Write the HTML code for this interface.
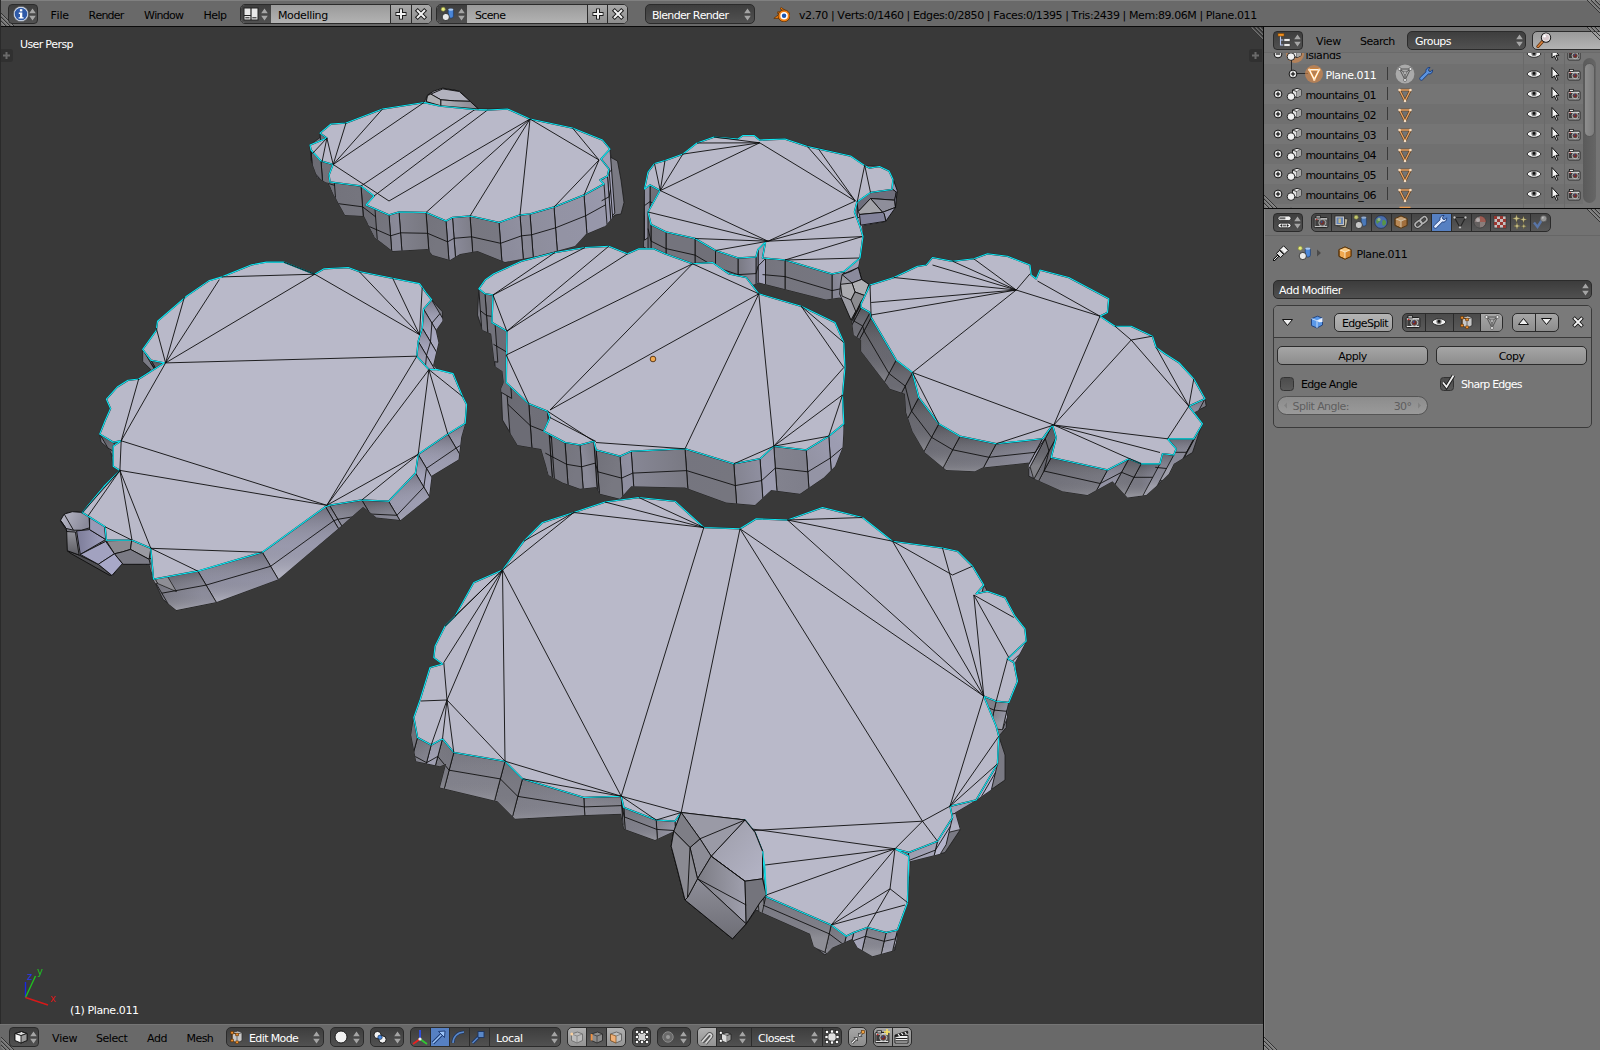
<!DOCTYPE html>
<html><head><meta charset="utf-8"><title>Blender</title>
<style>
*{box-sizing:border-box;margin:0;padding:0}
html,body{width:1600px;height:1050px;overflow:hidden;background:#727272;font-family:"DejaVu Sans","Liberation Sans",sans-serif;font-size:11px;color:#000}
.abs{position:absolute}
.t{position:absolute;white-space:nowrap;line-height:14px;font-size:11px;font-kerning:none}
.w{color:#fff}
.hdr{position:absolute;background:#727272}
.btn{position:absolute;border:1px solid #2b2b2b;border-radius:4px}
.dk{background:linear-gradient(#3e3e3e,#515151)}
.lt{background:linear-gradient(#a6a6a6,#8c8c8c)}
.fld{background:linear-gradient(#9a9a9a,#b3b3b3)}
.ud{position:absolute;width:7px;height:12px}
.ud:before,.ud:after{content:"";position:absolute;left:0;border-left:3.5px solid transparent;border-right:3.5px solid transparent}
.ud:before{top:0;border-bottom:5px solid #a0a0a0}
.ud:after{bottom:0;border-top:5px solid #a0a0a0}
</style></head><body>
<svg class="abs" style="left:0;top:27px" width="1263" height="997" viewBox="0 27 1263 997">
<rect x="0" y="27" width="1263" height="997" fill="#393939"/>
<g id="isl1">
<clipPath id="c1"><polygon points="310.0,145.0 320.0,137.5 320.0,132.5 331.0,124.0 346.0,123.0 382.5,109.0 424.0,102.5 427.5,95.0 442.5,89.0 455.0,90.0 462.5,94.0 477.5,109.0 507.5,109.0 530.0,119.0 572.5,128.0 602.5,140.0 610.0,149.0 611.0,157.5 617.5,161.0 621.0,180.0 624.0,202.5 621.0,214.0 615.0,215.0 605.0,226.0 586.0,234.0 575.0,246.0 537.5,256.0 505.0,262.0 477.5,251.0 460.0,254.0 450.0,260.0 432.5,255.0 427.5,249.0 392.5,251.0 375.0,237.5 364.0,216.0 345.0,215.0 334.0,195.0 329.0,184.0 317.5,177.5 311.0,160.0"/></clipPath>
<polygon points="310.0,145.0 320.0,137.5 320.0,132.5 331.0,124.0 346.0,123.0 382.5,109.0 424.0,102.5 427.5,95.0 442.5,89.0 455.0,90.0 462.5,94.0 477.5,109.0 507.5,109.0 530.0,119.0 572.5,128.0 602.5,140.0 610.0,149.0 611.0,157.5 617.5,161.0 621.0,180.0 624.0,202.5 621.0,214.0 615.0,215.0 605.0,226.0 586.0,234.0 575.0,246.0 537.5,256.0 505.0,262.0 477.5,251.0 460.0,254.0 450.0,260.0 432.5,255.0 427.5,249.0 392.5,251.0 375.0,237.5 364.0,216.0 345.0,215.0 334.0,195.0 329.0,184.0 317.5,177.5 311.0,160.0" fill="#7a7a84" stroke="#1a1a1a" stroke-width="0.8"/>
<defs><linearGradient id="g1_1" gradientUnits="userSpaceOnUse" x1="326.9" y1="138.1" x2="320.0" y2="133.1"><stop offset="0" stop-color="#6e6e77"/><stop offset="1" stop-color="#6d6d75"/></linearGradient><linearGradient id="g1_14" gradientUnits="userSpaceOnUse" x1="610.0" y1="149.0" x2="601.0" y2="159.0"><stop offset="0" stop-color="#a1a1b6"/><stop offset="1" stop-color="#a1a1b7"/></linearGradient><linearGradient id="g1_16" gradientUnits="userSpaceOnUse" x1="609.0" y1="169.0" x2="607.5" y2="176.0"><stop offset="0" stop-color="#a6a6be"/><stop offset="1" stop-color="#a4a4bb"/></linearGradient><linearGradient id="g1_17" gradientUnits="userSpaceOnUse" x1="607.5" y1="176.0" x2="600.0" y2="180.0"><stop offset="0" stop-color="#9b9baf"/><stop offset="1" stop-color="#9999ad"/></linearGradient><linearGradient id="g1_19" gradientUnits="userSpaceOnUse" x1="604.0" y1="184.0" x2="584.0" y2="195.0"><stop offset="0" stop-color="#9a9aad"/><stop offset="1" stop-color="#9797aa"/></linearGradient><linearGradient id="g1_20" gradientUnits="userSpaceOnUse" x1="584.0" y1="195.0" x2="554.0" y2="207.0"><stop offset="0" stop-color="#9494a6"/><stop offset="1" stop-color="#9393a4"/></linearGradient><linearGradient id="g1_21" gradientUnits="userSpaceOnUse" x1="554.0" y1="207.0" x2="530.0" y2="214.0"><stop offset="0" stop-color="#9090a1"/><stop offset="1" stop-color="#8e8e9d"/></linearGradient><linearGradient id="g1_22" gradientUnits="userSpaceOnUse" x1="530.0" y1="214.0" x2="520.0" y2="215.0"><stop offset="0" stop-color="#888896"/><stop offset="1" stop-color="#898997"/></linearGradient><linearGradient id="g1_23" gradientUnits="userSpaceOnUse" x1="520.0" y1="215.0" x2="499.0" y2="222.5"><stop offset="0" stop-color="#9090a0"/><stop offset="1" stop-color="#8c8c9c"/></linearGradient><linearGradient id="g1_24" gradientUnits="userSpaceOnUse" x1="499.0" y1="222.5" x2="470.0" y2="216.0"><stop offset="0" stop-color="#787882"/><stop offset="1" stop-color="#777780"/></linearGradient><linearGradient id="g1_25" gradientUnits="userSpaceOnUse" x1="470.0" y1="216.0" x2="452.5" y2="217.5"><stop offset="0" stop-color="#7e7e89"/><stop offset="1" stop-color="#8a8a99"/></linearGradient><linearGradient id="g1_26" gradientUnits="userSpaceOnUse" x1="452.5" y1="217.5" x2="446.0" y2="221.0"><stop offset="0" stop-color="#9494a6"/><stop offset="1" stop-color="#8f8fa0"/></linearGradient><linearGradient id="g1_27" gradientUnits="userSpaceOnUse" x1="446.0" y1="221.0" x2="426.0" y2="212.5"><stop offset="0" stop-color="#76767f"/><stop offset="1" stop-color="#73737c"/></linearGradient><linearGradient id="g1_28" gradientUnits="userSpaceOnUse" x1="426.0" y1="212.5" x2="399.0" y2="212.0"><stop offset="0" stop-color="#787881"/><stop offset="1" stop-color="#82828e"/></linearGradient><linearGradient id="g1_29" gradientUnits="userSpaceOnUse" x1="399.0" y1="212.0" x2="389.0" y2="215.0"><stop offset="0" stop-color="#8c8c9c"/><stop offset="1" stop-color="#888896"/></linearGradient><linearGradient id="g1_30" gradientUnits="userSpaceOnUse" x1="389.0" y1="215.0" x2="366.0" y2="205.0"><stop offset="0" stop-color="#75757e"/><stop offset="1" stop-color="#707078"/></linearGradient><linearGradient id="g1_32" gradientUnits="userSpaceOnUse" x1="374.0" y1="196.0" x2="361.0" y2="186.0"><stop offset="0" stop-color="#6c6c74"/><stop offset="1" stop-color="#6f6f77"/></linearGradient><linearGradient id="g1_33" gradientUnits="userSpaceOnUse" x1="361.0" y1="186.0" x2="330.0" y2="182.0"><stop offset="0" stop-color="#75757e"/><stop offset="1" stop-color="#73737c"/></linearGradient><linearGradient id="g1_34" gradientUnits="userSpaceOnUse" x1="330.0" y1="182.0" x2="329.0" y2="175.0"><stop offset="0" stop-color="#686870"/><stop offset="1" stop-color="#64646c"/></linearGradient><linearGradient id="g1_36" gradientUnits="userSpaceOnUse" x1="333.0" y1="164.5" x2="321.0" y2="161.0"><stop offset="0" stop-color="#717179"/><stop offset="1" stop-color="#72727a"/></linearGradient><linearGradient id="g1_37" gradientUnits="userSpaceOnUse" x1="321.0" y1="161.0" x2="311.0" y2="150.0"><stop offset="0" stop-color="#6c6c74"/><stop offset="1" stop-color="#696970"/></linearGradient><linearGradient id="g1_38" gradientUnits="userSpaceOnUse" x1="311.0" y1="150.0" x2="310.0" y2="145.0"><stop offset="0" stop-color="#66666d"/><stop offset="1" stop-color="#67676f"/></linearGradient></defs>
<g clip-path="url(#c1)" stroke="#111" stroke-width="0.9">
<polygon points="326.9,138.1 320.0,133.1 324.8,197.1 331.7,202.1" fill="url(#g1_1)"/>
<polygon points="610.0,149.0 601.0,159.0 605.8,223.0 614.8,213.0" fill="url(#g1_14)"/>
<polygon points="609.0,169.0 607.5,176.0 612.3,240.0 613.8,233.0" fill="url(#g1_16)"/>
<polygon points="607.5,176.0 600.0,180.0 604.8,244.0 612.3,240.0" fill="url(#g1_17)"/>
<polygon points="604.0,184.0 584.0,195.0 588.8,259.0 608.8,248.0" fill="url(#g1_19)"/>
<polygon points="584.0,195.0 554.0,207.0 558.8,271.0 588.8,259.0" fill="url(#g1_20)"/>
<polygon points="554.0,207.0 530.0,214.0 534.8,278.0 558.8,271.0" fill="url(#g1_21)"/>
<polygon points="530.0,214.0 520.0,215.0 524.8,279.0 534.8,278.0" fill="url(#g1_22)"/>
<polygon points="520.0,215.0 499.0,222.5 503.8,286.5 524.8,279.0" fill="url(#g1_23)"/>
<polygon points="499.0,222.5 470.0,216.0 474.8,280.0 503.8,286.5" fill="url(#g1_24)"/>
<polygon points="470.0,216.0 452.5,217.5 457.3,281.5 474.8,280.0" fill="url(#g1_25)"/>
<polygon points="452.5,217.5 446.0,221.0 450.8,285.0 457.3,281.5" fill="url(#g1_26)"/>
<polygon points="446.0,221.0 426.0,212.5 430.8,276.5 450.8,285.0" fill="url(#g1_27)"/>
<polygon points="426.0,212.5 399.0,212.0 403.8,276.0 430.8,276.5" fill="url(#g1_28)"/>
<polygon points="399.0,212.0 389.0,215.0 393.8,279.0 403.8,276.0" fill="url(#g1_29)"/>
<polygon points="389.0,215.0 366.0,205.0 370.8,269.0 393.8,279.0" fill="url(#g1_30)"/>
<polygon points="374.0,196.0 361.0,186.0 365.8,250.0 378.8,260.0" fill="url(#g1_32)"/>
<polygon points="361.0,186.0 330.0,182.0 334.8,246.0 365.8,250.0" fill="url(#g1_33)"/>
<polygon points="330.0,182.0 329.0,175.0 333.8,239.0 334.8,246.0" fill="url(#g1_34)"/>
<polygon points="333.0,164.5 321.0,161.0 325.8,225.0 337.8,228.5" fill="url(#g1_36)"/>
<polygon points="321.0,161.0 311.0,150.0 315.8,214.0 325.8,225.0" fill="url(#g1_37)"/>
<polygon points="311.0,150.0 310.0,145.0 314.8,209.0 315.8,214.0" fill="url(#g1_38)"/>
<line x1="328.5" y1="158.9" x2="321.6" y2="153.9"/>
<line x1="611.6" y1="169.8" x2="602.6" y2="179.8"/>
<line x1="610.6" y1="189.8" x2="609.1" y2="196.8"/>
<line x1="609.1" y1="196.8" x2="601.6" y2="200.8"/>
<line x1="605.6" y1="204.8" x2="585.6" y2="215.8"/>
<line x1="585.6" y1="215.8" x2="555.6" y2="227.8"/>
<line x1="555.6" y1="227.8" x2="531.6" y2="234.8"/>
<line x1="531.6" y1="234.8" x2="521.6" y2="235.8"/>
<line x1="521.6" y1="235.8" x2="500.6" y2="243.3"/>
<line x1="500.6" y1="243.3" x2="471.6" y2="236.8"/>
<line x1="471.6" y1="236.8" x2="454.1" y2="238.3"/>
<line x1="454.1" y1="238.3" x2="447.6" y2="241.8"/>
<line x1="447.6" y1="241.8" x2="427.6" y2="233.3"/>
<line x1="427.6" y1="233.3" x2="400.6" y2="232.8"/>
<line x1="400.6" y1="232.8" x2="390.6" y2="235.8"/>
<line x1="390.6" y1="235.8" x2="367.6" y2="225.8"/>
<line x1="375.6" y1="216.8" x2="362.6" y2="206.8"/>
<line x1="362.6" y1="206.8" x2="331.6" y2="202.8"/>
<line x1="331.6" y1="202.8" x2="330.6" y2="195.8"/>
<line x1="334.6" y1="185.3" x2="322.6" y2="181.8"/>
<line x1="322.6" y1="181.8" x2="312.6" y2="170.8"/>
<line x1="312.6" y1="170.8" x2="311.6" y2="165.8"/>
</g>
<polygon points="310.0,145.0 326.9,138.1 320.0,133.1 331.0,124.0 346.0,123.0 382.5,109.0 424.0,102.5 440.0,106.0 475.0,109.5 487.5,110.0 507.5,109.0 530.0,119.0 572.5,128.0 602.5,140.0 610.0,149.0 601.0,159.0 609.0,169.0 607.5,176.0 600.0,180.0 604.0,184.0 584.0,195.0 554.0,207.0 530.0,214.0 520.0,215.0 499.0,222.5 470.0,216.0 452.5,217.5 446.0,221.0 426.0,212.5 399.0,212.0 389.0,215.0 366.0,205.0 374.0,196.0 361.0,186.0 330.0,182.0 329.0,175.0 333.0,164.5 321.0,161.0 311.0,150.0" fill="#b9b9c9" stroke="#14202a" stroke-width="1.5" stroke-linejoin="round"/>
<polygon points="310.0,145.0 326.9,138.1 320.0,133.1 331.0,124.0 346.0,123.0 382.5,109.0 424.0,102.5 440.0,106.0 475.0,109.5 487.5,110.0 507.5,109.0 530.0,119.0 572.5,128.0 602.5,140.0 610.0,149.0 601.0,159.0 609.0,169.0 607.5,176.0 600.0,180.0 604.0,184.0 584.0,195.0 554.0,207.0 530.0,214.0 520.0,215.0 499.0,222.5 470.0,216.0 452.5,217.5 446.0,221.0 426.0,212.5 399.0,212.0 389.0,215.0 366.0,205.0 374.0,196.0 361.0,186.0 330.0,182.0 329.0,175.0 333.0,164.5 321.0,161.0 311.0,150.0" fill="none" stroke="#10e6f0" stroke-width="1.15" stroke-linejoin="round"/>
<g fill="none" stroke="#0c0c0c" stroke-width="0.9">
<polyline points="333.2,164.5 346.0,123.0"/>
<polyline points="333.2,164.5 382.5,109.0"/>
<polyline points="333.2,164.5 424.0,102.5"/>
<polyline points="333.2,164.5 326.9,138.1"/>
<polyline points="333.2,164.5 389.0,201.0"/>
<polyline points="326.9,138.1 322.0,162.0"/>
<polyline points="326.9,138.1 312.5,153.5"/>
<polyline points="475.0,109.5 361.0,186.0"/>
<polyline points="487.5,110.0 374.0,196.0"/>
<polyline points="530.0,119.0 389.0,201.0"/>
<polyline points="530.0,119.0 426.0,212.5"/>
<polyline points="530.0,119.0 470.0,216.0"/>
<polyline points="530.0,119.0 520.0,215.0"/>
<polyline points="599.0,160.0 530.0,119.0"/>
<polyline points="599.0,160.0 572.5,128.0"/>
<polyline points="599.0,160.0 554.0,207.0"/>
<polyline points="599.0,160.0 584.0,195.0"/>
</g>
<polygon points="426.3,101.6 427.8,94.9 433.8,91.1 442.8,88.1 459.3,91.1 478.8,109.5 440.9,105.8" fill="#a4a4ae" stroke="#0c0c0c" stroke-width="0.9" stroke-linejoin="round" />
<defs><linearGradient id="bg1" x1="0" y1="0" x2="1" y2="0"><stop offset="0" stop-color="#b2b2ba"/><stop offset="1" stop-color="#85858f"/></linearGradient></defs>
<polygon points="430.8,94.1 442.8,88.9 459.3,91.5 470.1,101.3 454.8,100.9 440.9,99.8" fill="#b2b2be" stroke="#0c0c0c" stroke-width="0.9" stroke-linejoin="round" />
<polygon points="427.5,95.5 430.8,94.1 440.9,99.8 440.9,105.8 426.3,101.6" fill="#b0b0b4" stroke="#0c0c0c" stroke-width="0.9" stroke-linejoin="round" />
<polygon points="440.9,99.8 454.8,100.9 470.1,101.3 478.4,109.0 440.9,105.8" fill="url(#bg1)" stroke="#0c0c0c" stroke-width="0.9" stroke-linejoin="round" />
<polyline points="424,102.5 440,106 475,109.5 487.5,110" fill="none" stroke="#18d8e0" stroke-width="1.2"/>
</g>
<g id="isl2">
<clipPath id="c2"><polygon points="644.5,189.0 648.0,172.0 654.5,163.5 665.0,160.5 683.0,154.0 697.0,143.0 714.0,137.0 738.0,139.0 743.0,135.5 754.0,135.5 759.5,140.0 785.0,139.0 800.0,144.0 850.5,156.0 864.5,165.5 879.5,166.5 889.0,171.0 893.0,179.5 896.5,190.5 894.5,205.5 885.0,221.5 862.0,225.5 863.0,236.5 860.0,258.0 858.0,267.5 860.0,279.0 867.5,284.5 862.0,305.0 856.0,305.0 839.5,297.5 826.0,299.5 759.0,282.5 740.0,290.0 700.0,270.0 660.0,255.0 643.5,247.0"/></clipPath>
<polygon points="644.5,189.0 648.0,172.0 654.5,163.5 665.0,160.5 683.0,154.0 697.0,143.0 714.0,137.0 738.0,139.0 743.0,135.5 754.0,135.5 759.5,140.0 785.0,139.0 800.0,144.0 850.5,156.0 864.5,165.5 879.5,166.5 889.0,171.0 893.0,179.5 896.5,190.5 894.5,205.5 885.0,221.5 862.0,225.5 863.0,236.5 860.0,258.0 858.0,267.5 860.0,279.0 867.5,284.5 862.0,305.0 856.0,305.0 839.5,297.5 826.0,299.5 759.0,282.5 740.0,290.0 700.0,270.0 660.0,255.0 643.5,247.0" fill="#7a7a84" stroke="#1a1a1a" stroke-width="0.8"/>
<defs><linearGradient id="g2_1" gradientUnits="userSpaceOnUse" x1="660.0" y1="190.5" x2="650.0" y2="185.0"><stop offset="0" stop-color="#6d6d76"/><stop offset="1" stop-color="#75757e"/></linearGradient><linearGradient id="g2_2" gradientUnits="userSpaceOnUse" x1="650.0" y1="185.0" x2="644.5" y2="189.0"><stop offset="0" stop-color="#9292a4"/><stop offset="1" stop-color="#8d8d9d"/></linearGradient><linearGradient id="g2_22" gradientUnits="userSpaceOnUse" x1="893.0" y1="179.5" x2="892.0" y2="189.5"><stop offset="0" stop-color="#a7a7bf"/><stop offset="1" stop-color="#a2a2b9"/></linearGradient><linearGradient id="g2_23" gradientUnits="userSpaceOnUse" x1="892.0" y1="189.5" x2="870.5" y2="192.5"><stop offset="0" stop-color="#9292a3"/><stop offset="1" stop-color="#8d8d9d"/></linearGradient><linearGradient id="g2_24" gradientUnits="userSpaceOnUse" x1="870.5" y1="192.5" x2="857.0" y2="202.0"><stop offset="0" stop-color="#9898aa"/><stop offset="1" stop-color="#9e9eb3"/></linearGradient><linearGradient id="g2_25" gradientUnits="userSpaceOnUse" x1="857.0" y1="202.0" x2="854.5" y2="212.0"><stop offset="0" stop-color="#a5a5bc"/><stop offset="1" stop-color="#a7a7bf"/></linearGradient><linearGradient id="g2_28" gradientUnits="userSpaceOnUse" x1="863.0" y1="236.5" x2="860.0" y2="258.0"><stop offset="0" stop-color="#a8a8bf"/><stop offset="1" stop-color="#a6a6bd"/></linearGradient><linearGradient id="g2_29" gradientUnits="userSpaceOnUse" x1="860.0" y1="258.0" x2="844.0" y2="271.5"><stop offset="0" stop-color="#a0a0b5"/><stop offset="1" stop-color="#9a9aae"/></linearGradient><linearGradient id="g2_30" gradientUnits="userSpaceOnUse" x1="844.0" y1="271.5" x2="832.0" y2="274.0"><stop offset="0" stop-color="#9090a1"/><stop offset="1" stop-color="#858593"/></linearGradient><linearGradient id="g2_31" gradientUnits="userSpaceOnUse" x1="832.0" y1="274.0" x2="785.0" y2="260.0"><stop offset="0" stop-color="#767680"/><stop offset="1" stop-color="#75757e"/></linearGradient><linearGradient id="g2_32" gradientUnits="userSpaceOnUse" x1="785.0" y1="260.0" x2="762.5" y2="258.0"><stop offset="0" stop-color="#777781"/><stop offset="1" stop-color="#74747d"/></linearGradient><linearGradient id="g2_34" gradientUnits="userSpaceOnUse" x1="765.5" y1="242.0" x2="758.0" y2="249.5"><stop offset="0" stop-color="#9292a3"/><stop offset="1" stop-color="#a1a1b7"/></linearGradient><linearGradient id="g2_35" gradientUnits="userSpaceOnUse" x1="758.0" y1="249.5" x2="756.0" y2="257.0"><stop offset="0" stop-color="#a5a5bd"/><stop offset="1" stop-color="#a1a1b7"/></linearGradient><linearGradient id="g2_36" gradientUnits="userSpaceOnUse" x1="756.0" y1="257.0" x2="738.0" y2="258.0"><stop offset="0" stop-color="#8f8f9f"/><stop offset="1" stop-color="#797983"/></linearGradient><linearGradient id="g2_37" gradientUnits="userSpaceOnUse" x1="738.0" y1="258.0" x2="715.5" y2="250.5"><stop offset="0" stop-color="#75757e"/><stop offset="1" stop-color="#72727b"/></linearGradient><linearGradient id="g2_38" gradientUnits="userSpaceOnUse" x1="715.5" y1="250.5" x2="695.0" y2="238.5"><stop offset="0" stop-color="#707078"/><stop offset="1" stop-color="#707079"/></linearGradient><linearGradient id="g2_39" gradientUnits="userSpaceOnUse" x1="695.0" y1="238.5" x2="666.0" y2="232.0"><stop offset="0" stop-color="#74747d"/><stop offset="1" stop-color="#74747d"/></linearGradient><linearGradient id="g2_40" gradientUnits="userSpaceOnUse" x1="666.0" y1="232.0" x2="651.0" y2="224.5"><stop offset="0" stop-color="#71717a"/><stop offset="1" stop-color="#6e6e76"/></linearGradient><linearGradient id="g2_41" gradientUnits="userSpaceOnUse" x1="651.0" y1="224.5" x2="648.0" y2="212.0"><stop offset="0" stop-color="#67676f"/><stop offset="1" stop-color="#65656c"/></linearGradient></defs>
<g clip-path="url(#c2)" stroke="#111" stroke-width="0.9">
<polygon points="660.0,190.5 650.0,185.0 650.0,236.2 660.0,241.7" fill="url(#g2_1)"/>
<polygon points="650.0,185.0 644.5,189.0 644.5,240.2 650.0,236.2" fill="url(#g2_2)"/>
<polygon points="893.0,179.5 892.0,189.5 892.0,240.7 893.0,230.7" fill="url(#g2_22)"/>
<polygon points="892.0,189.5 870.5,192.5 870.5,243.7 892.0,240.7" fill="url(#g2_23)"/>
<polygon points="870.5,192.5 857.0,202.0 857.0,253.2 870.5,243.7" fill="url(#g2_24)"/>
<polygon points="857.0,202.0 854.5,212.0 854.5,263.2 857.0,253.2" fill="url(#g2_25)"/>
<polygon points="863.0,236.5 860.0,258.0 860.0,309.2 863.0,287.7" fill="url(#g2_28)"/>
<polygon points="860.0,258.0 844.0,271.5 844.0,322.7 860.0,309.2" fill="url(#g2_29)"/>
<polygon points="844.0,271.5 832.0,274.0 832.0,325.2 844.0,322.7" fill="url(#g2_30)"/>
<polygon points="832.0,274.0 785.0,260.0 785.0,311.2 832.0,325.2" fill="url(#g2_31)"/>
<polygon points="785.0,260.0 762.5,258.0 762.5,309.2 785.0,311.2" fill="url(#g2_32)"/>
<polygon points="765.5,242.0 758.0,249.5 758.0,300.7 765.5,293.2" fill="url(#g2_34)"/>
<polygon points="758.0,249.5 756.0,257.0 756.0,308.2 758.0,300.7" fill="url(#g2_35)"/>
<polygon points="756.0,257.0 738.0,258.0 738.0,309.2 756.0,308.2" fill="url(#g2_36)"/>
<polygon points="738.0,258.0 715.5,250.5 715.5,301.7 738.0,309.2" fill="url(#g2_37)"/>
<polygon points="715.5,250.5 695.0,238.5 695.0,289.7 715.5,301.7" fill="url(#g2_38)"/>
<polygon points="695.0,238.5 666.0,232.0 666.0,283.2 695.0,289.7" fill="url(#g2_39)"/>
<polygon points="666.0,232.0 651.0,224.5 651.0,275.7 666.0,283.2" fill="url(#g2_40)"/>
<polygon points="651.0,224.5 648.0,212.0 648.0,263.2 651.0,275.7" fill="url(#g2_41)"/>
<line x1="660.0" y1="207.1" x2="650.0" y2="201.6"/>
<line x1="650.0" y1="201.6" x2="644.5" y2="205.6"/>
<line x1="893.0" y1="196.1" x2="892.0" y2="206.1"/>
<line x1="892.0" y1="206.1" x2="870.5" y2="209.1"/>
<line x1="870.5" y1="209.1" x2="857.0" y2="218.6"/>
<line x1="857.0" y1="218.6" x2="854.5" y2="228.6"/>
<line x1="863.0" y1="253.1" x2="860.0" y2="274.6"/>
<line x1="860.0" y1="274.6" x2="844.0" y2="288.1"/>
<line x1="844.0" y1="288.1" x2="832.0" y2="290.6"/>
<line x1="832.0" y1="290.6" x2="785.0" y2="276.6"/>
<line x1="785.0" y1="276.6" x2="762.5" y2="274.6"/>
<line x1="765.5" y1="258.6" x2="758.0" y2="266.1"/>
<line x1="758.0" y1="266.1" x2="756.0" y2="273.6"/>
<line x1="756.0" y1="273.6" x2="738.0" y2="274.6"/>
<line x1="738.0" y1="274.6" x2="715.5" y2="267.1"/>
<line x1="715.5" y1="267.1" x2="695.0" y2="255.1"/>
<line x1="695.0" y1="255.1" x2="666.0" y2="248.6"/>
<line x1="666.0" y1="248.6" x2="651.0" y2="241.1"/>
<line x1="651.0" y1="241.1" x2="648.0" y2="228.6"/>
</g>
<polygon points="868.8,192.9 892.3,188.8 896.3,192.1 894.7,200.2 870.5,198.5 858.3,211.5 856.7,201.0" fill="#6e6e7c" stroke="#0c0c0c" stroke-width="0.9" stroke-linejoin="round" />
<polygon points="870.5,198.5 894.7,200.2 895.5,207.4 882.6,212.3" fill="#8e8e9a" stroke="#0c0c0c" stroke-width="0.9" stroke-linejoin="round" />
<polygon points="870.5,198.5 882.6,212.3 859.5,214.5 858.3,211.5" fill="#a4a4aa" stroke="#0c0c0c" stroke-width="0.9" stroke-linejoin="round" />
<polygon points="882.6,212.3 895.5,207.4 885.8,221.2 884.2,213.9" fill="#9a9ab0" stroke="#0c0c0c" stroke-width="0.9" stroke-linejoin="round" />
<polygon points="859.5,214.5 882.6,212.3 884.2,213.9 885.8,221.2 860.7,225.2" fill="#82829a" stroke="#0c0c0c" stroke-width="0.9" stroke-linejoin="round" />
<polygon points="892.3,188.8 893.1,179.1 897.2,190.5 895.5,207.4 894.7,200.2 896.3,192.1" fill="#9696b0" stroke="#0c0c0c" stroke-width="0.9" stroke-linejoin="round" />
<polygon points="648.0,212.0 660.0,190.5 650.0,185.0 644.5,189.0 648.0,172.0 654.5,163.5 665.0,160.5 683.0,154.0 697.0,143.0 714.0,137.0 738.0,139.0 743.0,135.5 754.0,135.5 759.5,140.0 785.0,139.0 800.0,144.0 807.5,146.5 850.5,156.0 864.5,165.5 869.5,168.0 879.5,166.5 889.0,171.0 893.0,179.5 892.0,189.5 870.5,192.5 857.0,202.0 854.5,212.0 860.0,226.5 863.0,236.5 860.0,258.0 844.0,271.5 832.0,274.0 785.0,260.0 762.5,258.0 765.5,242.0 758.0,249.5 756.0,257.0 738.0,258.0 715.5,250.5 695.0,238.5 666.0,232.0 651.0,224.5" fill="#b9b9c9" stroke="#14202a" stroke-width="1.5" stroke-linejoin="round"/>
<polygon points="648.0,212.0 660.0,190.5 650.0,185.0 644.5,189.0 648.0,172.0 654.5,163.5 665.0,160.5 683.0,154.0 697.0,143.0 714.0,137.0 738.0,139.0 743.0,135.5 754.0,135.5 759.5,140.0 785.0,139.0 800.0,144.0 807.5,146.5 850.5,156.0 864.5,165.5 869.5,168.0 879.5,166.5 889.0,171.0 893.0,179.5 892.0,189.5 870.5,192.5 857.0,202.0 854.5,212.0 860.0,226.5 863.0,236.5 860.0,258.0 844.0,271.5 832.0,274.0 785.0,260.0 762.5,258.0 765.5,242.0 758.0,249.5 756.0,257.0 738.0,258.0 715.5,250.5 695.0,238.5 666.0,232.0 651.0,224.5" fill="none" stroke="#10e6f0" stroke-width="1.15" stroke-linejoin="round"/>
<g fill="none" stroke="#0c0c0c" stroke-width="0.9">
<polyline points="759.7,142.8 660.3,190.6"/>
<polyline points="759.7,142.8 682.8,154.1"/>
<polyline points="759.7,142.8 697.0,143.0"/>
<polyline points="759.7,142.8 855.3,201.0"/>
<polyline points="759.7,142.8 714.0,137.0"/>
<polyline points="660.3,190.6 768.0,241.2"/>
<polyline points="660.3,190.6 682.8,154.1"/>
<polyline points="660.3,190.6 665.0,160.5"/>
<polyline points="660.3,190.6 654.5,163.5"/>
<polyline points="768.0,241.2 855.3,201.0"/>
<polyline points="768.0,241.2 854.4,217.0"/>
<polyline points="768.0,241.2 862.0,236.6"/>
<polyline points="768.0,241.2 648.0,212.0"/>
<polyline points="768.0,241.2 695.0,238.5"/>
<polyline points="768.0,241.2 715.5,250.5"/>
<polyline points="807.5,146.6 855.3,201.0"/>
<polyline points="818.8,149.4 855.3,201.0"/>
<polyline points="864.7,165.3 857.2,202.0"/>
<polyline points="785.0,260.0 862.0,236.6"/>
<polyline points="785.0,260.0 859.0,258.0"/>
<polyline points="864.7,165.3 870.5,192.5"/>
</g>
</g>
<g id="isl5">
<clipPath id="c5"><polygon points="861.2,303.8 870.0,285.0 893.8,277.5 917.5,266.2 926.2,265.0 932.5,257.5 952.5,261.2 973.8,258.8 987.5,253.8 1007.5,256.2 1030.0,265.0 1031.2,275.0 1036.2,278.8 1040.0,270.0 1068.8,277.5 1108.8,298.8 1107.5,312.5 1100.0,316.2 1115.0,326.2 1131.2,326.2 1152.5,336.2 1156.2,347.5 1165.0,353.8 1178.8,362.5 1193.8,378.8 1205.0,398.8 1206.2,406.2 1193.8,412.5 1202.5,423.8 1200.0,430.0 1192.5,452.5 1173.8,463.8 1168.8,473.8 1157.5,485.0 1146.2,495.0 1127.5,497.5 1112.5,481.2 1087.5,495.0 1062.5,491.2 1028.8,476.2 1028.8,462.5 982.5,467.5 975.0,471.2 946.2,470.0 925.0,452.5 912.5,431.2 906.2,412.5 905.0,393.8 890.0,388.8 861.2,351.2 861.2,340.0 853.8,335.0 851.2,315.0"/></clipPath>
<polygon points="861.2,303.8 870.0,285.0 893.8,277.5 917.5,266.2 926.2,265.0 932.5,257.5 952.5,261.2 973.8,258.8 987.5,253.8 1007.5,256.2 1030.0,265.0 1031.2,275.0 1036.2,278.8 1040.0,270.0 1068.8,277.5 1108.8,298.8 1107.5,312.5 1100.0,316.2 1115.0,326.2 1131.2,326.2 1152.5,336.2 1156.2,347.5 1165.0,353.8 1178.8,362.5 1193.8,378.8 1205.0,398.8 1206.2,406.2 1193.8,412.5 1202.5,423.8 1200.0,430.0 1192.5,452.5 1173.8,463.8 1168.8,473.8 1157.5,485.0 1146.2,495.0 1127.5,497.5 1112.5,481.2 1087.5,495.0 1062.5,491.2 1028.8,476.2 1028.8,462.5 982.5,467.5 975.0,471.2 946.2,470.0 925.0,452.5 912.5,431.2 906.2,412.5 905.0,393.8 890.0,388.8 861.2,351.2 861.2,340.0 853.8,335.0 851.2,315.0" fill="#7a7a84" stroke="#1a1a1a" stroke-width="0.8"/>
<defs><linearGradient id="g5_0" gradientUnits="userSpaceOnUse" x1="861.2" y1="303.8" x2="870.0" y2="285.0"><stop offset="0" stop-color="#66666d"/><stop offset="1" stop-color="#696971"/></linearGradient><linearGradient id="g5_12" gradientUnits="userSpaceOnUse" x1="1036.2" y1="278.8" x2="1040.0" y2="270.0"><stop offset="0" stop-color="#6d6d76"/><stop offset="1" stop-color="#6c6c74"/></linearGradient><linearGradient id="g5_16" gradientUnits="userSpaceOnUse" x1="1107.5" y1="312.5" x2="1100.0" y2="316.2"><stop offset="0" stop-color="#9b9baf"/><stop offset="1" stop-color="#9797aa"/></linearGradient><linearGradient id="g5_25" gradientUnits="userSpaceOnUse" x1="1205.0" y1="398.8" x2="1188.8" y2="406.2"><stop offset="0" stop-color="#9999ad"/><stop offset="1" stop-color="#9898ac"/></linearGradient><linearGradient id="g5_27" gradientUnits="userSpaceOnUse" x1="1202.5" y1="423.8" x2="1193.8" y2="438.8"><stop offset="0" stop-color="#a4a4ba"/><stop offset="1" stop-color="#9e9eb3"/></linearGradient><linearGradient id="g5_28" gradientUnits="userSpaceOnUse" x1="1193.8" y1="438.8" x2="1167.5" y2="438.8"><stop offset="0" stop-color="#8b8b9a"/><stop offset="1" stop-color="#8a8a99"/></linearGradient><linearGradient id="g5_31" gradientUnits="userSpaceOnUse" x1="1173.8" y1="455.0" x2="1162.5" y2="453.8"><stop offset="0" stop-color="#878795"/><stop offset="1" stop-color="#888896"/></linearGradient><linearGradient id="g5_33" gradientUnits="userSpaceOnUse" x1="1160.0" y1="463.8" x2="1141.2" y2="463.8"><stop offset="0" stop-color="#8c8c9c"/><stop offset="1" stop-color="#787882"/></linearGradient><linearGradient id="g5_34" gradientUnits="userSpaceOnUse" x1="1141.2" y1="463.8" x2="1128.8" y2="458.8"><stop offset="0" stop-color="#74747d"/><stop offset="1" stop-color="#76767f"/></linearGradient><linearGradient id="g5_35" gradientUnits="userSpaceOnUse" x1="1128.8" y1="458.8" x2="1107.5" y2="470.0"><stop offset="0" stop-color="#8f8fa0"/><stop offset="1" stop-color="#9191a2"/></linearGradient><linearGradient id="g5_36" gradientUnits="userSpaceOnUse" x1="1107.5" y1="470.0" x2="1051.2" y2="457.5"><stop offset="0" stop-color="#797982"/><stop offset="1" stop-color="#71717a"/></linearGradient><linearGradient id="g5_37" gradientUnits="userSpaceOnUse" x1="1051.2" y1="457.5" x2="1056.2" y2="437.5"><stop offset="0" stop-color="#686870"/><stop offset="1" stop-color="#65656c"/></linearGradient><linearGradient id="g5_38" gradientUnits="userSpaceOnUse" x1="1056.2" y1="437.5" x2="1052.5" y2="425.0"><stop offset="0" stop-color="#65656c"/><stop offset="1" stop-color="#6e6e76"/></linearGradient><linearGradient id="g5_39" gradientUnits="userSpaceOnUse" x1="1052.5" y1="425.0" x2="1042.5" y2="438.8"><stop offset="0" stop-color="#9595a7"/><stop offset="1" stop-color="#9e9eb2"/></linearGradient><linearGradient id="g5_40" gradientUnits="userSpaceOnUse" x1="1042.5" y1="438.8" x2="996.2" y2="443.8"><stop offset="0" stop-color="#8f8f9f"/><stop offset="1" stop-color="#80808c"/></linearGradient><linearGradient id="g5_41" gradientUnits="userSpaceOnUse" x1="996.2" y1="443.8" x2="960.0" y2="436.2"><stop offset="0" stop-color="#777781"/><stop offset="1" stop-color="#74747d"/></linearGradient><linearGradient id="g5_42" gradientUnits="userSpaceOnUse" x1="960.0" y1="436.2" x2="938.8" y2="423.8"><stop offset="0" stop-color="#707079"/><stop offset="1" stop-color="#6d6d76"/></linearGradient><linearGradient id="g5_43" gradientUnits="userSpaceOnUse" x1="938.8" y1="423.8" x2="918.8" y2="397.5"><stop offset="0" stop-color="#6a6a72"/><stop offset="1" stop-color="#68686f"/></linearGradient><linearGradient id="g5_44" gradientUnits="userSpaceOnUse" x1="918.8" y1="397.5" x2="912.5" y2="372.5"><stop offset="0" stop-color="#66666d"/><stop offset="1" stop-color="#66666e"/></linearGradient><linearGradient id="g5_45" gradientUnits="userSpaceOnUse" x1="912.5" y1="372.5" x2="896.2" y2="360.0"><stop offset="0" stop-color="#6b6b73"/><stop offset="1" stop-color="#6b6b73"/></linearGradient><linearGradient id="g5_46" gradientUnits="userSpaceOnUse" x1="896.2" y1="360.0" x2="871.2" y2="317.5"><stop offset="0" stop-color="#686870"/><stop offset="1" stop-color="#67676e"/></linearGradient><linearGradient id="g5_47" gradientUnits="userSpaceOnUse" x1="871.2" y1="317.5" x2="870.0" y2="312.5"><stop offset="0" stop-color="#65656c"/><stop offset="1" stop-color="#67676e"/></linearGradient><linearGradient id="g5_48" gradientUnits="userSpaceOnUse" x1="870.0" y1="312.5" x2="861.2" y2="307.5"><stop offset="0" stop-color="#6d6d75"/><stop offset="1" stop-color="#6d6d75"/></linearGradient><linearGradient id="g5_49" gradientUnits="userSpaceOnUse" x1="861.2" y1="307.5" x2="861.2" y2="303.8"><stop offset="0" stop-color="#66666e"/><stop offset="1" stop-color="#64646c"/></linearGradient><linearGradient id="vg5" x1="0" y1="0" x2="0" y2="1"><stop offset="0" stop-color="#000" stop-opacity="0.25"/><stop offset="0.45" stop-color="#808080" stop-opacity="0"/><stop offset="0.75" stop-color="#fff" stop-opacity="0.18"/></linearGradient></defs>
<g clip-path="url(#c5)" stroke="#111" stroke-width="0.9">
<polygon points="861.2,303.8 870.0,285.0 847.6,326.6 838.9,345.4" fill="url(#g5_0)"/>
<polygon points="861.2,303.8 870.0,285.0 847.6,326.6 838.9,345.4" fill="url(#vg5)" stroke="none"/>
<polygon points="1036.2,278.8 1040.0,270.0 1017.6,311.6 1013.9,320.4" fill="url(#g5_12)"/>
<polygon points="1036.2,278.8 1040.0,270.0 1017.6,311.6 1013.9,320.4" fill="url(#vg5)" stroke="none"/>
<polygon points="1107.5,312.5 1100.0,316.2 1077.6,357.9 1085.1,354.1" fill="url(#g5_16)"/>
<polygon points="1107.5,312.5 1100.0,316.2 1077.6,357.9 1085.1,354.1" fill="url(#vg5)" stroke="none"/>
<polygon points="1205.0,398.8 1188.8,406.2 1166.3,447.9 1182.6,440.4" fill="url(#g5_25)"/>
<polygon points="1205.0,398.8 1188.8,406.2 1166.3,447.9 1182.6,440.4" fill="url(#vg5)" stroke="none"/>
<polygon points="1202.5,423.8 1193.8,438.8 1171.3,480.4 1180.1,465.4" fill="url(#g5_27)"/>
<polygon points="1202.5,423.8 1193.8,438.8 1171.3,480.4 1180.1,465.4" fill="url(#vg5)" stroke="none"/>
<polygon points="1193.8,438.8 1167.5,438.8 1145.1,480.4 1171.3,480.4" fill="url(#g5_28)"/>
<polygon points="1193.8,438.8 1167.5,438.8 1145.1,480.4 1171.3,480.4" fill="url(#vg5)" stroke="none"/>
<polygon points="1173.8,455.0 1162.5,453.8 1140.1,495.4 1151.3,496.6" fill="url(#g5_31)"/>
<polygon points="1173.8,455.0 1162.5,453.8 1140.1,495.4 1151.3,496.6" fill="url(#vg5)" stroke="none"/>
<polygon points="1160.0,463.8 1141.2,463.8 1118.8,505.4 1137.6,505.4" fill="url(#g5_33)"/>
<polygon points="1160.0,463.8 1141.2,463.8 1118.8,505.4 1137.6,505.4" fill="url(#vg5)" stroke="none"/>
<polygon points="1141.2,463.8 1128.8,458.8 1106.3,500.4 1118.8,505.4" fill="url(#g5_34)"/>
<polygon points="1141.2,463.8 1128.8,458.8 1106.3,500.4 1118.8,505.4" fill="url(#vg5)" stroke="none"/>
<polygon points="1128.8,458.8 1107.5,470.0 1085.1,511.6 1106.3,500.4" fill="url(#g5_35)"/>
<polygon points="1128.8,458.8 1107.5,470.0 1085.1,511.6 1106.3,500.4" fill="url(#vg5)" stroke="none"/>
<polygon points="1107.5,470.0 1051.2,457.5 1028.8,499.1 1085.1,511.6" fill="url(#g5_36)"/>
<polygon points="1107.5,470.0 1051.2,457.5 1028.8,499.1 1085.1,511.6" fill="url(#vg5)" stroke="none"/>
<polygon points="1051.2,457.5 1056.2,437.5 1033.8,479.1 1028.8,499.1" fill="url(#g5_37)"/>
<polygon points="1051.2,457.5 1056.2,437.5 1033.8,479.1 1028.8,499.1" fill="url(#vg5)" stroke="none"/>
<polygon points="1056.2,437.5 1052.5,425.0 1030.1,466.6 1033.8,479.1" fill="url(#g5_38)"/>
<polygon points="1056.2,437.5 1052.5,425.0 1030.1,466.6 1033.8,479.1" fill="url(#vg5)" stroke="none"/>
<polygon points="1052.5,425.0 1042.5,438.8 1020.1,480.4 1030.1,466.6" fill="url(#g5_39)"/>
<polygon points="1052.5,425.0 1042.5,438.8 1020.1,480.4 1030.1,466.6" fill="url(#vg5)" stroke="none"/>
<polygon points="1042.5,438.8 996.2,443.8 973.9,485.4 1020.1,480.4" fill="url(#g5_40)"/>
<polygon points="1042.5,438.8 996.2,443.8 973.9,485.4 1020.1,480.4" fill="url(#vg5)" stroke="none"/>
<polygon points="996.2,443.8 960.0,436.2 937.6,477.9 973.9,485.4" fill="url(#g5_41)"/>
<polygon points="996.2,443.8 960.0,436.2 937.6,477.9 973.9,485.4" fill="url(#vg5)" stroke="none"/>
<polygon points="960.0,436.2 938.8,423.8 916.4,465.4 937.6,477.9" fill="url(#g5_42)"/>
<polygon points="960.0,436.2 938.8,423.8 916.4,465.4 937.6,477.9" fill="url(#vg5)" stroke="none"/>
<polygon points="938.8,423.8 918.8,397.5 896.4,439.1 916.4,465.4" fill="url(#g5_43)"/>
<polygon points="938.8,423.8 918.8,397.5 896.4,439.1 916.4,465.4" fill="url(#vg5)" stroke="none"/>
<polygon points="918.8,397.5 912.5,372.5 890.1,414.1 896.4,439.1" fill="url(#g5_44)"/>
<polygon points="918.8,397.5 912.5,372.5 890.1,414.1 896.4,439.1" fill="url(#vg5)" stroke="none"/>
<polygon points="912.5,372.5 896.2,360.0 873.9,401.6 890.1,414.1" fill="url(#g5_45)"/>
<polygon points="912.5,372.5 896.2,360.0 873.9,401.6 890.1,414.1" fill="url(#vg5)" stroke="none"/>
<polygon points="896.2,360.0 871.2,317.5 848.9,359.1 873.9,401.6" fill="url(#g5_46)"/>
<polygon points="896.2,360.0 871.2,317.5 848.9,359.1 873.9,401.6" fill="url(#vg5)" stroke="none"/>
<polygon points="871.2,317.5 870.0,312.5 847.6,354.1 848.9,359.1" fill="url(#g5_47)"/>
<polygon points="871.2,317.5 870.0,312.5 847.6,354.1 848.9,359.1" fill="url(#vg5)" stroke="none"/>
<polygon points="870.0,312.5 861.2,307.5 838.9,349.1 847.6,354.1" fill="url(#g5_48)"/>
<polygon points="870.0,312.5 861.2,307.5 838.9,349.1 847.6,354.1" fill="url(#vg5)" stroke="none"/>
<polygon points="861.2,307.5 861.2,303.8 838.9,345.4 838.9,349.1" fill="url(#g5_49)"/>
<polygon points="861.2,307.5 861.2,303.8 838.9,345.4 838.9,349.1" fill="url(#vg5)" stroke="none"/>
<line x1="854.0" y1="317.3" x2="862.7" y2="298.5"/>
<line x1="1029.0" y1="292.3" x2="1032.7" y2="283.5"/>
<line x1="1100.2" y1="326.0" x2="1092.7" y2="329.8"/>
<line x1="1197.7" y1="412.3" x2="1181.5" y2="419.8"/>
<line x1="1195.2" y1="437.3" x2="1186.5" y2="452.3"/>
<line x1="1186.5" y1="452.3" x2="1160.2" y2="452.3"/>
<line x1="1166.5" y1="468.5" x2="1155.2" y2="467.3"/>
<line x1="1152.7" y1="477.3" x2="1134.0" y2="477.3"/>
<line x1="1134.0" y1="477.3" x2="1121.5" y2="472.3"/>
<line x1="1121.5" y1="472.3" x2="1100.2" y2="483.5"/>
<line x1="1100.2" y1="483.5" x2="1044.0" y2="471.0"/>
<line x1="1044.0" y1="471.0" x2="1049.0" y2="451.0"/>
<line x1="1049.0" y1="451.0" x2="1045.2" y2="438.5"/>
<line x1="1045.2" y1="438.5" x2="1035.2" y2="452.3"/>
<line x1="1035.2" y1="452.3" x2="989.0" y2="457.3"/>
<line x1="989.0" y1="457.3" x2="952.7" y2="449.8"/>
<line x1="952.7" y1="449.8" x2="931.5" y2="437.3"/>
<line x1="931.5" y1="437.3" x2="911.5" y2="411.0"/>
<line x1="911.5" y1="411.0" x2="905.2" y2="386.0"/>
<line x1="905.2" y1="386.0" x2="889.0" y2="373.5"/>
<line x1="889.0" y1="373.5" x2="864.0" y2="331.0"/>
<line x1="864.0" y1="331.0" x2="862.7" y2="326.0"/>
<line x1="862.7" y1="326.0" x2="854.0" y2="321.0"/>
<line x1="854.0" y1="321.0" x2="854.0" y2="317.3"/>
</g>
<polygon points="842.1,274.6 858.3,267.5 861.6,279.4 868.8,284.3 864.8,295.6 860.7,302.1 851.0,320.0 839.7,294.0 840.5,284.3" fill="#9c9ca4" stroke="#0c0c0c" stroke-width="0.9" stroke-linejoin="round" />
<polygon points="842.1,274.6 851.0,271.4 858.3,267.5 861.6,279.4 852.0,283.0" fill="#8a8a9c" stroke="#0c0c0c" stroke-width="0.9" stroke-linejoin="round" />
<polygon points="852.0,283.0 861.6,279.4 868.8,284.3 864.8,295.6 855.0,292.0" fill="#b0b0b4" stroke="#0c0c0c" stroke-width="0.9" stroke-linejoin="round" />
<polygon points="840.5,284.3 852.0,283.0 855.0,292.0 851.0,300.0 842.0,296.0" fill="#acacb0" stroke="#0c0c0c" stroke-width="0.9" stroke-linejoin="round" />
<polygon points="855.0,292.0 864.8,295.6 860.7,302.1 856.0,312.0 851.0,300.0" fill="#8c8c90" stroke="#0c0c0c" stroke-width="0.9" stroke-linejoin="round" />
<polygon points="861.2,303.8 870.0,285.0 893.8,277.5 917.5,266.2 926.2,265.0 932.5,257.5 952.5,261.2 973.8,258.8 987.5,253.8 1007.5,256.2 1030.0,265.0 1031.2,275.0 1036.2,278.8 1040.0,270.0 1068.8,277.5 1108.8,298.8 1107.5,312.5 1100.0,316.2 1115.0,326.2 1131.2,326.2 1152.5,336.2 1156.2,347.5 1165.0,353.8 1178.8,362.5 1193.8,378.8 1205.0,398.8 1188.8,406.2 1202.5,423.8 1193.8,438.8 1167.5,438.8 1176.2,448.8 1173.8,455.0 1162.5,453.8 1160.0,463.8 1141.2,463.8 1128.8,458.8 1107.5,470.0 1051.2,457.5 1056.2,437.5 1052.5,425.0 1042.5,438.8 996.2,443.8 960.0,436.2 938.8,423.8 918.8,397.5 912.5,372.5 896.2,360.0 871.2,317.5 870.0,312.5 861.2,307.5" fill="#b9b9c9" stroke="#14202a" stroke-width="1.5" stroke-linejoin="round"/>
<polygon points="861.2,303.8 870.0,285.0 893.8,277.5 917.5,266.2 926.2,265.0 932.5,257.5 952.5,261.2 973.8,258.8 987.5,253.8 1007.5,256.2 1030.0,265.0 1031.2,275.0 1036.2,278.8 1040.0,270.0 1068.8,277.5 1108.8,298.8 1107.5,312.5 1100.0,316.2 1115.0,326.2 1131.2,326.2 1152.5,336.2 1156.2,347.5 1165.0,353.8 1178.8,362.5 1193.8,378.8 1205.0,398.8 1188.8,406.2 1202.5,423.8 1193.8,438.8 1167.5,438.8 1176.2,448.8 1173.8,455.0 1162.5,453.8 1160.0,463.8 1141.2,463.8 1128.8,458.8 1107.5,470.0 1051.2,457.5 1056.2,437.5 1052.5,425.0 1042.5,438.8 996.2,443.8 960.0,436.2 938.8,423.8 918.8,397.5 912.5,372.5 896.2,360.0 871.2,317.5 870.0,312.5 861.2,307.5" fill="none" stroke="#10e6f0" stroke-width="1.15" stroke-linejoin="round"/>
<g fill="none" stroke="#0c0c0c" stroke-width="0.9">
<polyline points="1016.2,290.0 912.5,372.5"/>
<polyline points="1016.2,290.0 1100.0,316.2"/>
<polyline points="1016.2,290.0 871.2,302.5"/>
<polyline points="1016.2,290.0 871.0,315.0"/>
<polyline points="1016.2,290.0 893.8,277.5"/>
<polyline points="1016.2,290.0 932.5,265.0"/>
<polyline points="1016.2,290.0 952.5,261.2"/>
<polyline points="1016.2,290.0 973.8,258.8"/>
<polyline points="1016.2,290.0 1030.0,273.8"/>
<polyline points="912.5,372.5 1053.8,425.0"/>
<polyline points="912.5,372.5 938.8,423.8"/>
<polyline points="1053.8,425.0 1100.0,316.2"/>
<polyline points="1053.8,425.0 1131.2,340.0"/>
<polyline points="1053.8,425.0 1167.5,438.8"/>
<polyline points="1053.8,425.0 1160.0,452.5"/>
<polyline points="1053.8,425.0 1141.2,463.8"/>
<polyline points="1053.8,425.0 996.2,443.8"/>
<polyline points="1131.2,340.0 1188.8,406.2"/>
<polyline points="1131.2,340.0 1115.0,326.2"/>
<polyline points="1131.2,340.0 1152.5,336.2"/>
<polyline points="1188.8,406.2 1167.5,438.8"/>
<polyline points="1188.8,406.2 1193.8,378.8"/>
<polyline points="1037.5,281.0 1100.0,316.2"/>
<polyline points="1156.2,347.5 1188.8,406.2"/>
<polyline points="870.0,285.0 871.2,317.5"/>
</g>
</g>
<g id="isl4">
<clipPath id="c4"><polygon points="251.6,264.8 266.3,262.1 283.8,262.1 314.7,274.2 324.1,268.8 348.3,267.5 359.1,271.5 392.7,278.2 419.5,283.6 426.3,293.0 431.6,299.7 442.4,311.8 442.4,321.0 435.7,330.6 438.4,342.7 433.0,365.6 437.0,369.6 453.1,373.6 462.5,396.5 466.6,404.5 465.2,423.3 461.2,437.0 459.8,448.9 458.5,459.6 431.6,475.8 428.9,497.3 400.7,520.1 376.5,517.4 363.1,506.7 340.3,526.8 278.4,579.2 216.6,602.0 176.3,610.1 162.9,599.3 153.5,579.2 149.4,564.4 121.2,563.0 113.2,575.1 78.2,555.0 67.5,550.9 67.5,532.1 60.8,521.4 66.1,513.3 76.9,512.0 82.3,512.5 103.8,486.5 119.9,470.4 113.2,466.3 110.5,450.2 101.1,442.2 99.7,434.1 105.1,420.7 110.5,408.6 106.4,399.2 117.2,387.1 127.9,380.3 138.7,379.0 150.8,369.6 142.7,361.5 142.7,349.4 156.2,330.6 157.5,321.2 187.1,295.7 208.6,280.9 222.0,276.9"/></clipPath>
<polygon points="251.6,264.8 266.3,262.1 283.8,262.1 314.7,274.2 324.1,268.8 348.3,267.5 359.1,271.5 392.7,278.2 419.5,283.6 426.3,293.0 431.6,299.7 442.4,311.8 442.4,321.0 435.7,330.6 438.4,342.7 433.0,365.6 437.0,369.6 453.1,373.6 462.5,396.5 466.6,404.5 465.2,423.3 461.2,437.0 459.8,448.9 458.5,459.6 431.6,475.8 428.9,497.3 400.7,520.1 376.5,517.4 363.1,506.7 340.3,526.8 278.4,579.2 216.6,602.0 176.3,610.1 162.9,599.3 153.5,579.2 149.4,564.4 121.2,563.0 113.2,575.1 78.2,555.0 67.5,550.9 67.5,532.1 60.8,521.4 66.1,513.3 76.9,512.0 82.3,512.5 103.8,486.5 119.9,470.4 113.2,466.3 110.5,450.2 101.1,442.2 99.7,434.1 105.1,420.7 110.5,408.6 106.4,399.2 117.2,387.1 127.9,380.3 138.7,379.0 150.8,369.6 142.7,361.5 142.7,349.4 156.2,330.6 157.5,321.2 187.1,295.7 208.6,280.9 222.0,276.9" fill="#7a7a84" stroke="#1a1a1a" stroke-width="0.8"/>
<defs><linearGradient id="g4_10" gradientUnits="userSpaceOnUse" x1="431.6" y1="299.7" x2="423.6" y2="309.1"><stop offset="0" stop-color="#a1a1b7"/><stop offset="1" stop-color="#a3a3b9"/></linearGradient><linearGradient id="g4_11" gradientUnits="userSpaceOnUse" x1="423.6" y1="309.1" x2="422.2" y2="327.9"><stop offset="0" stop-color="#a6a6be"/><stop offset="1" stop-color="#a8a8c0"/></linearGradient><linearGradient id="g4_12" gradientUnits="userSpaceOnUse" x1="422.2" y1="327.9" x2="418.2" y2="341.4"><stop offset="0" stop-color="#a7a7bf"/><stop offset="1" stop-color="#a7a7bf"/></linearGradient><linearGradient id="g4_13" gradientUnits="userSpaceOnUse" x1="418.2" y1="341.4" x2="416.8" y2="356.2"><stop offset="0" stop-color="#a8a8c0"/><stop offset="1" stop-color="#a6a6be"/></linearGradient><linearGradient id="g4_17" gradientUnits="userSpaceOnUse" x1="453.1" y1="373.6" x2="462.5" y2="396.5"><stop offset="0" stop-color="#a1a1b7"/><stop offset="1" stop-color="#a6a6bd"/></linearGradient><linearGradient id="g4_18" gradientUnits="userSpaceOnUse" x1="462.5" y1="396.5" x2="466.6" y2="404.5"><stop offset="0" stop-color="#a5a5bc"/><stop offset="1" stop-color="#a6a6bd"/></linearGradient><linearGradient id="g4_19" gradientUnits="userSpaceOnUse" x1="466.6" y1="404.5" x2="465.2" y2="423.3"><stop offset="0" stop-color="#a7a7bf"/><stop offset="1" stop-color="#a5a5bc"/></linearGradient><linearGradient id="g4_20" gradientUnits="userSpaceOnUse" x1="465.2" y1="423.3" x2="447.8" y2="434.1"><stop offset="0" stop-color="#9d9db2"/><stop offset="1" stop-color="#9a9aad"/></linearGradient><linearGradient id="g4_21" gradientUnits="userSpaceOnUse" x1="447.8" y1="434.1" x2="418.2" y2="454.3"><stop offset="0" stop-color="#9a9aae"/><stop offset="1" stop-color="#9e9eb3"/></linearGradient><linearGradient id="g4_22" gradientUnits="userSpaceOnUse" x1="418.2" y1="454.3" x2="415.5" y2="473.1"><stop offset="0" stop-color="#a5a5bc"/><stop offset="1" stop-color="#a6a6bd"/></linearGradient><linearGradient id="g4_23" gradientUnits="userSpaceOnUse" x1="415.5" y1="473.1" x2="388.6" y2="501.3"><stop offset="0" stop-color="#a2a2b8"/><stop offset="1" stop-color="#9a9aae"/></linearGradient><linearGradient id="g4_24" gradientUnits="userSpaceOnUse" x1="388.6" y1="501.3" x2="361.8" y2="500.0"><stop offset="0" stop-color="#878795"/><stop offset="1" stop-color="#7a7a84"/></linearGradient><linearGradient id="g4_25" gradientUnits="userSpaceOnUse" x1="361.8" y1="500.0" x2="329.5" y2="505.3"><stop offset="0" stop-color="#878794"/><stop offset="1" stop-color="#8c8c9b"/></linearGradient><linearGradient id="g4_26" gradientUnits="userSpaceOnUse" x1="329.5" y1="505.3" x2="325.5" y2="506.7"><stop offset="0" stop-color="#9090a1"/><stop offset="1" stop-color="#9494a6"/></linearGradient><linearGradient id="g4_27" gradientUnits="userSpaceOnUse" x1="325.5" y1="506.7" x2="262.3" y2="552.3"><stop offset="0" stop-color="#9999ad"/><stop offset="1" stop-color="#9999ac"/></linearGradient><linearGradient id="g4_28" gradientUnits="userSpaceOnUse" x1="262.3" y1="552.3" x2="197.8" y2="571.1"><stop offset="0" stop-color="#9292a4"/><stop offset="1" stop-color="#8e8e9f"/></linearGradient><linearGradient id="g4_29" gradientUnits="userSpaceOnUse" x1="197.8" y1="571.1" x2="153.5" y2="579.2"><stop offset="0" stop-color="#8c8c9b"/><stop offset="1" stop-color="#787882"/></linearGradient><linearGradient id="g4_31" gradientUnits="userSpaceOnUse" x1="150.8" y1="548.3" x2="132.0" y2="540.2"><stop offset="0" stop-color="#6e6e77"/><stop offset="1" stop-color="#73737c"/></linearGradient><linearGradient id="g4_32" gradientUnits="userSpaceOnUse" x1="132.0" y1="540.2" x2="106.4" y2="540.2"><stop offset="0" stop-color="#787882"/><stop offset="1" stop-color="#75757e"/></linearGradient><linearGradient id="g4_34" gradientUnits="userSpaceOnUse" x1="105.1" y1="526.8" x2="82.3" y2="512.5"><stop offset="0" stop-color="#6c6c74"/><stop offset="1" stop-color="#6d6d75"/></linearGradient><linearGradient id="g4_37" gradientUnits="userSpaceOnUse" x1="119.9" y1="470.4" x2="113.2" y2="466.3"><stop offset="0" stop-color="#6e6e76"/><stop offset="1" stop-color="#6c6c74"/></linearGradient><linearGradient id="g4_40" gradientUnits="userSpaceOnUse" x1="121.2" y1="440.8" x2="113.2" y2="442.2"><stop offset="0" stop-color="#7c7c87"/><stop offset="1" stop-color="#7e7e89"/></linearGradient><linearGradient id="g4_41" gradientUnits="userSpaceOnUse" x1="113.2" y1="442.2" x2="99.7" y2="434.1"><stop offset="0" stop-color="#72727b"/><stop offset="1" stop-color="#6d6d75"/></linearGradient><linearGradient id="g4_49" gradientUnits="userSpaceOnUse" x1="164.2" y1="362.9" x2="150.8" y2="360.2"><stop offset="0" stop-color="#74747d"/><stop offset="1" stop-color="#73737c"/></linearGradient><linearGradient id="g4_50" gradientUnits="userSpaceOnUse" x1="150.8" y1="360.2" x2="142.7" y2="349.4"><stop offset="0" stop-color="#6b6b73"/><stop offset="1" stop-color="#686870"/></linearGradient><linearGradient id="vg4" x1="0" y1="0" x2="0" y2="1"><stop offset="0" stop-color="#000" stop-opacity="0.28"/><stop offset="0.45" stop-color="#808080" stop-opacity="0"/><stop offset="0.75" stop-color="#fff" stop-opacity="0.22"/></linearGradient></defs>
<g clip-path="url(#c4)" stroke="#111" stroke-width="0.9">
<polygon points="431.6,299.7 423.6,309.1 449.2,352.3 457.2,342.9" fill="url(#g4_10)"/>
<polygon points="431.6,299.7 423.6,309.1 449.2,352.3 457.2,342.9" fill="url(#vg4)" stroke="none"/>
<polygon points="423.6,309.1 422.2,327.9 447.8,371.1 449.2,352.3" fill="url(#g4_11)"/>
<polygon points="423.6,309.1 422.2,327.9 447.8,371.1 449.2,352.3" fill="url(#vg4)" stroke="none"/>
<polygon points="422.2,327.9 418.2,341.4 443.8,384.6 447.8,371.1" fill="url(#g4_12)"/>
<polygon points="422.2,327.9 418.2,341.4 443.8,384.6 447.8,371.1" fill="url(#vg4)" stroke="none"/>
<polygon points="418.2,341.4 416.8,356.2 442.4,399.4 443.8,384.6" fill="url(#g4_13)"/>
<polygon points="418.2,341.4 416.8,356.2 442.4,399.4 443.8,384.6" fill="url(#vg4)" stroke="none"/>
<polygon points="453.1,373.6 462.5,396.5 488.1,439.7 478.7,416.8" fill="url(#g4_17)"/>
<polygon points="453.1,373.6 462.5,396.5 488.1,439.7 478.7,416.8" fill="url(#vg4)" stroke="none"/>
<polygon points="462.5,396.5 466.6,404.5 492.2,447.7 488.1,439.7" fill="url(#g4_18)"/>
<polygon points="462.5,396.5 466.6,404.5 492.2,447.7 488.1,439.7" fill="url(#vg4)" stroke="none"/>
<polygon points="466.6,404.5 465.2,423.3 490.8,466.5 492.2,447.7" fill="url(#g4_19)"/>
<polygon points="466.6,404.5 465.2,423.3 490.8,466.5 492.2,447.7" fill="url(#vg4)" stroke="none"/>
<polygon points="465.2,423.3 447.8,434.1 473.4,477.3 490.8,466.5" fill="url(#g4_20)"/>
<polygon points="465.2,423.3 447.8,434.1 473.4,477.3 490.8,466.5" fill="url(#vg4)" stroke="none"/>
<polygon points="447.8,434.1 418.2,454.3 443.8,497.5 473.4,477.3" fill="url(#g4_21)"/>
<polygon points="447.8,434.1 418.2,454.3 443.8,497.5 473.4,477.3" fill="url(#vg4)" stroke="none"/>
<polygon points="418.2,454.3 415.5,473.1 441.1,516.3 443.8,497.5" fill="url(#g4_22)"/>
<polygon points="418.2,454.3 415.5,473.1 441.1,516.3 443.8,497.5" fill="url(#vg4)" stroke="none"/>
<polygon points="415.5,473.1 388.6,501.3 414.2,544.5 441.1,516.3" fill="url(#g4_23)"/>
<polygon points="415.5,473.1 388.6,501.3 414.2,544.5 441.1,516.3" fill="url(#vg4)" stroke="none"/>
<polygon points="388.6,501.3 361.8,500.0 387.4,543.2 414.2,544.5" fill="url(#g4_24)"/>
<polygon points="388.6,501.3 361.8,500.0 387.4,543.2 414.2,544.5" fill="url(#vg4)" stroke="none"/>
<polygon points="361.8,500.0 329.5,505.3 355.1,548.5 387.4,543.2" fill="url(#g4_25)"/>
<polygon points="361.8,500.0 329.5,505.3 355.1,548.5 387.4,543.2" fill="url(#vg4)" stroke="none"/>
<polygon points="329.5,505.3 325.5,506.7 351.1,549.9 355.1,548.5" fill="url(#g4_26)"/>
<polygon points="329.5,505.3 325.5,506.7 351.1,549.9 355.1,548.5" fill="url(#vg4)" stroke="none"/>
<polygon points="325.5,506.7 262.3,552.3 287.9,595.5 351.1,549.9" fill="url(#g4_27)"/>
<polygon points="325.5,506.7 262.3,552.3 287.9,595.5 351.1,549.9" fill="url(#vg4)" stroke="none"/>
<polygon points="262.3,552.3 197.8,571.1 223.4,614.3 287.9,595.5" fill="url(#g4_28)"/>
<polygon points="262.3,552.3 197.8,571.1 223.4,614.3 287.9,595.5" fill="url(#vg4)" stroke="none"/>
<polygon points="197.8,571.1 153.5,579.2 179.1,622.4 223.4,614.3" fill="url(#g4_29)"/>
<polygon points="197.8,571.1 153.5,579.2 179.1,622.4 223.4,614.3" fill="url(#vg4)" stroke="none"/>
<polygon points="150.8,548.3 132.0,540.2 157.6,583.4 176.4,591.5" fill="url(#g4_31)"/>
<polygon points="150.8,548.3 132.0,540.2 157.6,583.4 176.4,591.5" fill="url(#vg4)" stroke="none"/>
<polygon points="132.0,540.2 106.4,540.2 132.0,583.4 157.6,583.4" fill="url(#g4_32)"/>
<polygon points="132.0,540.2 106.4,540.2 132.0,583.4 157.6,583.4" fill="url(#vg4)" stroke="none"/>
<polygon points="105.1,526.8 82.3,512.5 107.9,555.7 130.7,570.0" fill="url(#g4_34)"/>
<polygon points="105.1,526.8 82.3,512.5 107.9,555.7 130.7,570.0" fill="url(#vg4)" stroke="none"/>
<polygon points="119.9,470.4 113.2,466.3 138.8,509.5 145.5,513.6" fill="url(#g4_37)"/>
<polygon points="119.9,470.4 113.2,466.3 138.8,509.5 145.5,513.6" fill="url(#vg4)" stroke="none"/>
<polygon points="121.2,440.8 113.2,442.2 138.8,485.4 146.8,484.0" fill="url(#g4_40)"/>
<polygon points="121.2,440.8 113.2,442.2 138.8,485.4 146.8,484.0" fill="url(#vg4)" stroke="none"/>
<polygon points="113.2,442.2 99.7,434.1 125.3,477.3 138.8,485.4" fill="url(#g4_41)"/>
<polygon points="113.2,442.2 99.7,434.1 125.3,477.3 138.8,485.4" fill="url(#vg4)" stroke="none"/>
<polygon points="164.2,362.9 150.8,360.2 176.4,403.4 189.8,406.1" fill="url(#g4_49)"/>
<polygon points="164.2,362.9 150.8,360.2 176.4,403.4 189.8,406.1" fill="url(#vg4)" stroke="none"/>
<polygon points="150.8,360.2 142.7,349.4 168.3,392.6 176.4,403.4" fill="url(#g4_50)"/>
<polygon points="150.8,360.2 142.7,349.4 168.3,392.6 176.4,403.4" fill="url(#vg4)" stroke="none"/>
<line x1="439.9" y1="313.7" x2="431.9" y2="323.1"/>
<line x1="431.9" y1="323.1" x2="430.5" y2="341.9"/>
<line x1="430.5" y1="341.9" x2="426.5" y2="355.4"/>
<line x1="426.5" y1="355.4" x2="425.1" y2="370.2"/>
<line x1="461.4" y1="387.6" x2="470.8" y2="410.5"/>
<line x1="470.8" y1="410.5" x2="474.9" y2="418.5"/>
<line x1="474.9" y1="418.5" x2="473.5" y2="437.3"/>
<line x1="473.5" y1="437.3" x2="456.1" y2="448.1"/>
<line x1="456.1" y1="448.1" x2="426.5" y2="468.3"/>
<line x1="426.5" y1="468.3" x2="423.8" y2="487.1"/>
<line x1="423.8" y1="487.1" x2="396.9" y2="515.3"/>
<line x1="396.9" y1="515.3" x2="370.1" y2="514.0"/>
<line x1="370.1" y1="514.0" x2="337.8" y2="519.3"/>
<line x1="337.8" y1="519.3" x2="333.8" y2="520.7"/>
<line x1="333.8" y1="520.7" x2="270.6" y2="566.3"/>
<line x1="270.6" y1="566.3" x2="206.1" y2="585.1"/>
<line x1="206.1" y1="585.1" x2="161.8" y2="593.2"/>
<line x1="159.1" y1="562.3" x2="140.3" y2="554.2"/>
<line x1="140.3" y1="554.2" x2="114.7" y2="554.2"/>
<line x1="113.4" y1="540.8" x2="90.6" y2="526.5"/>
<line x1="128.2" y1="484.4" x2="121.5" y2="480.3"/>
<line x1="129.5" y1="454.8" x2="121.5" y2="456.2"/>
<line x1="121.5" y1="456.2" x2="108.0" y2="448.1"/>
<line x1="172.5" y1="376.9" x2="159.1" y2="374.2"/>
<line x1="159.1" y1="374.2" x2="151.0" y2="363.4"/>
</g>
<defs><linearGradient id="kg1" x1="0" y1="0" x2="1" y2="0.3"><stop offset="0" stop-color="#babac8"/><stop offset="1" stop-color="#8a8a9a"/></linearGradient><linearGradient id="kg2" x1="0" y1="0" x2="0" y2="1"><stop offset="0" stop-color="#94949c"/><stop offset="1" stop-color="#5c5c62"/></linearGradient><linearGradient id="kg3" x1="0" y1="0" x2="1" y2="0"><stop offset="0" stop-color="#7c7c98"/><stop offset="1" stop-color="#a2a2c0"/></linearGradient></defs>
<polygon points="67.3,550.7 79.1,555.0 98.3,564.3 111.9,575.4 109.0,575.0 70.0,553.0" fill="#4c4c50" stroke="#0c0c0c" stroke-width="0.9" stroke-linejoin="round" />
<polygon points="106.3,540.8 131.7,540.2 130.5,549.4 122.4,551.9 114.4,553.8" fill="#8a8a90" stroke="#0c0c0c" stroke-width="0.9" stroke-linejoin="round" />
<polygon points="131.7,540.2 150.9,548.2 149.1,559.3 130.5,549.4" fill="#9a9aa2" stroke="#0c0c0c" stroke-width="0.9" stroke-linejoin="round" />
<polygon points="114.4,553.8 122.4,551.9 130.5,549.4 149.1,559.3 150.3,564.3 123.1,564.3" fill="#7a7a84" stroke="#0c0c0c" stroke-width="0.9" stroke-linejoin="round" />
<polygon points="60.5,520.3 64.2,514.1 72.3,511.7 80.3,512.3 89.0,515.4 89.6,527.8 81.6,530.2 73.5,530.2 66.1,528.4" fill="url(#kg1)" stroke="#0c0c0c" stroke-width="0.9" stroke-linejoin="round" />
<polygon points="66.7,531.5 75.4,532.1 79.1,555.0 67.3,550.7" fill="url(#kg2)" stroke="#0c0c0c" stroke-width="0.9" stroke-linejoin="round" />
<polygon points="76.6,530.9 89.6,529.6 105.7,539.5 80.3,554.4" fill="url(#kg3)" stroke="#0c0c0c" stroke-width="0.9" stroke-linejoin="round" />
<polygon points="89.6,516.6 104.5,525.9 105.7,539.5 89.6,529.6" fill="#9a9ab6" stroke="#0c0c0c" stroke-width="0.9" stroke-linejoin="round" />
<polygon points="80.3,554.4 105.7,541.4 114.4,553.8 98.3,564.3" fill="#a2a2c0" stroke="#0c0c0c" stroke-width="0.9" stroke-linejoin="round" />
<polygon points="98.3,564.3 114.4,553.8 122.4,563.7 111.9,575.4" fill="#a8a8c8" stroke="#0c0c0c" stroke-width="0.9" stroke-linejoin="round" />
<path d="M60.5,520.3 L66.1,528.4 M64.2,514.1 L73.5,530.2 M66.1,528.4 L66.7,531.5" stroke="#0c0c0c" stroke-width="0.9" fill="none"/>
<polygon points="251.6,264.8 266.3,262.1 283.8,262.1 314.7,274.2 324.1,268.8 348.3,267.5 359.1,271.5 392.7,278.2 419.5,283.6 426.3,293.0 431.6,299.7 423.6,309.1 422.2,327.9 418.2,341.4 416.8,356.2 428.9,369.6 437.0,369.6 453.1,373.6 462.5,396.5 466.6,404.5 465.2,423.3 447.8,434.1 418.2,454.3 415.5,473.1 388.6,501.3 361.8,500.0 329.5,505.3 325.5,506.7 262.3,552.3 197.8,571.1 153.5,579.2 150.8,548.3 132.0,540.2 106.4,540.2 105.1,526.8 82.3,512.5 103.8,486.5 119.9,470.4 113.2,466.3 113.2,446.2 121.2,440.8 113.2,442.2 99.7,434.1 105.1,420.7 110.5,408.6 106.4,399.2 117.2,387.1 127.9,380.3 138.7,379.0 164.2,362.9 150.8,360.2 142.7,349.4 156.2,330.6 157.5,321.2 187.1,295.7 208.6,280.9 222.0,276.9" fill="#b9b9c9" stroke="#14202a" stroke-width="1.5" stroke-linejoin="round"/>
<polygon points="251.6,264.8 266.3,262.1 283.8,262.1 314.7,274.2 324.1,268.8 348.3,267.5 359.1,271.5 392.7,278.2 419.5,283.6 426.3,293.0 431.6,299.7 423.6,309.1 422.2,327.9 418.2,341.4 416.8,356.2 428.9,369.6 437.0,369.6 453.1,373.6 462.5,396.5 466.6,404.5 465.2,423.3 447.8,434.1 418.2,454.3 415.5,473.1 388.6,501.3 361.8,500.0 329.5,505.3 325.5,506.7 262.3,552.3 197.8,571.1 153.5,579.2 150.8,548.3 132.0,540.2 106.4,540.2 105.1,526.8 82.3,512.5 103.8,486.5 119.9,470.4 113.2,466.3 113.2,446.2 121.2,440.8 113.2,442.2 99.7,434.1 105.1,420.7 110.5,408.6 106.4,399.2 117.2,387.1 127.9,380.3 138.7,379.0 164.2,362.9 150.8,360.2 142.7,349.4 156.2,330.6 157.5,321.2 187.1,295.7 208.6,280.9 222.0,276.9" fill="none" stroke="#10e6f0" stroke-width="1.15" stroke-linejoin="round"/>
<g fill="none" stroke="#0c0c0c" stroke-width="0.9">
<polyline points="165.6,362.9 416.8,356.2"/>
<polyline points="165.6,362.9 314.7,274.2"/>
<polyline points="165.6,362.9 219.3,279.6"/>
<polyline points="165.6,362.9 184.4,297.0"/>
<polyline points="165.6,362.9 156.2,327.9"/>
<polyline points="165.6,362.9 121.2,440.8"/>
<polyline points="314.7,274.2 419.5,334.7"/>
<polyline points="314.7,274.2 283.8,262.1"/>
<polyline points="314.7,274.2 222.0,276.9"/>
<polyline points="419.5,334.7 359.1,271.5"/>
<polyline points="419.5,334.7 392.7,278.2"/>
<polyline points="419.5,334.7 422.2,287.6"/>
<polyline points="121.2,440.8 326.8,505.3"/>
<polyline points="121.2,440.8 138.7,379.0"/>
<polyline points="121.2,440.8 119.9,470.4"/>
<polyline points="119.9,470.4 326.8,505.3"/>
<polyline points="119.9,470.4 132.0,540.2"/>
<polyline points="119.9,470.4 150.8,548.3"/>
<polyline points="119.9,470.4 82.3,512.5"/>
<polyline points="119.9,470.4 88.0,516.0"/>
<polyline points="326.8,505.3 416.8,356.2"/>
<polyline points="326.8,505.3 428.9,369.6"/>
<polyline points="326.8,505.3 418.2,454.3"/>
<polyline points="428.9,369.6 418.2,454.3"/>
<polyline points="428.9,369.6 447.8,434.1"/>
<polyline points="428.9,369.6 462.5,396.5"/>
<polyline points="361.8,500.0 418.2,454.3"/>
<polyline points="150.8,548.3 262.3,552.3"/>
<polyline points="150.8,548.3 197.8,571.1"/>
<polyline points="105.1,526.8 132.0,540.2"/>
</g>
</g>
<g id="isl3">
<clipPath id="c3"><polygon points="478.8,288.8 485.0,280.0 493.8,273.8 521.2,261.2 555.0,252.5 585.0,247.5 608.8,246.2 627.5,253.8 638.8,248.8 653.8,248.8 665.0,253.8 692.5,263.8 712.5,262.5 728.8,273.8 746.2,277.5 758.8,293.8 801.2,306.2 835.0,322.5 843.8,342.5 845.0,367.5 842.5,395.0 843.8,423.8 842.5,447.5 835.0,466.2 823.8,477.5 800.0,493.8 771.2,490.0 755.0,505.0 726.2,502.5 685.0,487.5 631.2,486.2 620.0,498.8 600.0,493.8 596.2,487.0 580.0,488.8 562.5,482.5 548.8,475.0 541.2,449.0 517.5,445.0 502.5,420.0 501.2,388.8 503.8,382.5 502.5,371.2 495.0,366.2 491.2,333.8 482.5,330.0 477.5,315.0"/></clipPath>
<polygon points="478.8,288.8 485.0,280.0 493.8,273.8 521.2,261.2 555.0,252.5 585.0,247.5 608.8,246.2 627.5,253.8 638.8,248.8 653.8,248.8 665.0,253.8 692.5,263.8 712.5,262.5 728.8,273.8 746.2,277.5 758.8,293.8 801.2,306.2 835.0,322.5 843.8,342.5 845.0,367.5 842.5,395.0 843.8,423.8 842.5,447.5 835.0,466.2 823.8,477.5 800.0,493.8 771.2,490.0 755.0,505.0 726.2,502.5 685.0,487.5 631.2,486.2 620.0,498.8 600.0,493.8 596.2,487.0 580.0,488.8 562.5,482.5 548.8,475.0 541.2,449.0 517.5,445.0 502.5,420.0 501.2,388.8 503.8,382.5 502.5,371.2 495.0,366.2 491.2,333.8 482.5,330.0 477.5,315.0" fill="#7a7a84" stroke="#1a1a1a" stroke-width="0.8"/>
<defs><linearGradient id="g3_18" gradientUnits="userSpaceOnUse" x1="843.8" y1="342.5" x2="845.0" y2="367.5"><stop offset="0" stop-color="#a7a7bf"/><stop offset="1" stop-color="#a8a8c0"/></linearGradient><linearGradient id="g3_19" gradientUnits="userSpaceOnUse" x1="845.0" y1="367.5" x2="842.5" y2="395.0"><stop offset="0" stop-color="#a8a8c0"/><stop offset="1" stop-color="#a8a8c0"/></linearGradient><linearGradient id="g3_20" gradientUnits="userSpaceOnUse" x1="842.5" y1="395.0" x2="843.8" y2="423.8"><stop offset="0" stop-color="#a8a8c0"/><stop offset="1" stop-color="#a6a6bd"/></linearGradient><linearGradient id="g3_21" gradientUnits="userSpaceOnUse" x1="843.8" y1="423.8" x2="828.8" y2="436.2"><stop offset="0" stop-color="#a0a0b5"/><stop offset="1" stop-color="#9c9cb1"/></linearGradient><linearGradient id="g3_22" gradientUnits="userSpaceOnUse" x1="828.8" y1="436.2" x2="806.2" y2="450.0"><stop offset="0" stop-color="#9a9aae"/><stop offset="1" stop-color="#9494a5"/></linearGradient><linearGradient id="g3_23" gradientUnits="userSpaceOnUse" x1="806.2" y1="450.0" x2="773.8" y2="446.2"><stop offset="0" stop-color="#7f7f8b"/><stop offset="1" stop-color="#83838f"/></linearGradient><linearGradient id="g3_24" gradientUnits="userSpaceOnUse" x1="773.8" y1="446.2" x2="760.0" y2="458.8"><stop offset="0" stop-color="#9898ab"/><stop offset="1" stop-color="#9b9baf"/></linearGradient><linearGradient id="g3_25" gradientUnits="userSpaceOnUse" x1="760.0" y1="458.8" x2="733.8" y2="463.8"><stop offset="0" stop-color="#9090a1"/><stop offset="1" stop-color="#848491"/></linearGradient><linearGradient id="g3_26" gradientUnits="userSpaceOnUse" x1="733.8" y1="463.8" x2="685.0" y2="448.8"><stop offset="0" stop-color="#76767f"/><stop offset="1" stop-color="#75757f"/></linearGradient><linearGradient id="g3_27" gradientUnits="userSpaceOnUse" x1="685.0" y1="448.8" x2="631.2" y2="451.2"><stop offset="0" stop-color="#797983"/><stop offset="1" stop-color="#878795"/></linearGradient><linearGradient id="g3_28" gradientUnits="userSpaceOnUse" x1="631.2" y1="451.2" x2="620.0" y2="456.2"><stop offset="0" stop-color="#9191a3"/><stop offset="1" stop-color="#8e8e9f"/></linearGradient><linearGradient id="g3_29" gradientUnits="userSpaceOnUse" x1="620.0" y1="456.2" x2="596.2" y2="450.0"><stop offset="0" stop-color="#787881"/><stop offset="1" stop-color="#71717a"/></linearGradient><linearGradient id="g3_30" gradientUnits="userSpaceOnUse" x1="596.2" y1="450.0" x2="593.8" y2="441.2"><stop offset="0" stop-color="#686870"/><stop offset="1" stop-color="#6b6b73"/></linearGradient><linearGradient id="g3_31" gradientUnits="userSpaceOnUse" x1="593.8" y1="441.2" x2="580.0" y2="445.0"><stop offset="0" stop-color="#7a7a84"/><stop offset="1" stop-color="#8a8a98"/></linearGradient><linearGradient id="g3_32" gradientUnits="userSpaceOnUse" x1="580.0" y1="445.0" x2="565.0" y2="442.5"><stop offset="0" stop-color="#787882"/><stop offset="1" stop-color="#75757e"/></linearGradient><linearGradient id="g3_33" gradientUnits="userSpaceOnUse" x1="565.0" y1="442.5" x2="543.8" y2="431.2"><stop offset="0" stop-color="#71717a"/><stop offset="1" stop-color="#6e6e76"/></linearGradient><linearGradient id="g3_35" gradientUnits="userSpaceOnUse" x1="550.0" y1="417.5" x2="547.5" y2="411.2"><stop offset="0" stop-color="#66666d"/><stop offset="1" stop-color="#686870"/></linearGradient><linearGradient id="g3_36" gradientUnits="userSpaceOnUse" x1="547.5" y1="411.2" x2="528.8" y2="403.8"><stop offset="0" stop-color="#6f6f78"/><stop offset="1" stop-color="#707079"/></linearGradient><linearGradient id="g3_37" gradientUnits="userSpaceOnUse" x1="528.8" y1="403.8" x2="506.2" y2="382.5"><stop offset="0" stop-color="#6c6c75"/><stop offset="1" stop-color="#696971"/></linearGradient><linearGradient id="g3_39" gradientUnits="userSpaceOnUse" x1="506.9" y1="331.2" x2="491.9" y2="322.5"><stop offset="0" stop-color="#6c6c75"/><stop offset="1" stop-color="#6c6c75"/></linearGradient><linearGradient id="g3_41" gradientUnits="userSpaceOnUse" x1="493.0" y1="295.0" x2="485.0" y2="293.8"><stop offset="0" stop-color="#72727b"/><stop offset="1" stop-color="#74747d"/></linearGradient><linearGradient id="g3_42" gradientUnits="userSpaceOnUse" x1="485.0" y1="293.8" x2="478.8" y2="288.8"><stop offset="0" stop-color="#6f6f77"/><stop offset="1" stop-color="#6b6b73"/></linearGradient></defs>
<g clip-path="url(#c3)" stroke="#111" stroke-width="0.9">
<polygon points="843.8,342.5 845.0,367.5 849.8,434.7 848.5,409.7" fill="url(#g3_18)"/>
<polygon points="845.0,367.5 842.5,395.0 847.3,462.2 849.8,434.7" fill="url(#g3_19)"/>
<polygon points="842.5,395.0 843.8,423.8 848.5,490.9 847.3,462.2" fill="url(#g3_20)"/>
<polygon points="843.8,423.8 828.8,436.2 833.5,503.4 848.5,490.9" fill="url(#g3_21)"/>
<polygon points="828.8,436.2 806.2,450.0 811.0,517.2 833.5,503.4" fill="url(#g3_22)"/>
<polygon points="806.2,450.0 773.8,446.2 778.5,513.5 811.0,517.2" fill="url(#g3_23)"/>
<polygon points="773.8,446.2 760.0,458.8 764.8,526.0 778.5,513.5" fill="url(#g3_24)"/>
<polygon points="760.0,458.8 733.8,463.8 738.5,531.0 764.8,526.0" fill="url(#g3_25)"/>
<polygon points="733.8,463.8 685.0,448.8 689.8,516.0 738.5,531.0" fill="url(#g3_26)"/>
<polygon points="685.0,448.8 631.2,451.2 636.0,518.5 689.8,516.0" fill="url(#g3_27)"/>
<polygon points="631.2,451.2 620.0,456.2 624.8,523.5 636.0,518.5" fill="url(#g3_28)"/>
<polygon points="620.0,456.2 596.2,450.0 601.0,517.2 624.8,523.5" fill="url(#g3_29)"/>
<polygon points="596.2,450.0 593.8,441.2 598.5,508.4 601.0,517.2" fill="url(#g3_30)"/>
<polygon points="593.8,441.2 580.0,445.0 584.8,512.2 598.5,508.4" fill="url(#g3_31)"/>
<polygon points="580.0,445.0 565.0,442.5 569.8,509.7 584.8,512.2" fill="url(#g3_32)"/>
<polygon points="565.0,442.5 543.8,431.2 548.5,498.4 569.8,509.7" fill="url(#g3_33)"/>
<polygon points="550.0,417.5 547.5,411.2 552.3,478.4 554.8,484.7" fill="url(#g3_35)"/>
<polygon points="547.5,411.2 528.8,403.8 533.5,470.9 552.3,478.4" fill="url(#g3_36)"/>
<polygon points="528.8,403.8 506.2,382.5 511.1,449.7 533.5,470.9" fill="url(#g3_37)"/>
<polygon points="506.9,331.2 491.9,322.5 496.7,389.7 511.7,398.4" fill="url(#g3_39)"/>
<polygon points="493.0,295.0 485.0,293.8 489.8,360.9 497.8,362.2" fill="url(#g3_41)"/>
<polygon points="485.0,293.8 478.8,288.8 483.6,355.9 489.8,360.9" fill="url(#g3_42)"/>
<line x1="845.3" y1="364.3" x2="846.6" y2="389.3"/>
<line x1="846.6" y1="389.3" x2="844.1" y2="416.8"/>
<line x1="844.1" y1="416.8" x2="845.3" y2="445.6"/>
<line x1="845.3" y1="445.6" x2="830.3" y2="458.1"/>
<line x1="830.3" y1="458.1" x2="807.8" y2="471.8"/>
<line x1="807.8" y1="471.8" x2="775.3" y2="468.1"/>
<line x1="775.3" y1="468.1" x2="761.6" y2="480.6"/>
<line x1="761.6" y1="480.6" x2="735.3" y2="485.6"/>
<line x1="735.3" y1="485.6" x2="686.6" y2="470.6"/>
<line x1="686.6" y1="470.6" x2="632.8" y2="473.1"/>
<line x1="632.8" y1="473.1" x2="621.6" y2="478.1"/>
<line x1="621.6" y1="478.1" x2="597.8" y2="471.8"/>
<line x1="597.8" y1="471.8" x2="595.3" y2="463.1"/>
<line x1="595.3" y1="463.1" x2="581.6" y2="466.8"/>
<line x1="581.6" y1="466.8" x2="566.6" y2="464.3"/>
<line x1="566.6" y1="464.3" x2="545.3" y2="453.1"/>
<line x1="551.6" y1="439.3" x2="549.1" y2="433.1"/>
<line x1="549.1" y1="433.1" x2="530.3" y2="425.6"/>
<line x1="530.3" y1="425.6" x2="507.8" y2="404.3"/>
<line x1="508.5" y1="353.1" x2="493.5" y2="344.3"/>
<line x1="494.6" y1="316.8" x2="486.6" y2="315.6"/>
<line x1="486.6" y1="315.6" x2="480.3" y2="310.6"/>
</g>
<polygon points="478.8,288.8 485.0,280.0 493.8,273.8 521.2,261.2 555.0,252.5 585.0,247.5 608.8,246.2 627.5,253.8 638.8,248.8 653.8,248.8 665.0,253.8 692.5,263.8 712.5,262.5 728.8,273.8 746.2,277.5 758.8,293.8 801.2,306.2 835.0,322.5 843.8,342.5 845.0,367.5 842.5,395.0 843.8,423.8 828.8,436.2 806.2,450.0 773.8,446.2 760.0,458.8 733.8,463.8 685.0,448.8 631.2,451.2 620.0,456.2 596.2,450.0 593.8,441.2 580.0,445.0 565.0,442.5 543.8,431.2 550.0,417.5 547.5,411.2 528.8,403.8 506.2,382.5 506.9,331.2 491.9,322.5 493.0,295.0 485.0,293.8" fill="#b9b9c9" stroke="#14202a" stroke-width="1.5" stroke-linejoin="round"/>
<polygon points="478.8,288.8 485.0,280.0 493.8,273.8 521.2,261.2 555.0,252.5 585.0,247.5 608.8,246.2 627.5,253.8 638.8,248.8 653.8,248.8 665.0,253.8 692.5,263.8 712.5,262.5 728.8,273.8 746.2,277.5 758.8,293.8 801.2,306.2 835.0,322.5 843.8,342.5 845.0,367.5 842.5,395.0 843.8,423.8 828.8,436.2 806.2,450.0 773.8,446.2 760.0,458.8 733.8,463.8 685.0,448.8 631.2,451.2 620.0,456.2 596.2,450.0 593.8,441.2 580.0,445.0 565.0,442.5 543.8,431.2 550.0,417.5 547.5,411.2 528.8,403.8 506.2,382.5 506.9,331.2 491.9,322.5 493.0,295.0 485.0,293.8" fill="none" stroke="#10e6f0" stroke-width="1.15" stroke-linejoin="round"/>
<g fill="none" stroke="#0c0c0c" stroke-width="0.9">
<polyline points="758.8,293.8 550.0,410.0"/>
<polyline points="758.8,293.8 685.0,448.8"/>
<polyline points="758.8,293.8 773.8,446.2"/>
<polyline points="758.8,293.8 692.5,263.8"/>
<polyline points="692.5,263.8 506.2,355.0"/>
<polyline points="692.5,263.8 550.0,410.0"/>
<polyline points="506.9,331.2 627.5,253.8"/>
<polyline points="506.9,331.2 608.8,246.2"/>
<polyline points="506.9,331.2 493.0,295.0"/>
<polyline points="493.0,295.0 555.0,252.5"/>
<polyline points="493.0,295.0 585.0,247.5"/>
<polyline points="506.2,355.0 528.8,403.8"/>
<polyline points="773.8,446.2 828.8,436.2"/>
<polyline points="773.8,446.2 843.8,367.5"/>
<polyline points="773.8,446.2 842.5,395.0"/>
<polyline points="773.8,446.2 733.8,463.8"/>
<polyline points="801.2,306.2 843.8,367.5"/>
<polyline points="801.2,306.2 843.8,342.5"/>
<polyline points="842.5,395.0 828.8,436.2"/>
<polyline points="550.0,417.5 596.0,441.5"/>
<polyline points="547.5,411.2 593.8,441.2"/>
<polyline points="596.0,442.5 685.0,448.8"/>
</g>
</g>
<g id="isl6">
<clipPath id="c6"><polygon points="703.8,527.5 740.0,528.8 756.2,518.8 787.5,520.0 822.5,507.5 862.5,517.5 892.5,541.2 942.5,548.0 957.5,551.2 972.5,566.2 983.8,585.0 987.5,591.2 1005.0,597.5 1015.0,616.2 1025.0,628.8 1026.2,641.2 1015.0,662.5 1017.5,681.2 1008.8,702.5 1007.5,707.5 1006.2,727.5 998.8,736.2 1005.0,755.0 1005.0,780.0 976.2,800.0 955.0,812.5 960.0,830.0 945.0,852.5 910.0,861.2 907.5,902.5 897.5,930.0 895.0,950.0 872.5,956.2 857.5,947.5 852.5,938.8 832.5,947.5 825.0,955.0 813.8,946.2 810.0,933.8 756.2,910.0 746.2,923.8 732.5,938.8 685.0,900.0 677.5,870.0 671.2,846.2 673.8,831.2 655.0,840.0 623.8,828.8 621.2,813.8 585.0,815.0 515.0,818.8 497.5,801.2 440.0,787.5 446.2,763.8 440.0,766.2 416.2,761.2 411.2,735.0 413.8,717.5 420.0,700.0 430.0,667.5 442.5,664.0 433.8,657.5 435.0,646.2 445.0,626.2 455.0,616.2 473.8,582.5 502.5,570.0 523.8,541.2 542.5,522.5 573.8,512.5 605.0,502.0 638.8,497.5 675.0,501.2"/></clipPath>
<polygon points="703.8,527.5 740.0,528.8 756.2,518.8 787.5,520.0 822.5,507.5 862.5,517.5 892.5,541.2 942.5,548.0 957.5,551.2 972.5,566.2 983.8,585.0 987.5,591.2 1005.0,597.5 1015.0,616.2 1025.0,628.8 1026.2,641.2 1015.0,662.5 1017.5,681.2 1008.8,702.5 1007.5,707.5 1006.2,727.5 998.8,736.2 1005.0,755.0 1005.0,780.0 976.2,800.0 955.0,812.5 960.0,830.0 945.0,852.5 910.0,861.2 907.5,902.5 897.5,930.0 895.0,950.0 872.5,956.2 857.5,947.5 852.5,938.8 832.5,947.5 825.0,955.0 813.8,946.2 810.0,933.8 756.2,910.0 746.2,923.8 732.5,938.8 685.0,900.0 677.5,870.0 671.2,846.2 673.8,831.2 655.0,840.0 623.8,828.8 621.2,813.8 585.0,815.0 515.0,818.8 497.5,801.2 440.0,787.5 446.2,763.8 440.0,766.2 416.2,761.2 411.2,735.0 413.8,717.5 420.0,700.0 430.0,667.5 442.5,664.0 433.8,657.5 435.0,646.2 445.0,626.2 455.0,616.2 473.8,582.5 502.5,570.0 523.8,541.2 542.5,522.5 573.8,512.5 605.0,502.0 638.8,497.5 675.0,501.2" fill="#7a7a84" stroke="#1a1a1a" stroke-width="0.8"/>
<defs><linearGradient id="g6_10" gradientUnits="userSpaceOnUse" x1="983.8" y1="585.0" x2="976.2" y2="593.8"><stop offset="0" stop-color="#b5b5ce"/><stop offset="1" stop-color="#acacc2"/></linearGradient><linearGradient id="g6_16" gradientUnits="userSpaceOnUse" x1="1026.2" y1="641.2" x2="1007.5" y2="658.8"><stop offset="0" stop-color="#b4b4cd"/><stop offset="1" stop-color="#b0b0c7"/></linearGradient><linearGradient id="g6_19" gradientUnits="userSpaceOnUse" x1="1017.5" y1="681.2" x2="1008.8" y2="702.5"><stop offset="0" stop-color="#babad4"/><stop offset="1" stop-color="#b2b2ca"/></linearGradient><linearGradient id="g6_20" gradientUnits="userSpaceOnUse" x1="1008.8" y1="702.5" x2="996.2" y2="701.2"><stop offset="0" stop-color="#9898a8"/><stop offset="1" stop-color="#85858f"/></linearGradient><linearGradient id="g6_21" gradientUnits="userSpaceOnUse" x1="996.2" y1="701.2" x2="983.8" y2="696.2"><stop offset="0" stop-color="#81818b"/><stop offset="1" stop-color="#878792"/></linearGradient><linearGradient id="g6_25" gradientUnits="userSpaceOnUse" x1="997.5" y1="763.8" x2="976.2" y2="800.0"><stop offset="0" stop-color="#b9b9d3"/><stop offset="1" stop-color="#b3b3cb"/></linearGradient><linearGradient id="g6_26" gradientUnits="userSpaceOnUse" x1="976.2" y1="800.0" x2="950.0" y2="806.2"><stop offset="0" stop-color="#a5a5b9"/><stop offset="1" stop-color="#a6a6bb"/></linearGradient><linearGradient id="g6_28" gradientUnits="userSpaceOnUse" x1="952.5" y1="817.5" x2="937.5" y2="841.2"><stop offset="0" stop-color="#b8b8d2"/><stop offset="1" stop-color="#b4b4cc"/></linearGradient><linearGradient id="g6_29" gradientUnits="userSpaceOnUse" x1="937.5" y1="841.2" x2="908.8" y2="852.5"><stop offset="0" stop-color="#aaaabf"/><stop offset="1" stop-color="#9e9eaf"/></linearGradient><linearGradient id="g6_30" gradientUnits="userSpaceOnUse" x1="908.8" y1="852.5" x2="895.0" y2="848.8"><stop offset="0" stop-color="#868690"/><stop offset="1" stop-color="#868691"/></linearGradient><linearGradient id="g6_33" gradientUnits="userSpaceOnUse" x1="907.5" y1="902.5" x2="897.5" y2="930.0"><stop offset="0" stop-color="#bbbbd5"/><stop offset="1" stop-color="#b5b5ce"/></linearGradient><linearGradient id="g6_34" gradientUnits="userSpaceOnUse" x1="897.5" y1="930.0" x2="886.2" y2="932.5"><stop offset="0" stop-color="#a5a5b9"/><stop offset="1" stop-color="#9696a6"/></linearGradient><linearGradient id="g6_35" gradientUnits="userSpaceOnUse" x1="886.2" y1="932.5" x2="867.5" y2="927.5"><stop offset="0" stop-color="#858590"/><stop offset="1" stop-color="#868690"/></linearGradient><linearGradient id="g6_36" gradientUnits="userSpaceOnUse" x1="867.5" y1="927.5" x2="853.8" y2="932.5"><stop offset="0" stop-color="#9d9dae"/><stop offset="1" stop-color="#a5a5b9"/></linearGradient><linearGradient id="g6_37" gradientUnits="userSpaceOnUse" x1="853.8" y1="932.5" x2="846.2" y2="936.2"><stop offset="0" stop-color="#a7a7bc"/><stop offset="1" stop-color="#9d9dae"/></linearGradient><linearGradient id="g6_38" gradientUnits="userSpaceOnUse" x1="846.2" y1="936.2" x2="831.2" y2="925.0"><stop offset="0" stop-color="#80808a"/><stop offset="1" stop-color="#7b7b84"/></linearGradient><linearGradient id="g6_39" gradientUnits="userSpaceOnUse" x1="831.2" y1="925.0" x2="765.0" y2="896.2"><stop offset="0" stop-color="#7e7e87"/><stop offset="1" stop-color="#7d7d87"/></linearGradient><linearGradient id="g6_41" gradientUnits="userSpaceOnUse" x1="766.2" y1="895.0" x2="762.5" y2="851.2"><stop offset="0" stop-color="#72727a"/><stop offset="1" stop-color="#707078"/></linearGradient><linearGradient id="g6_42" gradientUnits="userSpaceOnUse" x1="762.5" y1="851.2" x2="755.0" y2="832.5"><stop offset="0" stop-color="#717179"/><stop offset="1" stop-color="#73737b"/></linearGradient><linearGradient id="g6_43" gradientUnits="userSpaceOnUse" x1="755.0" y1="832.5" x2="745.0" y2="820.0"><stop offset="0" stop-color="#75757d"/><stop offset="1" stop-color="#797982"/></linearGradient><linearGradient id="g6_44" gradientUnits="userSpaceOnUse" x1="745.0" y1="820.0" x2="693.8" y2="816.2"><stop offset="0" stop-color="#83838d"/><stop offset="1" stop-color="#868690"/></linearGradient><linearGradient id="g6_45" gradientUnits="userSpaceOnUse" x1="693.8" y1="816.2" x2="681.2" y2="812.5"><stop offset="0" stop-color="#83838d"/><stop offset="1" stop-color="#888893"/></linearGradient><linearGradient id="g6_46" gradientUnits="userSpaceOnUse" x1="681.2" y1="812.5" x2="675.0" y2="821.2"><stop offset="0" stop-color="#adadc4"/><stop offset="1" stop-color="#afafc6"/></linearGradient><linearGradient id="g6_47" gradientUnits="userSpaceOnUse" x1="675.0" y1="821.2" x2="656.2" y2="820.0"><stop offset="0" stop-color="#9898a8"/><stop offset="1" stop-color="#858590"/></linearGradient><linearGradient id="g6_48" gradientUnits="userSpaceOnUse" x1="656.2" y1="820.0" x2="623.8" y2="807.5"><stop offset="0" stop-color="#81818c"/><stop offset="1" stop-color="#7c7c86"/></linearGradient><linearGradient id="g6_49" gradientUnits="userSpaceOnUse" x1="623.8" y1="807.5" x2="621.2" y2="796.2"><stop offset="0" stop-color="#74747c"/><stop offset="1" stop-color="#76767f"/></linearGradient><linearGradient id="g6_50" gradientUnits="userSpaceOnUse" x1="621.2" y1="796.2" x2="583.8" y2="797.5"><stop offset="0" stop-color="#84848e"/><stop offset="1" stop-color="#888893"/></linearGradient><linearGradient id="g6_51" gradientUnits="userSpaceOnUse" x1="583.8" y1="797.5" x2="522.5" y2="778.8"><stop offset="0" stop-color="#83838e"/><stop offset="1" stop-color="#7f7f89"/></linearGradient><linearGradient id="g6_52" gradientUnits="userSpaceOnUse" x1="522.5" y1="778.8" x2="505.0" y2="761.2"><stop offset="0" stop-color="#7a7a83"/><stop offset="1" stop-color="#7a7a83"/></linearGradient><linearGradient id="g6_53" gradientUnits="userSpaceOnUse" x1="505.0" y1="761.2" x2="453.8" y2="752.5"><stop offset="0" stop-color="#82828c"/><stop offset="1" stop-color="#81818b"/></linearGradient><linearGradient id="g6_54" gradientUnits="userSpaceOnUse" x1="453.8" y1="752.5" x2="442.5" y2="738.8"><stop offset="0" stop-color="#797982"/><stop offset="1" stop-color="#7d7d86"/></linearGradient><linearGradient id="g6_55" gradientUnits="userSpaceOnUse" x1="442.5" y1="738.8" x2="431.2" y2="745.0"><stop offset="0" stop-color="#9c9cae"/><stop offset="1" stop-color="#a0a0b2"/></linearGradient><linearGradient id="g6_56" gradientUnits="userSpaceOnUse" x1="431.2" y1="745.0" x2="417.5" y2="737.5"><stop offset="0" stop-color="#82828d"/><stop offset="1" stop-color="#7a7a83"/></linearGradient><linearGradient id="g6_57" gradientUnits="userSpaceOnUse" x1="417.5" y1="737.5" x2="413.8" y2="717.5"><stop offset="0" stop-color="#73737b"/><stop offset="1" stop-color="#717179"/></linearGradient><linearGradient id="g6_61" gradientUnits="userSpaceOnUse" x1="442.5" y1="664.0" x2="433.8" y2="657.5"><stop offset="0" stop-color="#7c7c85"/><stop offset="1" stop-color="#787881"/></linearGradient><linearGradient id="vg6" x1="0" y1="0" x2="0" y2="1"><stop offset="0" stop-color="#000" stop-opacity="0.08"/><stop offset="0.45" stop-color="#808080" stop-opacity="0"/><stop offset="0.75" stop-color="#fff" stop-opacity="0.12"/></linearGradient></defs>
<g clip-path="url(#c6)" stroke="#111" stroke-width="0.9">
<polygon points="983.8,585.0 976.2,593.8 969.9,621.0 977.4,612.2" fill="url(#g6_10)"/>
<polygon points="983.8,585.0 976.2,593.8 969.9,621.0 977.4,612.2" fill="url(#vg6)" stroke="none"/>
<polygon points="1026.2,641.2 1007.5,658.8 1001.1,686.0 1019.9,668.5" fill="url(#g6_16)"/>
<polygon points="1026.2,641.2 1007.5,658.8 1001.1,686.0 1019.9,668.5" fill="url(#vg6)" stroke="none"/>
<polygon points="1017.5,681.2 1008.8,702.5 1002.4,729.7 1011.1,708.5" fill="url(#g6_19)"/>
<polygon points="1017.5,681.2 1008.8,702.5 1002.4,729.7 1011.1,708.5" fill="url(#vg6)" stroke="none"/>
<polygon points="1008.8,702.5 996.2,701.2 989.9,728.5 1002.4,729.7" fill="url(#g6_20)"/>
<polygon points="1008.8,702.5 996.2,701.2 989.9,728.5 1002.4,729.7" fill="url(#vg6)" stroke="none"/>
<polygon points="996.2,701.2 983.8,696.2 977.4,723.5 989.9,728.5" fill="url(#g6_21)"/>
<polygon points="996.2,701.2 983.8,696.2 977.4,723.5 989.9,728.5" fill="url(#vg6)" stroke="none"/>
<polygon points="997.5,763.8 976.2,800.0 969.9,827.2 991.1,791.0" fill="url(#g6_25)"/>
<polygon points="997.5,763.8 976.2,800.0 969.9,827.2 991.1,791.0" fill="url(#vg6)" stroke="none"/>
<polygon points="976.2,800.0 950.0,806.2 943.6,833.5 969.9,827.2" fill="url(#g6_26)"/>
<polygon points="976.2,800.0 950.0,806.2 943.6,833.5 969.9,827.2" fill="url(#vg6)" stroke="none"/>
<polygon points="952.5,817.5 937.5,841.2 931.1,868.5 946.1,844.7" fill="url(#g6_28)"/>
<polygon points="952.5,817.5 937.5,841.2 931.1,868.5 946.1,844.7" fill="url(#vg6)" stroke="none"/>
<polygon points="937.5,841.2 908.8,852.5 902.4,879.7 931.1,868.5" fill="url(#g6_29)"/>
<polygon points="937.5,841.2 908.8,852.5 902.4,879.7 931.1,868.5" fill="url(#vg6)" stroke="none"/>
<polygon points="908.8,852.5 895.0,848.8 888.6,876.0 902.4,879.7" fill="url(#g6_30)"/>
<polygon points="908.8,852.5 895.0,848.8 888.6,876.0 902.4,879.7" fill="url(#vg6)" stroke="none"/>
<polygon points="907.5,902.5 897.5,930.0 891.1,957.2 901.1,929.7" fill="url(#g6_33)"/>
<polygon points="907.5,902.5 897.5,930.0 891.1,957.2 901.1,929.7" fill="url(#vg6)" stroke="none"/>
<polygon points="897.5,930.0 886.2,932.5 879.9,959.7 891.1,957.2" fill="url(#g6_34)"/>
<polygon points="897.5,930.0 886.2,932.5 879.9,959.7 891.1,957.2" fill="url(#vg6)" stroke="none"/>
<polygon points="886.2,932.5 867.5,927.5 861.1,954.7 879.9,959.7" fill="url(#g6_35)"/>
<polygon points="886.2,932.5 867.5,927.5 861.1,954.7 879.9,959.7" fill="url(#vg6)" stroke="none"/>
<polygon points="867.5,927.5 853.8,932.5 847.4,959.7 861.1,954.7" fill="url(#g6_36)"/>
<polygon points="867.5,927.5 853.8,932.5 847.4,959.7 861.1,954.7" fill="url(#vg6)" stroke="none"/>
<polygon points="853.8,932.5 846.2,936.2 839.9,963.5 847.4,959.7" fill="url(#g6_37)"/>
<polygon points="853.8,932.5 846.2,936.2 839.9,963.5 847.4,959.7" fill="url(#vg6)" stroke="none"/>
<polygon points="846.2,936.2 831.2,925.0 824.9,952.2 839.9,963.5" fill="url(#g6_38)"/>
<polygon points="846.2,936.2 831.2,925.0 824.9,952.2 839.9,963.5" fill="url(#vg6)" stroke="none"/>
<polygon points="831.2,925.0 765.0,896.2 758.6,923.5 824.9,952.2" fill="url(#g6_39)"/>
<polygon points="831.2,925.0 765.0,896.2 758.6,923.5 824.9,952.2" fill="url(#vg6)" stroke="none"/>
<polygon points="766.2,895.0 762.5,851.2 756.1,878.5 759.9,922.2" fill="url(#g6_41)"/>
<polygon points="766.2,895.0 762.5,851.2 756.1,878.5 759.9,922.2" fill="url(#vg6)" stroke="none"/>
<polygon points="762.5,851.2 755.0,832.5 748.6,859.7 756.1,878.5" fill="url(#g6_42)"/>
<polygon points="762.5,851.2 755.0,832.5 748.6,859.7 756.1,878.5" fill="url(#vg6)" stroke="none"/>
<polygon points="755.0,832.5 745.0,820.0 738.6,847.2 748.6,859.7" fill="url(#g6_43)"/>
<polygon points="755.0,832.5 745.0,820.0 738.6,847.2 748.6,859.7" fill="url(#vg6)" stroke="none"/>
<polygon points="745.0,820.0 693.8,816.2 695.4,845.0 738.6,847.2" fill="url(#g6_44)"/>
<polygon points="745.0,820.0 693.8,816.2 695.4,845.0 738.6,847.2" fill="url(#vg6)" stroke="none"/>
<polygon points="693.8,816.2 681.2,812.5 682.9,841.3 695.4,845.0" fill="url(#g6_45)"/>
<polygon points="693.8,816.2 681.2,812.5 682.9,841.3 695.4,845.0" fill="url(#vg6)" stroke="none"/>
<polygon points="681.2,812.5 675.0,821.2 676.6,850.0 682.9,841.3" fill="url(#g6_46)"/>
<polygon points="681.2,812.5 675.0,821.2 676.6,850.0 682.9,841.3" fill="url(#vg6)" stroke="none"/>
<polygon points="675.0,821.2 656.2,820.0 657.9,848.8 676.6,850.0" fill="url(#g6_47)"/>
<polygon points="675.0,821.2 656.2,820.0 657.9,848.8 676.6,850.0" fill="url(#vg6)" stroke="none"/>
<polygon points="656.2,820.0 623.8,807.5 625.4,836.3 657.9,848.8" fill="url(#g6_48)"/>
<polygon points="656.2,820.0 623.8,807.5 625.4,836.3 657.9,848.8" fill="url(#vg6)" stroke="none"/>
<polygon points="623.8,807.5 621.2,796.2 622.9,825.0 625.4,836.3" fill="url(#g6_49)"/>
<polygon points="623.8,807.5 621.2,796.2 622.9,825.0 625.4,836.3" fill="url(#vg6)" stroke="none"/>
<polygon points="621.2,796.2 583.8,797.5 585.4,826.3 622.9,825.0" fill="url(#g6_50)"/>
<polygon points="621.2,796.2 583.8,797.5 585.4,826.3 622.9,825.0" fill="url(#vg6)" stroke="none"/>
<polygon points="583.8,797.5 522.5,778.8 508.1,833.1 585.4,826.3" fill="url(#g6_51)"/>
<polygon points="583.8,797.5 522.5,778.8 508.1,833.1 585.4,826.3" fill="url(#vg6)" stroke="none"/>
<polygon points="522.5,778.8 505.0,761.2 490.6,815.6 508.1,833.1" fill="url(#g6_52)"/>
<polygon points="522.5,778.8 505.0,761.2 490.6,815.6 508.1,833.1" fill="url(#vg6)" stroke="none"/>
<polygon points="505.0,761.2 453.8,752.5 439.4,806.9 490.6,815.6" fill="url(#g6_53)"/>
<polygon points="505.0,761.2 453.8,752.5 439.4,806.9 490.6,815.6" fill="url(#vg6)" stroke="none"/>
<polygon points="453.8,752.5 442.5,738.8 428.1,793.1 439.4,806.9" fill="url(#g6_54)"/>
<polygon points="453.8,752.5 442.5,738.8 428.1,793.1 439.4,806.9" fill="url(#vg6)" stroke="none"/>
<polygon points="442.5,738.8 431.2,745.0 416.9,799.4 428.1,793.1" fill="url(#g6_55)"/>
<polygon points="442.5,738.8 431.2,745.0 416.9,799.4 428.1,793.1" fill="url(#vg6)" stroke="none"/>
<polygon points="431.2,745.0 417.5,737.5 403.1,791.9 416.9,799.4" fill="url(#g6_56)"/>
<polygon points="431.2,745.0 417.5,737.5 403.1,791.9 416.9,799.4" fill="url(#vg6)" stroke="none"/>
<polygon points="417.5,737.5 413.8,717.5 399.4,771.9 403.1,791.9" fill="url(#g6_57)"/>
<polygon points="417.5,737.5 413.8,717.5 399.4,771.9 403.1,791.9" fill="url(#vg6)" stroke="none"/>
<polygon points="442.5,664.0 433.8,657.5 435.4,686.3 444.1,692.8" fill="url(#g6_61)"/>
<polygon points="442.5,664.0 433.8,657.5 435.4,686.3 444.1,692.8" fill="url(#vg6)" stroke="none"/>
<line x1="981.7" y1="593.8" x2="974.2" y2="602.6"/>
<line x1="1024.2" y1="650.1" x2="1005.4" y2="667.6"/>
<line x1="1015.4" y1="690.1" x2="1006.7" y2="711.3"/>
<line x1="1006.7" y1="711.3" x2="994.2" y2="710.1"/>
<line x1="994.2" y1="710.1" x2="981.7" y2="705.1"/>
<line x1="995.4" y1="772.6" x2="974.2" y2="808.8"/>
<line x1="974.2" y1="808.8" x2="947.9" y2="815.1"/>
<line x1="950.4" y1="826.3" x2="935.4" y2="850.1"/>
<line x1="935.4" y1="850.1" x2="906.7" y2="861.3"/>
<line x1="906.7" y1="861.3" x2="892.9" y2="857.6"/>
<line x1="905.4" y1="911.3" x2="895.4" y2="938.8"/>
<line x1="895.4" y1="938.8" x2="884.2" y2="941.3"/>
<line x1="884.2" y1="941.3" x2="865.4" y2="936.3"/>
<line x1="865.4" y1="936.3" x2="851.7" y2="941.3"/>
<line x1="851.7" y1="941.3" x2="844.2" y2="945.1"/>
<line x1="844.2" y1="945.1" x2="829.2" y2="933.8"/>
<line x1="829.2" y1="933.8" x2="762.9" y2="905.1"/>
<line x1="764.2" y1="903.8" x2="760.4" y2="860.1"/>
<line x1="760.4" y1="860.1" x2="752.9" y2="841.3"/>
<line x1="752.9" y1="841.3" x2="742.9" y2="828.8"/>
<line x1="742.9" y1="828.8" x2="694.3" y2="825.6"/>
<line x1="694.3" y1="825.6" x2="681.8" y2="821.9"/>
<line x1="681.8" y1="821.9" x2="675.5" y2="830.6"/>
<line x1="675.5" y1="830.6" x2="656.8" y2="829.4"/>
<line x1="656.8" y1="829.4" x2="624.3" y2="816.9"/>
<line x1="624.3" y1="816.9" x2="621.8" y2="805.6"/>
<line x1="621.8" y1="805.6" x2="584.3" y2="806.9"/>
<line x1="584.3" y1="806.9" x2="517.8" y2="796.4"/>
<line x1="517.8" y1="796.4" x2="500.3" y2="778.9"/>
<line x1="500.3" y1="778.9" x2="449.1" y2="770.2"/>
<line x1="449.1" y1="770.2" x2="437.8" y2="756.4"/>
<line x1="437.8" y1="756.4" x2="426.6" y2="762.7"/>
<line x1="426.6" y1="762.7" x2="412.8" y2="755.2"/>
<line x1="412.8" y1="755.2" x2="409.1" y2="735.2"/>
<line x1="443.0" y1="673.4" x2="434.3" y2="666.9"/>
</g>
<polygon points="703.8,527.5 740.0,528.8 756.2,518.8 787.5,520.0 822.5,507.5 862.5,517.5 892.5,541.2 942.5,548.0 957.5,551.2 972.5,566.2 983.8,585.0 976.2,593.8 987.5,591.2 1005.0,597.5 1015.0,616.2 1025.0,628.8 1026.2,641.2 1007.5,658.8 1013.8,662.5 1017.5,681.2 1008.8,702.5 996.2,701.2 983.8,696.2 996.2,726.2 998.8,736.2 997.5,763.8 976.2,800.0 950.0,806.2 952.5,817.5 937.5,841.2 908.8,852.5 895.0,848.8 908.8,856.2 907.5,902.5 897.5,930.0 886.2,932.5 867.5,927.5 853.8,932.5 846.2,936.2 831.2,925.0 765.0,896.2 766.2,895.0 762.5,851.2 755.0,832.5 745.0,820.0 693.8,816.2 681.2,812.5 675.0,821.2 656.2,820.0 623.8,807.5 621.2,796.2 583.8,797.5 522.5,778.8 505.0,761.2 453.8,752.5 442.5,738.8 431.2,745.0 417.5,737.5 413.8,717.5 420.0,700.0 430.0,667.5 442.5,664.0 433.8,657.5 435.0,646.2 445.0,626.2 455.0,616.2 473.8,582.5 502.5,570.0 523.8,541.2 542.5,522.5 573.8,512.5 605.0,502.0 638.8,497.5 675.0,501.2" fill="#b9b9c9" stroke="#14202a" stroke-width="1.5" stroke-linejoin="round"/>
<polygon points="703.8,527.5 740.0,528.8 756.2,518.8 787.5,520.0 822.5,507.5 862.5,517.5 892.5,541.2 942.5,548.0 957.5,551.2 972.5,566.2 983.8,585.0 976.2,593.8 987.5,591.2 1005.0,597.5 1015.0,616.2 1025.0,628.8 1026.2,641.2 1007.5,658.8 1013.8,662.5 1017.5,681.2 1008.8,702.5 996.2,701.2 983.8,696.2 996.2,726.2 998.8,736.2 997.5,763.8 976.2,800.0 950.0,806.2 952.5,817.5 937.5,841.2 908.8,852.5 895.0,848.8 908.8,856.2 907.5,902.5 897.5,930.0 886.2,932.5 867.5,927.5 853.8,932.5 846.2,936.2 831.2,925.0 765.0,896.2 766.2,895.0 762.5,851.2 755.0,832.5 745.0,820.0 693.8,816.2 681.2,812.5 675.0,821.2 656.2,820.0 623.8,807.5 621.2,796.2 583.8,797.5 522.5,778.8 505.0,761.2 453.8,752.5 442.5,738.8 431.2,745.0 417.5,737.5 413.8,717.5 420.0,700.0 430.0,667.5 442.5,664.0 433.8,657.5 435.0,646.2 445.0,626.2 455.0,616.2 473.8,582.5 502.5,570.0 523.8,541.2 542.5,522.5 573.8,512.5 605.0,502.0 638.8,497.5 675.0,501.2" fill="none" stroke="#10e6f0" stroke-width="1.15" stroke-linejoin="round"/>
<g fill="none" stroke="#0c0c0c" stroke-width="0.9">
<polyline points="523.8,541.2 573.8,512.5"/>
<polyline points="502.5,570.0 573.8,512.5"/>
<polyline points="502.5,570.0 505.0,761.2"/>
<polyline points="502.5,570.0 621.2,796.2"/>
<polyline points="502.5,570.0 443.8,662.5"/>
<polyline points="502.5,570.0 447.0,700.0"/>
<polyline points="502.5,570.0 445.0,626.2"/>
<polyline points="502.5,570.0 455.0,616.2"/>
<polyline points="447.0,700.0 443.8,662.5"/>
<polyline points="447.0,700.0 421.0,701.0"/>
<polyline points="447.0,700.0 431.2,745.0"/>
<polyline points="447.0,700.0 442.5,738.8"/>
<polyline points="447.0,700.0 453.8,752.5"/>
<polyline points="447.0,700.0 505.0,761.2"/>
<polyline points="703.8,527.5 573.8,512.5"/>
<polyline points="703.8,527.5 605.0,502.0"/>
<polyline points="703.8,527.5 638.8,497.5"/>
<polyline points="703.8,527.5 621.2,796.2"/>
<polyline points="740.0,528.8 681.2,812.5"/>
<polyline points="740.0,528.8 922.5,821.2"/>
<polyline points="740.0,528.8 983.8,696.2"/>
<polyline points="787.5,520.0 983.8,696.2"/>
<polyline points="787.5,520.0 892.5,541.2"/>
<polyline points="787.5,520.0 862.5,517.5"/>
<polyline points="892.5,541.2 983.8,696.2"/>
<polyline points="892.5,541.2 952.5,575.0"/>
<polyline points="942.5,548.0 983.8,696.2"/>
<polyline points="972.5,566.2 952.5,575.0"/>
<polyline points="973.8,595.0 983.8,696.2"/>
<polyline points="973.8,595.0 1013.8,617.5"/>
<polyline points="973.8,595.0 1008.8,657.5"/>
<polyline points="983.8,696.2 950.0,806.2"/>
<polyline points="1007.5,658.8 996.2,701.2"/>
<polyline points="895.0,848.8 752.0,829.0"/>
<polyline points="895.0,848.8 765.0,865.0"/>
<polyline points="895.0,848.8 766.2,895.0"/>
<polyline points="895.0,848.8 831.2,925.0"/>
<polyline points="895.0,848.8 890.0,888.8"/>
<polyline points="895.0,848.8 922.5,821.2"/>
<polyline points="922.5,821.2 752.5,830.5"/>
<polyline points="922.5,821.2 950.0,806.2"/>
<polyline points="922.5,821.2 937.5,841.2"/>
<polyline points="950.0,806.2 998.8,736.2"/>
<polyline points="950.0,806.2 997.5,763.8"/>
<polyline points="890.0,888.8 831.2,925.0"/>
<polyline points="890.0,888.8 907.5,902.5"/>
<polyline points="890.0,888.8 867.5,927.5"/>
<polyline points="831.2,925.0 905.0,905.0"/>
<polyline points="621.2,796.2 505.0,761.2"/>
<polyline points="621.2,796.2 522.5,778.8"/>
<polyline points="621.2,796.2 681.2,812.5"/>
<polyline points="621.2,796.2 656.2,820.0"/>
<polyline points="681.2,812.5 656.2,820.0"/>
</g>
<defs><linearGradient id="mg1" x1="0" y1="0" x2="1" y2="1"><stop offset="0" stop-color="#9c9ca8"/><stop offset="1" stop-color="#b4b4c6"/></linearGradient><linearGradient id="mg2" x1="0" y1="0" x2="1" y2="0"><stop offset="0" stop-color="#7c7c84"/><stop offset="1" stop-color="#a0a0ae"/></linearGradient><linearGradient id="mg3" x1="0" y1="0" x2="0" y2="1"><stop offset="0" stop-color="#8e8e98"/><stop offset="1" stop-color="#6e6e76"/></linearGradient></defs>
<polygon points="681.2,812.5 745.0,820.0 755.0,832.5 762.5,851.2 762.5,878.8 766.2,895.0 760.0,902.5 746.2,923.8 732.5,938.8 685.0,900.0 677.5,870.0 671.2,846.2 673.8,831.2" fill="#85858f" stroke="#0c0c0c" stroke-width="0.9" stroke-linejoin="round" />
<polygon points="711.2,856.2 745.0,820.0 755.0,832.5 762.5,851.2 762.5,878.8 745.0,881.2" fill="url(#mg1)" stroke="#0c0c0c" stroke-width="0.9" stroke-linejoin="round" />
<polygon points="681.2,812.5 745.0,820.0 711.2,856.2 700.0,838.8" fill="#9a9aa6" stroke="#0c0c0c" stroke-width="0.9" stroke-linejoin="round" />
<polygon points="700.0,838.8 711.2,856.2 697.5,878.8 690.0,847.5" fill="#8c8c96" stroke="#0c0c0c" stroke-width="0.9" stroke-linejoin="round" />
<polygon points="711.2,856.2 745.0,881.2 746.2,923.8 697.5,878.8" fill="url(#mg2)" stroke="#0c0c0c" stroke-width="0.9" stroke-linejoin="round" />
<polygon points="745.0,881.2 762.5,878.8 766.2,895.0 760.0,902.5 746.2,923.8" fill="#74747c" stroke="#0c0c0c" stroke-width="0.9" stroke-linejoin="round" />
<polygon points="697.5,878.8 746.2,923.8 732.5,938.8 685.0,900.0 687.5,897.5" fill="url(#mg3)" stroke="#0c0c0c" stroke-width="0.9" stroke-linejoin="round" />
<polygon points="681.2,812.5 700.0,838.8 690.0,847.5 673.8,831.2" fill="#7e7e86" stroke="#0c0c0c" stroke-width="0.9" stroke-linejoin="round" />
<polygon points="673.8,831.2 690.0,847.5 697.5,878.8 687.5,897.5 685.0,900.0 677.5,870.0 671.2,846.2" fill="#8a8a92" stroke="#0c0c0c" stroke-width="0.9" stroke-linejoin="round" />
<path d="M690,847.5 L687.5,897.5 M697.5,878.75 L746.25,905 M711.25,856.25 L745,881.25 M700,838.75 L745,820" stroke="#0c0c0c" stroke-width="0.9" fill="none"/>
<path d="M766.25,895 L765,867.5 L762.5,851.25" stroke="#18d8e0" stroke-width="1.2" fill="none"/>
</g>
</svg><div class="abs" style="left:0px;top:0px;width:1600px;height:26px;background:#696969;"></div>
<div class="abs" style="left:0px;top:0px;width:1600px;height:1px;background:#808080;"></div>
<svg class="abs" style="left:1586px;top:0px" width="14" height="14" viewBox="0 0 14 14"><path d="M1 0L14 13M5 0L14 9M9 0L14 5" stroke="#333" stroke-width="1"/><path d="M2.4 0L14 11.6M6.4 0L14 7.6M10.4 0L14 3.6" stroke="#9c9c9c" stroke-width="0.9"/></svg>
<div class="abs" style="left:0px;top:26px;width:1600px;height:1px;background:#0a0a0a;"></div>
<div class="abs" style="left:0px;top:0px;width:1px;height:1050px;background:#2a2a2a;"></div>
<svg class="abs" style="left:1px;top:12px" width="14" height="14" viewBox="0 0 14 14"><path d="M0 1L13 14M0 5L9 14M0 9L5 14" stroke="#333" stroke-width="1"/><path d="M0 2.4L11.6 14M0 6.4L7.6 14M0 10.4L3.6 14" stroke="#9c9c9c" stroke-width="0.9"/></svg>
<div class="btn dk" style="left:8px;top:4px;width:30px;height:20px;"></div>
<svg class="abs" style="left:13px;top:6px" width="16" height="16" viewBox="0 0 16 16"><circle cx="8" cy="8" r="7" fill="#2f5aa8" stroke="#dfe6f2" stroke-width="1.4"/><circle cx="8" cy="8" r="7.6" fill="none" stroke="#222" stroke-width="0.5"/><rect x="6.9" y="3.2" width="2.4" height="2.2" fill="#fff"/><path d="M5.8 6.6h3.5v4.6h1.3v1.4H5.6v-1.4h1.4V8H5.8z" fill="#fff"/></svg>
<svg class="abs" style="left:29px;top:8px" width="7" height="13" viewBox="0 0 7 13"><path d="M3.5 0.5 L6.8 5.3 H0.2 Z M3.5 12.5 L6.8 7.7 H0.2 Z" fill="#a5a5a5"/></svg>
<div class="t " style="left:50.5px;top:9px;letter-spacing:-0.252px;">File</div>
<div class="t " style="left:88.5px;top:9px;letter-spacing:-0.757px;">Render</div>
<div class="t " style="left:144px;top:9px;letter-spacing:-0.703px;">Window</div>
<div class="t " style="left:203.5px;top:9px;letter-spacing:-0.495px;">Help</div>
<div class="btn fld" style="left:239.5px;top:4px;width:192px;height:20px;border-radius:5px"></div>
<div class="abs" style="left:240.5px;top:5px;width:30px;height:18px;background:linear-gradient(#3e3e3e,#505050);border-radius:4px 0 0 4px"></div>
<svg class="abs" style="left:243px;top:6px" width="16" height="16" viewBox="0 0 16 16"><rect x="1" y="2" width="14" height="12" fill="#e8e8e8" stroke="#222" stroke-width="1"/><path d="M8 2v12M1 9.5h7" stroke="#222" stroke-width="1.2"/><rect x="2.3" y="11" width="4.2" height="1.4" fill="#555"/><rect x="9.3" y="11" width="4.2" height="1.4" fill="#555"/></svg>
<svg class="abs" style="left:260.5px;top:8px" width="7" height="13" viewBox="0 0 7 13"><path d="M3.5 0.5 L6.8 5.3 H0.2 Z M3.5 12.5 L6.8 7.7 H0.2 Z" fill="#a5a5a5"/></svg>
<div class="t " style="left:278px;top:9px;letter-spacing:-0.367px;">Modelling</div>
<div class="abs" style="left:390px;top:5px;width:1px;height:18px;background:#2b2b2b;"></div>
<div class="abs" style="left:410.5px;top:5px;width:1px;height:18px;background:#2b2b2b;"></div>
<div class="abs" style="left:391px;top:5px;width:19.5px;height:18px;background:linear-gradient(#a8a8a8,#8e8e8e);"></div>
<div class="abs" style="left:411.5px;top:5px;width:19px;height:18px;background:linear-gradient(#a8a8a8,#8e8e8e);border-radius:0 4px 4px 0"></div>
<svg class="abs" style="left:393px;top:6px" width="16" height="16" viewBox="0 0 16 16"><path d="M8 2.5v11M2.5 8h11" stroke="#1a1a1a" stroke-width="4"/><path d="M8 3.3v9.4M3.3 8h9.4" stroke="#f2f2f2" stroke-width="2"/></svg>
<svg class="abs" style="left:413px;top:6px" width="16" height="16" viewBox="0 0 16 16"><path d="M3.3 3.3l9.4 9.4M12.7 3.3l-9.4 9.4" stroke="#1a1a1a" stroke-width="4"/><path d="M4 4l8 8M12 4l-8 8" stroke="#f2f2f2" stroke-width="2"/></svg>
<div class="btn fld" style="left:436px;top:4px;width:192px;height:20px;border-radius:5px"></div>
<div class="abs" style="left:437px;top:5px;width:30px;height:18px;background:linear-gradient(#3e3e3e,#505050);border-radius:4px 0 0 4px"></div>
<svg class="abs" style="left:440px;top:6px" width="16" height="16" viewBox="0 0 16 16"><circle cx="3.2" cy="3.2" r="2" fill="#e6ea80" stroke="#8a9030" stroke-width="0.6"/><rect x="8.2" y="3" width="5.2" height="9" rx="2" fill="#4a86d8" stroke="#1c3c70" stroke-width="0.7"/><ellipse cx="10.8" cy="3.6" rx="2.6" ry="1.2" fill="#a9c8f2"/><circle cx="5.8" cy="11" r="3.6" fill="#e9e9e9" stroke="#222" stroke-width="0.8"/></svg>
<svg class="abs" style="left:457.5px;top:8px" width="7" height="13" viewBox="0 0 7 13"><path d="M3.5 0.5 L6.8 5.3 H0.2 Z M3.5 12.5 L6.8 7.7 H0.2 Z" fill="#a5a5a5"/></svg>
<div class="t " style="left:475px;top:9px;letter-spacing:-0.648px;">Scene</div>
<div class="abs" style="left:586.5px;top:5px;width:1px;height:18px;background:#2b2b2b;"></div>
<div class="abs" style="left:607px;top:5px;width:1px;height:18px;background:#2b2b2b;"></div>
<div class="abs" style="left:587.5px;top:5px;width:19.5px;height:18px;background:linear-gradient(#a8a8a8,#8e8e8e);"></div>
<div class="abs" style="left:608px;top:5px;width:19px;height:18px;background:linear-gradient(#a8a8a8,#8e8e8e);border-radius:0 4px 4px 0"></div>
<svg class="abs" style="left:589.5px;top:6px" width="16" height="16" viewBox="0 0 16 16"><path d="M8 2.5v11M2.5 8h11" stroke="#1a1a1a" stroke-width="4"/><path d="M8 3.3v9.4M3.3 8h9.4" stroke="#f2f2f2" stroke-width="2"/></svg>
<svg class="abs" style="left:609.5px;top:6px" width="16" height="16" viewBox="0 0 16 16"><path d="M3.3 3.3l9.4 9.4M12.7 3.3l-9.4 9.4" stroke="#1a1a1a" stroke-width="4"/><path d="M4 4l8 8M12 4l-8 8" stroke="#f2f2f2" stroke-width="2"/></svg>
<div class="btn dk" style="left:644.5px;top:4px;width:110.5px;height:20px;border-radius:5px"></div>
<div class="t w" style="left:652px;top:9px;letter-spacing:-0.676px;">Blender Render</div>
<svg class="abs" style="left:744px;top:8px" width="7" height="13" viewBox="0 0 7 13"><path d="M3.5 0.5 L6.8 5.3 H0.2 Z M3.5 12.5 L6.8 7.7 H0.2 Z" fill="#a5a5a5"/></svg>
<svg class="abs" style="left:772.5px;top:5px" width="17" height="17" viewBox="0 0 16 16"><path d="M0.8 12.6 L6.6 8 L4.4 8 L4.4 6.4 L7 6.4 L8.8 5 L6.6 3.4 L7.8 2.4 L12.4 5.6 L6.4 12.6 Z" fill="#ee7f14" stroke="#5a2c00" stroke-width="0.7" stroke-linejoin="round"/><circle cx="10.4" cy="10.2" r="5.6" fill="#ee7f14" stroke="#5a2c00" stroke-width="0.7"/><circle cx="10.4" cy="10.2" r="3.5" fill="#fff"/><circle cx="10.4" cy="10.2" r="2.1" fill="#1c55b0"/></svg>
<div class="t " style="left:799px;top:9px;letter-spacing:-0.421px;">v2.70 | Verts:0/1460 | Edges:0/2850 | Faces:0/1395 | Tris:2439 | Mem:89.06M | Plane.011</div>
<div class="t w" style="left:20px;top:38px;letter-spacing:-0.639px;">User Persp</div>
<div class="t w" style="left:70px;top:1004px;letter-spacing:-0.396px;">(1) Plane.011</div>
<div class="abs" style="left:1px;top:49px;width:12px;height:13px;background:#303030;border-radius:0 3px 3px 0"></div>
<svg class="abs" style="left:2px;top:51px" width="9" height="9" viewBox="0 0 9 9"><path d="M4.5 1v7M1 4.5h7" stroke="#6a6a6a" stroke-width="2"/></svg>
<div class="abs" style="left:1249px;top:49px;width:13px;height:13px;background:#303030;border-radius:3px 0 0 3px"></div>
<svg class="abs" style="left:1251px;top:51px" width="9" height="9" viewBox="0 0 9 9"><path d="M4.5 1v7M1 4.5h7" stroke="#6a6a6a" stroke-width="2"/></svg>
<svg class="abs" style="left:1249px;top:27px" width="14" height="14" viewBox="0 0 14 14"><path d="M1 0L14 13M5 0L14 9M9 0L14 5" stroke="#333" stroke-width="1"/><path d="M2.4 0L14 11.6M6.4 0L14 7.6M10.4 0L14 3.6" stroke="#9c9c9c" stroke-width="0.9"/></svg>
<svg class="abs" style="left:18px;top:966px" width="40" height="44" viewBox="0 0 40 44"><path d="M7.5 31.5 L7.5 16" stroke="#1a28e0" stroke-width="1.4"/><path d="M7.5 31.5 L17.5 10" stroke="#20c020" stroke-width="1.4"/><path d="M7.5 31.5 L30 39" stroke="#d81818" stroke-width="1.4"/><text x="9" y="14" font-size="10" fill="#2838e8" font-family="DejaVu Sans">z</text><text x="19" y="9" font-size="10" fill="#20c020" font-family="DejaVu Sans">y</text><text x="32" y="36" font-size="10" fill="#d81818" font-family="DejaVu Sans">x</text></svg>
<svg class="abs" style="left:648px;top:354px" width="10" height="10" viewBox="0 0 10 10"><circle cx="5" cy="5" r="2.8" fill="#f0a850" stroke="#402000" stroke-width="0.8"/></svg>
<div class="abs" style="left:0px;top:1024px;width:1263px;height:26px;background:#696969;"></div>
<div class="abs" style="left:0px;top:1024px;width:1263px;height:1px;background:#757575;"></div>
<svg class="abs" style="left:1px;top:1036px" width="14" height="14" viewBox="0 0 14 14"><path d="M0 1L13 14M0 5L9 14M0 9L5 14" stroke="#333" stroke-width="1"/><path d="M0 2.4L11.6 14M0 6.4L7.6 14M0 10.4L3.6 14" stroke="#9c9c9c" stroke-width="0.9"/></svg>
<div class="btn dk" style="left:9px;top:1027px;width:30px;height:20px;"></div>
<svg class="abs" style="left:13px;top:1029px" width="16" height="16" viewBox="0 0 16 16"><path d="M2 4.5 L8.5 2.5 L14 4.5 L14 11.5 L8 14 L2 11.5 Z" fill="#dcdcdc" stroke="#1a1a1a" stroke-width="1"/><path d="M2 4.5 L8 6.6 L14 4.5 M8 6.6 V14" stroke="#1a1a1a" stroke-width="0.9" fill="none"/><path d="M2 4.5 L8 6.6 V14 L2 11.5Z" fill="#f6f6f6"/><path d="M8 6.6 L14 4.5 V11.5 L8 14Z" fill="#9a9a9a"/><path d="M2 4.5 L8.5 2.5 L14 4.5 L14 11.5 L8 14 L2 11.5 Z M2 4.5 L8 6.6 L14 4.5 M8 6.6 V14" fill="none" stroke="#1a1a1a" stroke-width="0.9"/></svg>
<svg class="abs" style="left:30px;top:1031px" width="7" height="13" viewBox="0 0 7 13"><path d="M3.5 0.5 L6.8 5.3 H0.2 Z M3.5 12.5 L6.8 7.7 H0.2 Z" fill="#a5a5a5"/></svg>
<div class="t " style="left:52px;top:1032px;letter-spacing:-0.262px;">View</div>
<div class="t " style="left:96px;top:1032px;letter-spacing:-0.440px;">Select</div>
<div class="t " style="left:147px;top:1032px;letter-spacing:-0.559px;">Add</div>
<div class="t " style="left:186.5px;top:1032px;letter-spacing:-0.540px;">Mesh</div>
<div class="btn dk" style="left:225.5px;top:1027px;width:98px;height:20px;border-radius:5px"></div>
<svg class="abs" style="left:229px;top:1029px" width="16" height="16" viewBox="0 0 16 16"><path d="M3 3.6 L8.8 2 L13 3.6 V11.6 L8 14 L3 11.6 Z" fill="#c8c8c8" stroke="#333" stroke-width="0.8"/><path d="M8 5.4V14M3 3.6L8 5.4L13 3.6" stroke="#444" stroke-width="0.7" fill="none"/><rect x="1.8" y="2.4" width="2.6" height="2.6" fill="#f09030" stroke="#5a3000" stroke-width="0.6"/><rect x="1.8" y="10.2" width="2.6" height="2.6" fill="#f09030" stroke="#5a3000" stroke-width="0.6"/><rect x="6.8" y="4.2" width="2.6" height="2.6" fill="#f09030" stroke="#5a3000" stroke-width="0.6"/><rect x="6.8" y="12" width="2.6" height="2.6" fill="#f09030" stroke="#5a3000" stroke-width="0.6"/><path d="M3.1 5v5.2M4.4 3.9l2.4 0.9" stroke="#5a3000" stroke-width="0.9"/></svg>
<div class="t w" style="left:249px;top:1032px;letter-spacing:-0.619px;">Edit Mode</div>
<svg class="abs" style="left:313px;top:1031px" width="7" height="13" viewBox="0 0 7 13"><path d="M3.5 0.5 L6.8 5.3 H0.2 Z M3.5 12.5 L6.8 7.7 H0.2 Z" fill="#a5a5a5"/></svg>
<div class="btn dk" style="left:329.5px;top:1027px;width:34px;height:20px;border-radius:5px"></div>
<svg class="abs" style="left:333px;top:1029px" width="16" height="16" viewBox="0 0 16 16"><circle cx="8" cy="8" r="6" fill="#f2f2f2" stroke="#111" stroke-width="0.9"/></svg>
<svg class="abs" style="left:353px;top:1031px" width="7" height="13" viewBox="0 0 7 13"><path d="M3.5 0.5 L6.8 5.3 H0.2 Z M3.5 12.5 L6.8 7.7 H0.2 Z" fill="#a5a5a5"/></svg>
<div class="btn dk" style="left:369.5px;top:1027px;width:34px;height:20px;border-radius:5px"></div>
<svg class="abs" style="left:372px;top:1029px" width="16" height="16" viewBox="0 0 16 16"><circle cx="5.5" cy="6" r="3.6" fill="#f2f2f2" stroke="#111" stroke-width="0.9"/><circle cx="10.5" cy="10.5" r="3.6" fill="#f2f2f2" stroke="#111" stroke-width="0.9"/><circle cx="8" cy="8.3" r="2.2" fill="#4a88e0" stroke="#123" stroke-width="0.6"/></svg>
<svg class="abs" style="left:394px;top:1031px" width="7" height="13" viewBox="0 0 7 13"><path d="M3.5 0.5 L6.8 5.3 H0.2 Z M3.5 12.5 L6.8 7.7 H0.2 Z" fill="#a5a5a5"/></svg>
<div class="btn dk" style="left:409.5px;top:1027px;width:151px;height:20px;border-radius:5px"></div>
<div class="abs" style="left:430px;top:1028px;width:18.5px;height:18px;background:#5680c2;"></div>
<div class="abs" style="left:429.5px;top:1028px;width:1px;height:18px;background:#2b2b2b;"></div>
<div class="abs" style="left:448.5px;top:1028px;width:1px;height:18px;background:#2b2b2b;"></div>
<div class="abs" style="left:468.5px;top:1028px;width:1px;height:18px;background:#2b2b2b;"></div>
<div class="abs" style="left:488.5px;top:1028px;width:1px;height:18px;background:#2b2b2b;"></div>
<svg class="abs" style="left:411px;top:1028px" width="18" height="18" viewBox="0 0 18 18"><path d="M9 11V2" stroke="#3050e8" stroke-width="1.8"/><path d="M9 11L2 16" stroke="#e82020" stroke-width="1.8"/><path d="M9 11L16 16" stroke="#30c830" stroke-width="1.8"/><circle cx="9" cy="11" r="1.6" fill="#eee"/></svg>
<svg class="abs" style="left:431px;top:1029px" width="16" height="16" viewBox="0 0 16 16"><path d="M2 14 L11 5" stroke="#17346e" stroke-width="3.4"/><path d="M2 14 L11 5" stroke="#9cc4f8" stroke-width="1.6"/><path d="M7.5 2.5 L14 2 L13.5 8.5 Z" fill="#9cc4f8" stroke="#17346e" stroke-width="0.9"/></svg>
<svg class="abs" style="left:450px;top:1029px" width="17" height="16" viewBox="0 0 17 16"><path d="M3 14 C3 8 7 3.5 14 3" fill="none" stroke="#1c3460" stroke-width="3"/><path d="M3 14 C3 8 7 3.5 14 3" fill="none" stroke="#5a88c8" stroke-width="1.6"/></svg>
<svg class="abs" style="left:470px;top:1029px" width="17" height="16" viewBox="0 0 17 16"><path d="M2.5 14 L10 6.5" stroke="#1c3460" stroke-width="3.2"/><path d="M2.5 14 L10 6.5" stroke="#5a88c8" stroke-width="1.6"/><rect x="8" y="2.5" width="6" height="6" fill="#5a88c8" stroke="#1c3460" stroke-width="0.9"/></svg>
<div class="t w" style="left:496px;top:1032px;letter-spacing:-0.381px;">Local</div>
<svg class="abs" style="left:551px;top:1031px" width="7" height="13" viewBox="0 0 7 13"><path d="M3.5 0.5 L6.8 5.3 H0.2 Z M3.5 12.5 L6.8 7.7 H0.2 Z" fill="#a5a5a5"/></svg>
<div class="btn lt" style="left:567px;top:1027px;width:59px;height:20px;border-radius:5px;background:linear-gradient(#b0b0b0,#949494)"></div>
<div class="abs" style="left:586px;top:1028px;width:1px;height:18px;background:#2b2b2b;"></div>
<div class="abs" style="left:606px;top:1028px;width:1px;height:18px;background:#2b2b2b;"></div>
<div class="abs" style="left:587px;top:1028px;width:19px;height:18px;background:linear-gradient(#4a4a4a,#5c5c5c);"></div>
<svg class="abs" style="left:569px;top:1029px" width="16" height="16" viewBox="0 0 16 16"><path d="M2.5 5 L8.5 3 L13.5 5 V11.5 L8 14 L2.5 11.5Z" fill="#bcbcbc" stroke="#666" stroke-width="0.8"/><path d="M2.5 5L8 7L13.5 5M8 7V14" stroke="#777" stroke-width="0.7" fill="none"/><circle cx="2.8" cy="5" r="1.5" fill="#f8d0a0"/></svg>
<svg class="abs" style="left:588.5px;top:1029px" width="16" height="16" viewBox="0 0 16 16"><path d="M2.5 5 L8.5 3 L13.5 5 V11.5 L8 14 L2.5 11.5Z" fill="#8c8c8c" stroke="#222" stroke-width="0.8"/><path d="M2.5 5L8 7L13.5 5M8 7V14" stroke="#333" stroke-width="0.7" fill="none"/><path d="M2.6 5V11.5" stroke="#f09040" stroke-width="1.8"/></svg>
<svg class="abs" style="left:608px;top:1029px" width="16" height="16" viewBox="0 0 16 16"><path d="M2.5 5 L8.5 3 L13.5 5 V11.5 L8 14 L2.5 11.5Z" fill="#c0c0c0" stroke="#555" stroke-width="0.8"/><path d="M2.5 5 L8 7 V14 L2.5 11.5Z" fill="#f0b078" stroke="#7a4a18" stroke-width="0.7"/><path d="M8 7L13.5 5" stroke="#666" stroke-width="0.7"/></svg>
<div class="btn dk" style="left:632px;top:1027px;width:19px;height:20px;border-radius:5px"></div>
<svg class="abs" style="left:633.5px;top:1029px" width="16" height="16" viewBox="0 0 16 16"><rect x="3.5" y="3.5" width="9" height="9" fill="#cfcfcf" stroke="#222" stroke-width="0.8"/><g fill="#fff" stroke="#111" stroke-width="0.6"><rect x="1.5" y="1.5" width="3" height="3"/><rect x="11.5" y="1.5" width="3" height="3"/><rect x="1.5" y="11.5" width="3" height="3"/><rect x="11.5" y="11.5" width="3" height="3"/><rect x="6.5" y="1.5" width="3" height="3"/><rect x="6.5" y="11.5" width="3" height="3"/><rect x="1.5" y="6.5" width="3" height="3"/><rect x="11.5" y="6.5" width="3" height="3"/></g></svg>
<div class="btn dk" style="left:656.5px;top:1027px;width:34px;height:20px;border-radius:5px"></div>
<svg class="abs" style="left:660px;top:1029px" width="16" height="16" viewBox="0 0 16 16"><circle cx="8" cy="8" r="5.2" fill="#6a6a6a" stroke="#8a8a8a" stroke-width="1"/><circle cx="8" cy="8" r="2" fill="#9a9a9a"/></svg>
<svg class="abs" style="left:680px;top:1031px" width="7" height="13" viewBox="0 0 7 13"><path d="M3.5 0.5 L6.8 5.3 H0.2 Z M3.5 12.5 L6.8 7.7 H0.2 Z" fill="#a5a5a5"/></svg>
<div class="btn dk" style="left:696.5px;top:1027px;width:145px;height:20px;border-radius:5px"></div>
<div class="abs" style="left:697.5px;top:1028px;width:18px;height:18px;background:linear-gradient(#b0b0b0,#949494);border-radius:4px 0 0 4px"></div>
<div class="abs" style="left:715.5px;top:1028px;width:1px;height:18px;background:#2b2b2b;"></div>
<div class="abs" style="left:751px;top:1028px;width:1px;height:18px;background:#2b2b2b;"></div>
<div class="abs" style="left:821.5px;top:1028px;width:1px;height:18px;background:#2b2b2b;"></div>
<svg class="abs" style="left:699px;top:1029px" width="16" height="16" viewBox="0 0 16 16"><path d="M3 13 L9.5 5.5 C11 4 13.5 6 12 8 L6.5 14.5" fill="none" stroke="#555" stroke-width="3.6"/><path d="M3 13 L9.5 5.5 C11 4 13.5 6 12 8 L6.5 14.5" fill="none" stroke="#d8d8d8" stroke-width="1.8"/></svg>
<svg class="abs" style="left:718px;top:1029px" width="16" height="16" viewBox="0 0 16 16"><path d="M4 5 L9 3.4 L13 5 V11 L8.6 13.4 L4 11.4Z" fill="#9a9a9a" stroke="#222" stroke-width="0.8"/><path d="M4 5L8.6 6.8L13 5M8.6 6.8V13.4" stroke="#222" stroke-width="0.7" fill="none"/><path d="M4 5 L8.6 6.8 V13.4 L4 11.4Z" fill="#dcdcdc"/><g fill="#fff" stroke="#111" stroke-width="0.5"><rect x="1.5" y="2.5" width="2.6" height="2.6"/><rect x="1.5" y="10.5" width="2.6" height="2.6"/></g></svg>
<svg class="abs" style="left:739px;top:1031px" width="7" height="13" viewBox="0 0 7 13"><path d="M3.5 0.5 L6.8 5.3 H0.2 Z M3.5 12.5 L6.8 7.7 H0.2 Z" fill="#a5a5a5"/></svg>
<div class="t w" style="left:758px;top:1032px;letter-spacing:-0.530px;">Closest</div>
<svg class="abs" style="left:811px;top:1031px" width="7" height="13" viewBox="0 0 7 13"><path d="M3.5 0.5 L6.8 5.3 H0.2 Z M3.5 12.5 L6.8 7.7 H0.2 Z" fill="#a5a5a5"/></svg>
<svg class="abs" style="left:823.5px;top:1029px" width="16" height="16" viewBox="0 0 16 16"><circle cx="8" cy="8" r="4.6" fill="#e0e0e0" stroke="#222" stroke-width="0.8"/><g fill="#fff" stroke="#111" stroke-width="0.6"><rect x="1.5" y="1.5" width="3" height="3"/><rect x="11.5" y="1.5" width="3" height="3"/><rect x="1.5" y="11.5" width="3" height="3"/><rect x="11.5" y="11.5" width="3" height="3"/><rect x="6.5" y="1" width="3" height="3"/><rect x="6.5" y="12" width="3" height="3"/><rect x="1" y="6.5" width="3" height="3"/><rect x="12" y="6.5" width="3" height="3"/></g></svg>
<div class="btn lt" style="left:848px;top:1027px;width:19px;height:20px;border-radius:5px"></div>
<svg class="abs" style="left:849.5px;top:1029px" width="16" height="16" viewBox="0 0 16 16"><path d="M2 14L7 9M14 2L9 7" stroke="#222" stroke-width="2.6"/><path d="M2 14L7 9M14 2L9 7" stroke="#f4f4f4" stroke-width="1.2"/><path d="M4 8.5L7.5 8.5L7.5 12Z M8.5 4 L8.5 7.5 L12 7.5Z" fill="#f4f4f4" stroke="#222" stroke-width="0.6"/><rect x="11.5" y="1.5" width="3" height="3" fill="#f0a040" stroke="#5a3000" stroke-width="0.5"/></svg>
<div class="btn lt" style="left:872.5px;top:1027px;width:39px;height:20px;border-radius:5px"></div>
<div class="abs" style="left:891.5px;top:1028px;width:1px;height:18px;background:#2b2b2b;"></div>
<svg class="abs" style="left:874px;top:1029px" width="16" height="16" viewBox="0 0 16 16"><rect x="1.2" y="3.6" width="13.6" height="10" rx="1" fill="#e4e4e4" stroke="#111" stroke-width="1"/><rect x="3" y="1.8" width="4.4" height="2.2" fill="#ddd" stroke="#111" stroke-width="0.8"/><rect x="2.2" y="5.6" width="11.6" height="6.4" fill="#3a3a3a"/><circle cx="9.3" cy="8.8" r="3.5" fill="#555" stroke="#ccc" stroke-width="0.9"/><circle cx="9.3" cy="8.8" r="2" fill="#7a2820"/><circle cx="8.7" cy="8" r="0.9" fill="#2c4c9c"/><rect x="3" y="5" width="1.4" height="1.2" fill="#e02020"/></svg>
<svg class="abs" style="left:884px;top:1029px" width="6" height="6" viewBox="0 0 6 6"><path d="M3 0v6M0 3h6" stroke="#f8e060" stroke-width="1.6"/></svg>
<svg class="abs" style="left:893px;top:1029px" width="17" height="16" viewBox="0 0 17 16"><path d="M2 6.5H15V14H2Z" fill="#f0f0f0" stroke="#111" stroke-width="0.9"/><path d="M2 6 L14.5 2 L15 4.2 L2.6 8Z" fill="#222" stroke="#111" stroke-width="0.6"/><path d="M5 5.2l1.6 1.6M8.4 4.2l1.6 1.6M11.8 3.2l1.6 1.6" stroke="#fff" stroke-width="1.2"/><path d="M2.5 9.5H14.5M2.5 11.8H14.5" stroke="#222" stroke-width="1.2"/></svg>
<div class="abs" style="left:1263px;top:27px;width:1px;height:1023px;background:#0a0a0a;"></div>
<div class="abs" style="left:1264px;top:27px;width:336px;height:181px;background:#757575;"></div>
<div class="abs" style="left:1264px;top:64px;width:319px;height:20px;background:#707070;"></div>
<div class="abs" style="left:1264px;top:104px;width:319px;height:20px;background:#707070;"></div>
<div class="abs" style="left:1264px;top:144px;width:319px;height:20px;background:#707070;"></div>
<div class="abs" style="left:1264px;top:184px;width:319px;height:20px;background:#707070;"></div>
<div class="abs" style="left:1523px;top:52px;width:1px;height:156px;background:#696969;"></div>
<div class="abs" style="left:1543.5px;top:52px;width:1px;height:156px;background:#696969;"></div>
<div class="abs" style="left:1563.5px;top:52px;width:1px;height:156px;background:#696969;"></div>
<svg class="abs" style="left:1272px;top:48px" width="12" height="12" viewBox="0 0 12 12"><circle cx="6" cy="6" r="3.9" fill="#ececec" stroke="#111" stroke-width="1"/><path d="M3.8 6h4.4" stroke="#111" stroke-width="1.2"/></svg>
<svg class="abs" style="left:1285px;top:44px" width="20" height="20" viewBox="0 0 20 20"><circle cx="10" cy="10" r="9" fill="#e08a48" opacity="0.6"/></svg>
<svg class="abs" style="left:1286px;top:46px" width="16" height="16" viewBox="0 0 16 16"><path d="M6.5 4 L11 2.3 L15 3.6 V9.6 L11 11.6 L6.5 9.8 Z" fill="#e4e4e4" stroke="#1a1a1a" stroke-width="0.9"/><path d="M6.5 4 L10.8 5.6 L15 3.6 M10.8 5.6V11.6" stroke="#1a1a1a" stroke-width="0.8" fill="none"/><path d="M10.8 5.6 L15 3.6 V9.6 L10.8 11.6Z" fill="#a8a8a8"/><circle cx="5" cy="10.6" r="3.8" fill="#f0f0f0" stroke="#1a1a1a" stroke-width="0.9"/></svg>
<div class="t " style="left:1305.5px;top:49px;letter-spacing:-0.424px;">islands</div>
<svg class="abs" style="left:1526px;top:46px" width="16" height="16" viewBox="0 0 16 16"><path d="M1 8 C3.5 3.6 12.5 3.6 15 8 C12.5 12.4 3.5 12.4 1 8Z" fill="#f4f4f4" stroke="#222" stroke-width="0.9"/><circle cx="8" cy="7.4" r="2.6" fill="#777"/><circle cx="8" cy="7.4" r="1.3" fill="#111"/></svg><svg class="abs" style="left:1546.5px;top:46px" width="16" height="16" viewBox="0 0 16 16"><path d="M5 1.5 L5 12 L7.4 9.9 L9.4 14.4 L10.9 13.7 L8.9 9.3 L12 9.3 Z" fill="#f4f4f4" stroke="#111" stroke-width="1" stroke-linejoin="round"/></svg><svg class="abs" style="left:1566.5px;top:47.5px" width="14" height="14" viewBox="0 0 16 16"><rect x="1.2" y="3.6" width="13.6" height="10" rx="1" fill="#e4e4e4" stroke="#111" stroke-width="1"/><rect x="3" y="1.8" width="4.4" height="2.2" fill="#ddd" stroke="#111" stroke-width="0.8"/><rect x="2.2" y="5.6" width="11.6" height="6.4" fill="#3a3a3a"/><circle cx="9.3" cy="8.8" r="3.5" fill="#555" stroke="#ccc" stroke-width="0.9"/><circle cx="9.3" cy="8.8" r="2" fill="#7a2820"/><circle cx="8.7" cy="8" r="0.9" fill="#2c4c9c"/><rect x="3" y="5" width="1.4" height="1.2" fill="#e02020"/></svg>
<svg class="abs" style="left:1290px;top:60px" width="20" height="16" viewBox="0 0 20 16"><path d="M1.5 0V13.5H18" stroke="#2a2a2a" stroke-width="1" fill="none"/></svg>
<svg class="abs" style="left:1286.5px;top:67.5px" width="12" height="12" viewBox="0 0 12 12"><circle cx="6" cy="6" r="3.9" fill="#ececec" stroke="#111" stroke-width="1"/><path d="M3.8 6h4.4" stroke="#111" stroke-width="1.2"/><path d="M6 3.8v4.4" stroke="#111" stroke-width="1.2"/></svg>
<svg class="abs" style="left:1304px;top:64px" width="20" height="20" viewBox="0 0 20 20"><circle cx="10" cy="10" r="9" fill="#e08a48" opacity="0.6"/></svg>
<svg class="abs" style="left:1306.5px;top:66.5px" width="14.5" height="14.5" viewBox="0 0 16 16"><path d="M2.5 3 H13.5 L8 14 Z" fill="none" stroke="#e8861c" stroke-width="2.9" stroke-linejoin="round"/><path d="M2.5 3 H13.5 L8 14 Z" fill="none" stroke="#fdf6ea" stroke-width="1.7" stroke-linejoin="round"/><circle cx="2.5" cy="3" r="1.3" fill="#f6dcc0"/><circle cx="13.5" cy="3" r="1.3" fill="#f6dcc0"/><circle cx="8" cy="14" r="1.3" fill="#f6dcc0"/></svg>
<div class="t w" style="left:1325.5px;top:69px;letter-spacing:-0.430px;">Plane.011</div>
<div class="abs" style="left:1386.5px;top:67px;width:1.5px;height:13px;background:#3a3a3a;"></div>
<svg class="abs" style="left:1394.5px;top:64px" width="20" height="20" viewBox="0 0 20 20"><circle cx="10" cy="10" r="9.4" fill="#aaaaaa"/></svg>
<svg class="abs" style="left:1396.5px;top:66px" width="16" height="16" viewBox="0 0 16 16"><path d="M2.5 3 H13.5 L8 14 Z M8 7 L2.5 3 M8 7 L13.5 3 M8 7V14" fill="none" stroke="#555" stroke-width="1"/><circle cx="2.5" cy="3" r="1.5" fill="#eee" stroke="#444" stroke-width="0.6"/><circle cx="13.5" cy="3" r="1.5" fill="#eee" stroke="#444" stroke-width="0.6"/><circle cx="8" cy="14" r="1.5" fill="#eee" stroke="#444" stroke-width="0.6"/><circle cx="8" cy="7" r="1.3" fill="#eee" stroke="#444" stroke-width="0.6"/></svg>
<svg class="abs" style="left:1418px;top:66px" width="16" height="16" viewBox="0 0 16 16"><path d="M2.2 13.8 C1.3 12.9 1.6 12 2.3 11.3 L8 5.8 C7.4 3.6 9 1.3 12 1.4 L10.3 3.6 L11 5.2 L12.8 5.6 L14.6 3.8 C15 6.6 12.8 8.6 10.3 8 L4.7 13.6 C4 14.4 3 14.6 2.2 13.8Z" fill="#5b93e0" stroke="#173a78" stroke-width="0.9" stroke-linejoin="round"/></svg>
<svg class="abs" style="left:1526px;top:66px" width="16" height="16" viewBox="0 0 16 16"><path d="M1 8 C3.5 3.6 12.5 3.6 15 8 C12.5 12.4 3.5 12.4 1 8Z" fill="#f4f4f4" stroke="#222" stroke-width="0.9"/><circle cx="8" cy="7.4" r="2.6" fill="#777"/><circle cx="8" cy="7.4" r="1.3" fill="#111"/></svg><svg class="abs" style="left:1546.5px;top:66px" width="16" height="16" viewBox="0 0 16 16"><path d="M5 1.5 L5 12 L7.4 9.9 L9.4 14.4 L10.9 13.7 L8.9 9.3 L12 9.3 Z" fill="#f4f4f4" stroke="#111" stroke-width="1" stroke-linejoin="round"/></svg><svg class="abs" style="left:1566.5px;top:67.5px" width="14" height="14" viewBox="0 0 16 16"><rect x="1.2" y="3.6" width="13.6" height="10" rx="1" fill="#e4e4e4" stroke="#111" stroke-width="1"/><rect x="3" y="1.8" width="4.4" height="2.2" fill="#ddd" stroke="#111" stroke-width="0.8"/><rect x="2.2" y="5.6" width="11.6" height="6.4" fill="#3a3a3a"/><circle cx="9.3" cy="8.8" r="3.5" fill="#555" stroke="#ccc" stroke-width="0.9"/><circle cx="9.3" cy="8.8" r="2" fill="#7a2820"/><circle cx="8.7" cy="8" r="0.9" fill="#2c4c9c"/><rect x="3" y="5" width="1.4" height="1.2" fill="#e02020"/></svg>
<svg class="abs" style="left:1271.5px;top:87.5px" width="12" height="12" viewBox="0 0 12 12"><circle cx="6" cy="6" r="3.9" fill="#ececec" stroke="#111" stroke-width="1"/><path d="M3.8 6h4.4" stroke="#111" stroke-width="1.2"/><path d="M6 3.8v4.4" stroke="#111" stroke-width="1.2"/></svg>
<svg class="abs" style="left:1286px;top:85.5px" width="16" height="16" viewBox="0 0 16 16"><path d="M6.5 4 L11 2.3 L15 3.6 V9.6 L11 11.6 L6.5 9.8 Z" fill="#e4e4e4" stroke="#1a1a1a" stroke-width="0.9"/><path d="M6.5 4 L10.8 5.6 L15 3.6 M10.8 5.6V11.6" stroke="#1a1a1a" stroke-width="0.8" fill="none"/><path d="M10.8 5.6 L15 3.6 V9.6 L10.8 11.6Z" fill="#a8a8a8"/><circle cx="5" cy="10.6" r="3.8" fill="#f0f0f0" stroke="#1a1a1a" stroke-width="0.9"/></svg>
<div class="t " style="left:1305.5px;top:89px;letter-spacing:-0.600px;">mountains_01</div>
<div class="abs" style="left:1386.5px;top:87px;width:1.5px;height:13px;background:#3a3a3a;"></div>
<svg class="abs" style="left:1397px;top:86.5px" width="16" height="16" viewBox="0 0 16 16"><path d="M2.5 3 H13.5 L8 14 Z" fill="none" stroke="#5a3a18" stroke-width="2.5" stroke-linejoin="round"/><path d="M2.5 3 H13.5 L8 14 Z" fill="none" stroke="#e8a468" stroke-width="1.3" stroke-linejoin="round"/><circle cx="2.5" cy="3" r="1.3" fill="#f6dcc0"/><circle cx="13.5" cy="3" r="1.3" fill="#f6dcc0"/><circle cx="8" cy="14" r="1.3" fill="#f6dcc0"/></svg>
<svg class="abs" style="left:1526px;top:86px" width="16" height="16" viewBox="0 0 16 16"><path d="M1 8 C3.5 3.6 12.5 3.6 15 8 C12.5 12.4 3.5 12.4 1 8Z" fill="#f4f4f4" stroke="#222" stroke-width="0.9"/><circle cx="8" cy="7.4" r="2.6" fill="#777"/><circle cx="8" cy="7.4" r="1.3" fill="#111"/></svg><svg class="abs" style="left:1546.5px;top:86px" width="16" height="16" viewBox="0 0 16 16"><path d="M5 1.5 L5 12 L7.4 9.9 L9.4 14.4 L10.9 13.7 L8.9 9.3 L12 9.3 Z" fill="#f4f4f4" stroke="#111" stroke-width="1" stroke-linejoin="round"/></svg><svg class="abs" style="left:1566.5px;top:87.5px" width="14" height="14" viewBox="0 0 16 16"><rect x="1.2" y="3.6" width="13.6" height="10" rx="1" fill="#e4e4e4" stroke="#111" stroke-width="1"/><rect x="3" y="1.8" width="4.4" height="2.2" fill="#ddd" stroke="#111" stroke-width="0.8"/><rect x="2.2" y="5.6" width="11.6" height="6.4" fill="#3a3a3a"/><circle cx="9.3" cy="8.8" r="3.5" fill="#555" stroke="#ccc" stroke-width="0.9"/><circle cx="9.3" cy="8.8" r="2" fill="#7a2820"/><circle cx="8.7" cy="8" r="0.9" fill="#2c4c9c"/><rect x="3" y="5" width="1.4" height="1.2" fill="#e02020"/></svg>
<svg class="abs" style="left:1271.5px;top:107.5px" width="12" height="12" viewBox="0 0 12 12"><circle cx="6" cy="6" r="3.9" fill="#ececec" stroke="#111" stroke-width="1"/><path d="M3.8 6h4.4" stroke="#111" stroke-width="1.2"/><path d="M6 3.8v4.4" stroke="#111" stroke-width="1.2"/></svg>
<svg class="abs" style="left:1286px;top:105.5px" width="16" height="16" viewBox="0 0 16 16"><path d="M6.5 4 L11 2.3 L15 3.6 V9.6 L11 11.6 L6.5 9.8 Z" fill="#e4e4e4" stroke="#1a1a1a" stroke-width="0.9"/><path d="M6.5 4 L10.8 5.6 L15 3.6 M10.8 5.6V11.6" stroke="#1a1a1a" stroke-width="0.8" fill="none"/><path d="M10.8 5.6 L15 3.6 V9.6 L10.8 11.6Z" fill="#a8a8a8"/><circle cx="5" cy="10.6" r="3.8" fill="#f0f0f0" stroke="#1a1a1a" stroke-width="0.9"/></svg>
<div class="t " style="left:1305.5px;top:109px;letter-spacing:-0.600px;">mountains_02</div>
<div class="abs" style="left:1386.5px;top:107px;width:1.5px;height:13px;background:#3a3a3a;"></div>
<svg class="abs" style="left:1397px;top:106.5px" width="16" height="16" viewBox="0 0 16 16"><path d="M2.5 3 H13.5 L8 14 Z" fill="none" stroke="#5a3a18" stroke-width="2.5" stroke-linejoin="round"/><path d="M2.5 3 H13.5 L8 14 Z" fill="none" stroke="#e8a468" stroke-width="1.3" stroke-linejoin="round"/><circle cx="2.5" cy="3" r="1.3" fill="#f6dcc0"/><circle cx="13.5" cy="3" r="1.3" fill="#f6dcc0"/><circle cx="8" cy="14" r="1.3" fill="#f6dcc0"/></svg>
<svg class="abs" style="left:1526px;top:106px" width="16" height="16" viewBox="0 0 16 16"><path d="M1 8 C3.5 3.6 12.5 3.6 15 8 C12.5 12.4 3.5 12.4 1 8Z" fill="#f4f4f4" stroke="#222" stroke-width="0.9"/><circle cx="8" cy="7.4" r="2.6" fill="#777"/><circle cx="8" cy="7.4" r="1.3" fill="#111"/></svg><svg class="abs" style="left:1546.5px;top:106px" width="16" height="16" viewBox="0 0 16 16"><path d="M5 1.5 L5 12 L7.4 9.9 L9.4 14.4 L10.9 13.7 L8.9 9.3 L12 9.3 Z" fill="#f4f4f4" stroke="#111" stroke-width="1" stroke-linejoin="round"/></svg><svg class="abs" style="left:1566.5px;top:107.5px" width="14" height="14" viewBox="0 0 16 16"><rect x="1.2" y="3.6" width="13.6" height="10" rx="1" fill="#e4e4e4" stroke="#111" stroke-width="1"/><rect x="3" y="1.8" width="4.4" height="2.2" fill="#ddd" stroke="#111" stroke-width="0.8"/><rect x="2.2" y="5.6" width="11.6" height="6.4" fill="#3a3a3a"/><circle cx="9.3" cy="8.8" r="3.5" fill="#555" stroke="#ccc" stroke-width="0.9"/><circle cx="9.3" cy="8.8" r="2" fill="#7a2820"/><circle cx="8.7" cy="8" r="0.9" fill="#2c4c9c"/><rect x="3" y="5" width="1.4" height="1.2" fill="#e02020"/></svg>
<svg class="abs" style="left:1271.5px;top:127.5px" width="12" height="12" viewBox="0 0 12 12"><circle cx="6" cy="6" r="3.9" fill="#ececec" stroke="#111" stroke-width="1"/><path d="M3.8 6h4.4" stroke="#111" stroke-width="1.2"/><path d="M6 3.8v4.4" stroke="#111" stroke-width="1.2"/></svg>
<svg class="abs" style="left:1286px;top:125.5px" width="16" height="16" viewBox="0 0 16 16"><path d="M6.5 4 L11 2.3 L15 3.6 V9.6 L11 11.6 L6.5 9.8 Z" fill="#e4e4e4" stroke="#1a1a1a" stroke-width="0.9"/><path d="M6.5 4 L10.8 5.6 L15 3.6 M10.8 5.6V11.6" stroke="#1a1a1a" stroke-width="0.8" fill="none"/><path d="M10.8 5.6 L15 3.6 V9.6 L10.8 11.6Z" fill="#a8a8a8"/><circle cx="5" cy="10.6" r="3.8" fill="#f0f0f0" stroke="#1a1a1a" stroke-width="0.9"/></svg>
<div class="t " style="left:1305.5px;top:129px;letter-spacing:-0.600px;">mountains_03</div>
<div class="abs" style="left:1386.5px;top:127px;width:1.5px;height:13px;background:#3a3a3a;"></div>
<svg class="abs" style="left:1397px;top:126.5px" width="16" height="16" viewBox="0 0 16 16"><path d="M2.5 3 H13.5 L8 14 Z" fill="none" stroke="#5a3a18" stroke-width="2.5" stroke-linejoin="round"/><path d="M2.5 3 H13.5 L8 14 Z" fill="none" stroke="#e8a468" stroke-width="1.3" stroke-linejoin="round"/><circle cx="2.5" cy="3" r="1.3" fill="#f6dcc0"/><circle cx="13.5" cy="3" r="1.3" fill="#f6dcc0"/><circle cx="8" cy="14" r="1.3" fill="#f6dcc0"/></svg>
<svg class="abs" style="left:1526px;top:126px" width="16" height="16" viewBox="0 0 16 16"><path d="M1 8 C3.5 3.6 12.5 3.6 15 8 C12.5 12.4 3.5 12.4 1 8Z" fill="#f4f4f4" stroke="#222" stroke-width="0.9"/><circle cx="8" cy="7.4" r="2.6" fill="#777"/><circle cx="8" cy="7.4" r="1.3" fill="#111"/></svg><svg class="abs" style="left:1546.5px;top:126px" width="16" height="16" viewBox="0 0 16 16"><path d="M5 1.5 L5 12 L7.4 9.9 L9.4 14.4 L10.9 13.7 L8.9 9.3 L12 9.3 Z" fill="#f4f4f4" stroke="#111" stroke-width="1" stroke-linejoin="round"/></svg><svg class="abs" style="left:1566.5px;top:127.5px" width="14" height="14" viewBox="0 0 16 16"><rect x="1.2" y="3.6" width="13.6" height="10" rx="1" fill="#e4e4e4" stroke="#111" stroke-width="1"/><rect x="3" y="1.8" width="4.4" height="2.2" fill="#ddd" stroke="#111" stroke-width="0.8"/><rect x="2.2" y="5.6" width="11.6" height="6.4" fill="#3a3a3a"/><circle cx="9.3" cy="8.8" r="3.5" fill="#555" stroke="#ccc" stroke-width="0.9"/><circle cx="9.3" cy="8.8" r="2" fill="#7a2820"/><circle cx="8.7" cy="8" r="0.9" fill="#2c4c9c"/><rect x="3" y="5" width="1.4" height="1.2" fill="#e02020"/></svg>
<svg class="abs" style="left:1271.5px;top:147.5px" width="12" height="12" viewBox="0 0 12 12"><circle cx="6" cy="6" r="3.9" fill="#ececec" stroke="#111" stroke-width="1"/><path d="M3.8 6h4.4" stroke="#111" stroke-width="1.2"/><path d="M6 3.8v4.4" stroke="#111" stroke-width="1.2"/></svg>
<svg class="abs" style="left:1286px;top:145.5px" width="16" height="16" viewBox="0 0 16 16"><path d="M6.5 4 L11 2.3 L15 3.6 V9.6 L11 11.6 L6.5 9.8 Z" fill="#e4e4e4" stroke="#1a1a1a" stroke-width="0.9"/><path d="M6.5 4 L10.8 5.6 L15 3.6 M10.8 5.6V11.6" stroke="#1a1a1a" stroke-width="0.8" fill="none"/><path d="M10.8 5.6 L15 3.6 V9.6 L10.8 11.6Z" fill="#a8a8a8"/><circle cx="5" cy="10.6" r="3.8" fill="#f0f0f0" stroke="#1a1a1a" stroke-width="0.9"/></svg>
<div class="t " style="left:1305.5px;top:149px;letter-spacing:-0.600px;">mountains_04</div>
<div class="abs" style="left:1386.5px;top:147px;width:1.5px;height:13px;background:#3a3a3a;"></div>
<svg class="abs" style="left:1397px;top:146.5px" width="16" height="16" viewBox="0 0 16 16"><path d="M2.5 3 H13.5 L8 14 Z" fill="none" stroke="#5a3a18" stroke-width="2.5" stroke-linejoin="round"/><path d="M2.5 3 H13.5 L8 14 Z" fill="none" stroke="#e8a468" stroke-width="1.3" stroke-linejoin="round"/><circle cx="2.5" cy="3" r="1.3" fill="#f6dcc0"/><circle cx="13.5" cy="3" r="1.3" fill="#f6dcc0"/><circle cx="8" cy="14" r="1.3" fill="#f6dcc0"/></svg>
<svg class="abs" style="left:1526px;top:146px" width="16" height="16" viewBox="0 0 16 16"><path d="M1 8 C3.5 3.6 12.5 3.6 15 8 C12.5 12.4 3.5 12.4 1 8Z" fill="#f4f4f4" stroke="#222" stroke-width="0.9"/><circle cx="8" cy="7.4" r="2.6" fill="#777"/><circle cx="8" cy="7.4" r="1.3" fill="#111"/></svg><svg class="abs" style="left:1546.5px;top:146px" width="16" height="16" viewBox="0 0 16 16"><path d="M5 1.5 L5 12 L7.4 9.9 L9.4 14.4 L10.9 13.7 L8.9 9.3 L12 9.3 Z" fill="#f4f4f4" stroke="#111" stroke-width="1" stroke-linejoin="round"/></svg><svg class="abs" style="left:1566.5px;top:147.5px" width="14" height="14" viewBox="0 0 16 16"><rect x="1.2" y="3.6" width="13.6" height="10" rx="1" fill="#e4e4e4" stroke="#111" stroke-width="1"/><rect x="3" y="1.8" width="4.4" height="2.2" fill="#ddd" stroke="#111" stroke-width="0.8"/><rect x="2.2" y="5.6" width="11.6" height="6.4" fill="#3a3a3a"/><circle cx="9.3" cy="8.8" r="3.5" fill="#555" stroke="#ccc" stroke-width="0.9"/><circle cx="9.3" cy="8.8" r="2" fill="#7a2820"/><circle cx="8.7" cy="8" r="0.9" fill="#2c4c9c"/><rect x="3" y="5" width="1.4" height="1.2" fill="#e02020"/></svg>
<svg class="abs" style="left:1271.5px;top:167.5px" width="12" height="12" viewBox="0 0 12 12"><circle cx="6" cy="6" r="3.9" fill="#ececec" stroke="#111" stroke-width="1"/><path d="M3.8 6h4.4" stroke="#111" stroke-width="1.2"/><path d="M6 3.8v4.4" stroke="#111" stroke-width="1.2"/></svg>
<svg class="abs" style="left:1286px;top:165.5px" width="16" height="16" viewBox="0 0 16 16"><path d="M6.5 4 L11 2.3 L15 3.6 V9.6 L11 11.6 L6.5 9.8 Z" fill="#e4e4e4" stroke="#1a1a1a" stroke-width="0.9"/><path d="M6.5 4 L10.8 5.6 L15 3.6 M10.8 5.6V11.6" stroke="#1a1a1a" stroke-width="0.8" fill="none"/><path d="M10.8 5.6 L15 3.6 V9.6 L10.8 11.6Z" fill="#a8a8a8"/><circle cx="5" cy="10.6" r="3.8" fill="#f0f0f0" stroke="#1a1a1a" stroke-width="0.9"/></svg>
<div class="t " style="left:1305.5px;top:169px;letter-spacing:-0.600px;">mountains_05</div>
<div class="abs" style="left:1386.5px;top:167px;width:1.5px;height:13px;background:#3a3a3a;"></div>
<svg class="abs" style="left:1397px;top:166.5px" width="16" height="16" viewBox="0 0 16 16"><path d="M2.5 3 H13.5 L8 14 Z" fill="none" stroke="#5a3a18" stroke-width="2.5" stroke-linejoin="round"/><path d="M2.5 3 H13.5 L8 14 Z" fill="none" stroke="#e8a468" stroke-width="1.3" stroke-linejoin="round"/><circle cx="2.5" cy="3" r="1.3" fill="#f6dcc0"/><circle cx="13.5" cy="3" r="1.3" fill="#f6dcc0"/><circle cx="8" cy="14" r="1.3" fill="#f6dcc0"/></svg>
<svg class="abs" style="left:1526px;top:166px" width="16" height="16" viewBox="0 0 16 16"><path d="M1 8 C3.5 3.6 12.5 3.6 15 8 C12.5 12.4 3.5 12.4 1 8Z" fill="#f4f4f4" stroke="#222" stroke-width="0.9"/><circle cx="8" cy="7.4" r="2.6" fill="#777"/><circle cx="8" cy="7.4" r="1.3" fill="#111"/></svg><svg class="abs" style="left:1546.5px;top:166px" width="16" height="16" viewBox="0 0 16 16"><path d="M5 1.5 L5 12 L7.4 9.9 L9.4 14.4 L10.9 13.7 L8.9 9.3 L12 9.3 Z" fill="#f4f4f4" stroke="#111" stroke-width="1" stroke-linejoin="round"/></svg><svg class="abs" style="left:1566.5px;top:167.5px" width="14" height="14" viewBox="0 0 16 16"><rect x="1.2" y="3.6" width="13.6" height="10" rx="1" fill="#e4e4e4" stroke="#111" stroke-width="1"/><rect x="3" y="1.8" width="4.4" height="2.2" fill="#ddd" stroke="#111" stroke-width="0.8"/><rect x="2.2" y="5.6" width="11.6" height="6.4" fill="#3a3a3a"/><circle cx="9.3" cy="8.8" r="3.5" fill="#555" stroke="#ccc" stroke-width="0.9"/><circle cx="9.3" cy="8.8" r="2" fill="#7a2820"/><circle cx="8.7" cy="8" r="0.9" fill="#2c4c9c"/><rect x="3" y="5" width="1.4" height="1.2" fill="#e02020"/></svg>
<svg class="abs" style="left:1271.5px;top:187.5px" width="12" height="12" viewBox="0 0 12 12"><circle cx="6" cy="6" r="3.9" fill="#ececec" stroke="#111" stroke-width="1"/><path d="M3.8 6h4.4" stroke="#111" stroke-width="1.2"/><path d="M6 3.8v4.4" stroke="#111" stroke-width="1.2"/></svg>
<svg class="abs" style="left:1286px;top:185.5px" width="16" height="16" viewBox="0 0 16 16"><path d="M6.5 4 L11 2.3 L15 3.6 V9.6 L11 11.6 L6.5 9.8 Z" fill="#e4e4e4" stroke="#1a1a1a" stroke-width="0.9"/><path d="M6.5 4 L10.8 5.6 L15 3.6 M10.8 5.6V11.6" stroke="#1a1a1a" stroke-width="0.8" fill="none"/><path d="M10.8 5.6 L15 3.6 V9.6 L10.8 11.6Z" fill="#a8a8a8"/><circle cx="5" cy="10.6" r="3.8" fill="#f0f0f0" stroke="#1a1a1a" stroke-width="0.9"/></svg>
<div class="t " style="left:1305.5px;top:189px;letter-spacing:-0.600px;">mountains_06</div>
<div class="abs" style="left:1386.5px;top:187px;width:1.5px;height:13px;background:#3a3a3a;"></div>
<svg class="abs" style="left:1397px;top:186.5px" width="16" height="16" viewBox="0 0 16 16"><path d="M2.5 3 H13.5 L8 14 Z" fill="none" stroke="#5a3a18" stroke-width="2.5" stroke-linejoin="round"/><path d="M2.5 3 H13.5 L8 14 Z" fill="none" stroke="#e8a468" stroke-width="1.3" stroke-linejoin="round"/><circle cx="2.5" cy="3" r="1.3" fill="#f6dcc0"/><circle cx="13.5" cy="3" r="1.3" fill="#f6dcc0"/><circle cx="8" cy="14" r="1.3" fill="#f6dcc0"/></svg>
<svg class="abs" style="left:1526px;top:186px" width="16" height="16" viewBox="0 0 16 16"><path d="M1 8 C3.5 3.6 12.5 3.6 15 8 C12.5 12.4 3.5 12.4 1 8Z" fill="#f4f4f4" stroke="#222" stroke-width="0.9"/><circle cx="8" cy="7.4" r="2.6" fill="#777"/><circle cx="8" cy="7.4" r="1.3" fill="#111"/></svg><svg class="abs" style="left:1546.5px;top:186px" width="16" height="16" viewBox="0 0 16 16"><path d="M5 1.5 L5 12 L7.4 9.9 L9.4 14.4 L10.9 13.7 L8.9 9.3 L12 9.3 Z" fill="#f4f4f4" stroke="#111" stroke-width="1" stroke-linejoin="round"/></svg><svg class="abs" style="left:1566.5px;top:187.5px" width="14" height="14" viewBox="0 0 16 16"><rect x="1.2" y="3.6" width="13.6" height="10" rx="1" fill="#e4e4e4" stroke="#111" stroke-width="1"/><rect x="3" y="1.8" width="4.4" height="2.2" fill="#ddd" stroke="#111" stroke-width="0.8"/><rect x="2.2" y="5.6" width="11.6" height="6.4" fill="#3a3a3a"/><circle cx="9.3" cy="8.8" r="3.5" fill="#555" stroke="#ccc" stroke-width="0.9"/><circle cx="9.3" cy="8.8" r="2" fill="#7a2820"/><circle cx="8.7" cy="8" r="0.9" fill="#2c4c9c"/><rect x="3" y="5" width="1.4" height="1.2" fill="#e02020"/></svg>
<svg class="abs" style="left:1286px;top:205.5px" width="16" height="4" viewBox="0 0 16 4"><circle cx="5" cy="6" r="3.8" fill="#f0f0f0" stroke="#1a1a1a" stroke-width="0.9"/></svg>
<svg class="abs" style="left:1397px;top:205.5px" width="16" height="3" viewBox="0 0 16 3"><path d="M2.5 1.5H13.5" stroke="#e89a50" stroke-width="1.6"/></svg>
<div class="abs" style="left:1583px;top:58px;width:13px;height:145px;background:linear-gradient(90deg,#5a5a5a,#666);border-radius:6.5px"></div>
<div class="abs" style="left:1584px;top:63px;width:11px;height:74px;background:linear-gradient(90deg,#8e8e8e,#7c7c7c);border-radius:5.5px;border:1px solid #5a5a5a"></div>
<div class="abs" style="left:1264px;top:27px;width:336px;height:25px;background:#727272;"></div>
<div class="abs" style="left:1264px;top:52px;width:336px;height:1px;background:#6a6a6a;"></div>
<div class="btn dk" style="left:1273px;top:30.5px;width:30px;height:19px;"></div>
<svg class="abs" style="left:1277px;top:32px" width="16" height="16" viewBox="0 0 16 16"><rect x="1" y="1.5" width="6" height="2.6" fill="#f09020" stroke="#7a4000" stroke-width="0.5"/><path d="M3.5 4.5v8.5h3M3.5 8h3" stroke="#b8c8f0" stroke-width="1.1" fill="none"/><rect x="7" y="6.8" width="6" height="2.4" fill="#f4f4f4" stroke="#333" stroke-width="0.5"/><rect x="7" y="11.8" width="6" height="2.4" fill="#f4f4f4" stroke="#333" stroke-width="0.5"/></svg>
<svg class="abs" style="left:1293.5px;top:34px" width="7" height="13" viewBox="0 0 7 13"><path d="M3.5 0.5 L6.8 5.3 H0.2 Z M3.5 12.5 L6.8 7.7 H0.2 Z" fill="#a5a5a5"/></svg>
<div class="t " style="left:1316px;top:35px;letter-spacing:-0.387px;">View</div>
<div class="t " style="left:1360px;top:35px;letter-spacing:-0.538px;">Search</div>
<div class="btn dk" style="left:1407px;top:30.5px;width:119px;height:19px;border-radius:5px"></div>
<div class="t w" style="left:1415px;top:35px;letter-spacing:-0.608px;">Groups</div>
<svg class="abs" style="left:1515.5px;top:34px" width="7" height="13" viewBox="0 0 7 13"><path d="M3.5 0.5 L6.8 5.3 H0.2 Z M3.5 12.5 L6.8 7.7 H0.2 Z" fill="#a5a5a5"/></svg>
<div class="btn fld" style="left:1531.5px;top:30.5px;width:80px;height:19px;border-radius:5px"></div>
<svg class="abs" style="left:1536px;top:32px" width="16" height="16" viewBox="0 0 16 16"><path d="M2 14.5 L7 9" stroke="#5a2c08" stroke-width="3.2" stroke-linecap="round"/><path d="M2 14.5 L7 9" stroke="#d8813c" stroke-width="1.8" stroke-linecap="round"/><circle cx="10" cy="5.6" r="4.6" fill="#d8c8cc" stroke="#1a1a1a" stroke-width="1.2"/><circle cx="10" cy="5.6" r="3.7" fill="none" stroke="#f4f4f4" stroke-width="0.8"/><circle cx="8.6" cy="4.2" r="1.2" fill="#fff"/></svg>
<svg class="abs" style="left:1586px;top:27px" width="14" height="14" viewBox="0 0 14 14"><path d="M1 0L14 13M5 0L14 9M9 0L14 5" stroke="#333" stroke-width="1"/><path d="M2.4 0L14 11.6M6.4 0L14 7.6M10.4 0L14 3.6" stroke="#9c9c9c" stroke-width="0.9"/></svg>
<svg class="abs" style="left:1264px;top:194px" width="14" height="14" viewBox="0 0 14 14"><path d="M0 1L13 14M0 5L9 14M0 9L5 14" stroke="#333" stroke-width="1"/><path d="M0 2.4L11.6 14M0 6.4L7.6 14M0 10.4L3.6 14" stroke="#9c9c9c" stroke-width="0.9"/></svg>
<div class="abs" style="left:1264px;top:208px;width:336px;height:1px;background:#0a0a0a;"></div>
<div class="abs" style="left:1264px;top:209px;width:336px;height:841px;background:#727272;"></div>
<div class="abs" style="left:1264px;top:234.5px;width:336px;height:1px;background:#666;"></div>
<div class="abs" style="left:1264px;top:209px;width:1px;height:841px;background:#848484;"></div>
<div class="btn dk" style="left:1273px;top:212.5px;width:30px;height:19px;"></div>
<svg class="abs" style="left:1277px;top:214px" width="16" height="16" viewBox="0 0 16 16"><rect x="1" y="2" width="13" height="4.6" rx="2.2" fill="#f0f0f0" stroke="#222" stroke-width="0.8"/><rect x="2.4" y="3.3" width="6" height="2" fill="#666"/><rect x="1" y="9.2" width="13" height="4.6" rx="2.2" fill="#f0f0f0" stroke="#222" stroke-width="0.8"/><path d="M3 11.5l2-1.5v3zM12 11.5l-2-1.5v3z" fill="#222"/><rect x="5.5" y="10.6" width="4" height="1.8" fill="#666"/></svg>
<svg class="abs" style="left:1294px;top:216px" width="7" height="13" viewBox="0 0 7 13"><path d="M3.5 0.5 L6.8 5.3 H0.2 Z M3.5 12.5 L6.8 7.7 H0.2 Z" fill="#a5a5a5"/></svg>
<div class="btn dk" style="left:1311.3px;top:212.5px;width:239.5px;height:19px;border-radius:5px;background:linear-gradient(#454545,#585858)"></div>
<div class="abs" style="left:1331.2px;top:213.5px;width:1px;height:17px;background:#2b2b2b;"></div>
<div class="abs" style="left:1351.1px;top:213.5px;width:1px;height:17px;background:#2b2b2b;"></div>
<div class="abs" style="left:1371px;top:213.5px;width:1px;height:17px;background:#2b2b2b;"></div>
<div class="abs" style="left:1390.9px;top:213.5px;width:1px;height:17px;background:#2b2b2b;"></div>
<div class="abs" style="left:1410.8px;top:213.5px;width:1px;height:17px;background:#2b2b2b;"></div>
<div class="abs" style="left:1430.7px;top:213.5px;width:1px;height:17px;background:#2b2b2b;"></div>
<div class="abs" style="left:1450.6px;top:213.5px;width:1px;height:17px;background:#2b2b2b;"></div>
<div class="abs" style="left:1470.5px;top:213.5px;width:1px;height:17px;background:#2b2b2b;"></div>
<div class="abs" style="left:1490.4px;top:213.5px;width:1px;height:17px;background:#2b2b2b;"></div>
<div class="abs" style="left:1510.3px;top:213.5px;width:1px;height:17px;background:#2b2b2b;"></div>
<div class="abs" style="left:1530.2px;top:213.5px;width:1px;height:17px;background:#2b2b2b;"></div>
<div class="abs" style="left:1431.7px;top:213.5px;width:18.9px;height:17px;background:#5680c2;"></div>
<svg class="abs" style="opacity:0.78;left:1313px;top:214px" width="16" height="16" viewBox="0 0 16 16"><rect x="1.2" y="3.6" width="13.6" height="10" rx="1" fill="#e4e4e4" stroke="#111" stroke-width="1"/><rect x="3" y="1.8" width="4.4" height="2.2" fill="#ddd" stroke="#111" stroke-width="0.8"/><rect x="2.2" y="5.6" width="11.6" height="6.4" fill="#3a3a3a"/><circle cx="9.3" cy="8.8" r="3.5" fill="#555" stroke="#ccc" stroke-width="0.9"/><circle cx="9.3" cy="8.8" r="2" fill="#7a2820"/><circle cx="8.7" cy="8" r="0.9" fill="#2c4c9c"/><rect x="3" y="5" width="1.4" height="1.2" fill="#e02020"/></svg>
<svg class="abs" style="opacity:0.78;left:1332.9px;top:214px" width="16" height="16" viewBox="0 0 16 16"><rect x="5" y="4" width="9" height="9" fill="#d8d0b0" stroke="#222" stroke-width="0.7" transform="rotate(12 9 9)"/><rect x="2" y="2" width="9.5" height="9.5" fill="#e8e8e8" stroke="#222" stroke-width="0.8"/><rect x="3.5" y="3.5" width="6.5" height="6.5" fill="#6a94d8"/><rect x="5.5" y="4.5" width="2.4" height="4.5" fill="#e8d890"/></svg>
<svg class="abs" style="opacity:0.78;left:1352.8px;top:214px" width="16" height="16" viewBox="0 0 16 16"><circle cx="3.2" cy="3.2" r="2" fill="#e6ea80" stroke="#8a9030" stroke-width="0.6"/><rect x="8.2" y="3" width="5.2" height="9" rx="2" fill="#4a86d8" stroke="#1c3c70" stroke-width="0.7"/><ellipse cx="10.8" cy="3.6" rx="2.6" ry="1.2" fill="#a9c8f2"/><circle cx="5.8" cy="11" r="3.6" fill="#e9e9e9" stroke="#222" stroke-width="0.8"/></svg>
<svg class="abs" style="opacity:0.78;left:1372.7px;top:214px" width="16" height="16" viewBox="0 0 16 16"><circle cx="8" cy="8" r="6.4" fill="#4a78c8" stroke="#1a2a4a" stroke-width="0.8"/><path d="M4 5C6 3 8 4 7.5 6.5C7 8.5 5 8 4.5 10C3 9 2.5 6.5 4 5ZM10 6C12 5.5 13.5 7 13 9.5C12 11.5 10.5 12.5 9.5 11C9 9.5 9 7 10 6Z" fill="#5aa848"/><circle cx="6" cy="5.4" r="1.6" fill="#fff" opacity="0.45"/></svg>
<svg class="abs" style="opacity:0.78;left:1392.6px;top:214px" width="16" height="16" viewBox="0 0 16 16"><path d="M2 4.6 L8 2 L14 4.6 V11.4 L8 14.2 L2 11.4 Z" fill="#d89a58" stroke="#5a3408" stroke-width="1"/><path d="M2 4.6 L8 7 L14 4.6 L8 2Z" fill="#e8b880"/><path d="M8 7V14.2L14 11.4V4.6Z" fill="#b87838"/><path d="M2 4.6 L8 7 L14 4.6 M8 7V14.2" fill="none" stroke="#fff4dc" stroke-width="0.8"/><path d="M2 4.6 L8 2 L14 4.6 V11.4 L8 14.2 L2 11.4 Z" fill="none" stroke="#5a3408" stroke-width="1"/></svg>
<svg class="abs" style="opacity:0.78;left:1412.5px;top:214px" width="16" height="16" viewBox="0 0 16 16"><g fill="none" stroke="#333" stroke-width="3"><rect x="1.8" y="7.5" width="7.4" height="5" rx="2.5" transform="rotate(-40 5.5 10)"/><rect x="6.8" y="3.5" width="7.4" height="5" rx="2.5" transform="rotate(-40 10.5 6)"/></g><g fill="none" stroke="#d0d0d0" stroke-width="1.5"><rect x="1.8" y="7.5" width="7.4" height="5" rx="2.5" transform="rotate(-40 5.5 10)"/><rect x="6.8" y="3.5" width="7.4" height="5" rx="2.5" transform="rotate(-40 10.5 6)"/></g></svg>
<svg class="abs" style="left:1432.4px;top:214px" width="16" height="16" viewBox="0 0 16 16"><path d="M2.2 13.8 C1.3 12.9 1.6 12 2.3 11.3 L8 5.8 C7.4 3.6 9 1.3 12 1.4 L10.3 3.6 L11 5.2 L12.8 5.6 L14.6 3.8 C15 6.6 12.8 8.6 10.3 8 L4.7 13.6 C4 14.4 3 14.6 2.2 13.8Z" fill="#dfeaff" stroke="#17346e" stroke-width="0.9" stroke-linejoin="round"/></svg>
<svg class="abs" style="opacity:0.78;left:1452.3px;top:214px" width="16" height="16" viewBox="0 0 16 16"><path d="M2.5 3.5H13.5L8 13.5Z" fill="none" stroke="#1a1a1a" stroke-width="1.1"/><g fill="#e8e8e8" stroke="#222" stroke-width="0.5"><circle cx="2.5" cy="3.5" r="1.4"/><circle cx="13.5" cy="3.5" r="1.4"/><circle cx="8" cy="13.5" r="1.4"/></g></svg>
<svg class="abs" style="opacity:0.78;left:1472.2px;top:214px" width="16" height="16" viewBox="0 0 16 16"><circle cx="8" cy="8" r="6" fill="#9a8a88" stroke="#333" stroke-width="0.8"/><path d="M8 2A6 6 0 0 1 14 8H8Z" fill="#c05040" opacity="0.7"/><path d="M8 14A6 6 0 0 1 2 8H8Z" fill="#555" opacity="0.7"/><circle cx="6" cy="6" r="2" fill="#fff" opacity="0.5"/></svg>
<svg class="abs" style="opacity:0.78;left:1492.1px;top:214px" width="16" height="16" viewBox="0 0 16 16"><rect x="2" y="2" width="12" height="12" fill="#e8e0e0" stroke="#333" stroke-width="0.8"/><g fill="#b03028"><rect x="2" y="2" width="3" height="3"/><rect x="8" y="2" width="3" height="3"/><rect x="5" y="5" width="3" height="3"/><rect x="11" y="5" width="3" height="3"/><rect x="2" y="8" width="3" height="3"/><rect x="8" y="8" width="3" height="3"/><rect x="5" y="11" width="3" height="3"/><rect x="11" y="11" width="3" height="3"/></g></svg>
<svg class="abs" style="opacity:0.78;left:1512px;top:214px" width="16" height="16" viewBox="0 0 16 16"><g fill="#f0e6a0" stroke="#6a5a10" stroke-width="0.3"><path d="M4.5 0.5l.9 3.1 3.1.9-3.1.9-.9 3.1-.9-3.1-3.1-.9 3.1-.9z"/><path d="M11.5 2l.8 2.7 2.7.8-2.7.8-.8 2.7-.8-2.7-2.7-.8 2.7-.8z"/><path d="M5 8.5l.8 2.7 2.7.8-2.7.8-.8 2.7-.8-2.7-2.7-.8 2.7-.8z"/><path d="M11.8 9.5l.6 2.1 2.1.6-2.1.6-.6 2.1-.6-2.1-2.1-.6 2.1-.6z"/></g></svg>
<svg class="abs" style="opacity:0.78;left:1531.9px;top:214px" width="16" height="16" viewBox="0 0 16 16"><path d="M2 8.5L5.5 13L10.5 5" fill="none" stroke="#5c80c0" stroke-width="2.4"/><circle cx="11.6" cy="4.6" r="3.2" fill="#aaa" stroke="#555" stroke-width="0.6"/><circle cx="10.8" cy="3.8" r="1" fill="#ddd"/></svg>
<svg class="abs" style="left:1586px;top:209px" width="14" height="14" viewBox="0 0 14 14"><path d="M1 0L14 13M5 0L14 9M9 0L14 5" stroke="#333" stroke-width="1"/><path d="M2.4 0L14 11.6M6.4 0L14 7.6M10.4 0L14 3.6" stroke="#9c9c9c" stroke-width="0.9"/></svg>
<svg class="abs" style="left:1273px;top:245px" width="16" height="16" viewBox="0 0 16 16"><path d="M0.8 15.2 L6 10" stroke="#111" stroke-width="2.4" stroke-linecap="round"/><path d="M1 15 L6 10" stroke="#e8e8e8" stroke-width="1"/><path d="M3.4 8.4 L7.6 12.6 L10.6 9.4 L6.6 5.4 Z" fill="#dcdcdc" stroke="#111" stroke-width="1" stroke-linejoin="round"/><path d="M6.8 4.6 L11.4 9.2 L15.2 5.4 L10.6 0.8 Z" fill="#f4f4f4" stroke="#111" stroke-width="1" stroke-linejoin="round"/><path d="M8.4 5 L11.2 7.8" stroke="#999" stroke-width="0.8"/></svg>
<svg class="abs" style="left:1296.5px;top:245px" width="16" height="16" viewBox="0 0 16 16"><circle cx="3.2" cy="3.2" r="2" fill="#e6ea80" stroke="#8a9030" stroke-width="0.6"/><rect x="8.2" y="3" width="5.2" height="9" rx="2" fill="#4a86d8" stroke="#1c3c70" stroke-width="0.7"/><ellipse cx="10.8" cy="3.6" rx="2.6" ry="1.2" fill="#a9c8f2"/><circle cx="5.8" cy="11" r="3.6" fill="#e9e9e9" stroke="#222" stroke-width="0.8"/></svg>
<svg class="abs" style="left:1316px;top:249px" width="6" height="8" viewBox="0 0 6 8"><path d="M1 0.5L5 4L1 7.5Z" fill="#4a4a4a"/></svg>
<svg class="abs" style="left:1336.5px;top:245px" width="16" height="16" viewBox="0 0 16 16"><path d="M2 4.6 L8 2 L14 4.6 V11.4 L8 14.2 L2 11.4 Z" fill="#f0a850" stroke="#5a3408" stroke-width="1"/><path d="M2 4.6 L8 7 L14 4.6 L8 2Z" fill="#f8c880"/><path d="M8 7V14.2L14 11.4V4.6Z" fill="#d88830"/><path d="M2 4.6 L8 7 L14 4.6 M8 7V14.2" fill="none" stroke="#fff4dc" stroke-width="0.8"/><path d="M2 4.6 L8 2 L14 4.6 V11.4 L8 14.2 L2 11.4 Z" fill="none" stroke="#5a3408" stroke-width="1"/></svg>
<div class="t " style="left:1356.5px;top:248px;letter-spacing:-0.430px;">Plane.011</div>
<div class="btn dk" style="left:1272.5px;top:279.5px;width:319.5px;height:19.5px;border-radius:5px;background:linear-gradient(#3c3c3c,#505050)"></div>
<div class="t w" style="left:1279px;top:284px;letter-spacing:-0.555px;">Add Modifier</div>
<svg class="abs" style="left:1582px;top:283px" width="7" height="13" viewBox="0 0 7 13"><path d="M3.5 0.5 L6.8 5.3 H0.2 Z M3.5 12.5 L6.8 7.7 H0.2 Z" fill="#a5a5a5"/></svg>
<div class="btn " style="left:1272.5px;top:304.5px;width:319.5px;height:123px;border-radius:5px;border-color:#3a3a3a;background:#757575"></div>
<div class="abs" style="left:1273.5px;top:305.5px;width:317.5px;height:31px;background:#7a7a7a;border-radius:4px 4px 0 0"></div>
<div class="abs" style="left:1273.5px;top:336.5px;width:317.5px;height:1px;background:#3a3a3a;"></div>
<svg class="abs" style="left:1281px;top:318px" width="13" height="9" viewBox="0 0 13 9"><path d="M1.5 1.5H11.5L6.5 7.5Z" fill="#f0f0f0" stroke="#111" stroke-width="1" stroke-linejoin="round"/></svg>
<svg class="abs" style="left:1309px;top:314px" width="16" height="16" viewBox="0 0 16 16"><path d="M2.5 4.6 L8.5 2.2 L13.5 4.2 V11 L8 14 L2.5 11.6 Z" fill="#5a98e8" stroke="#1c3c78" stroke-width="0.9"/><path d="M2.5 4.6 L8 6.8 L13.5 4.2 M8 6.8V14" stroke="#cfe2fb" stroke-width="0.9" fill="none"/><path d="M8 6.8 L13.5 4.2 V8 L10 8.2Z" fill="#e8f0ff"/></svg>
<div class="btn lt" style="left:1333.5px;top:312.5px;width:59px;height:19px;border-radius:5px;background:linear-gradient(#b4b4b4,#a0a0a0)"></div>
<div class="t " style="left:1342px;top:317px;letter-spacing:-0.697px;">EdgeSplit</div>
<div class="btn dk" style="left:1401.5px;top:312.5px;width:101.5px;height:19px;border-radius:5px;background:linear-gradient(#4a4a4a,#5a5a5a)"></div>
<div class="abs" style="left:1480.5px;top:313.5px;width:21.5px;height:17px;background:linear-gradient(#a6a6a6,#909090);border-radius:0 4px 4px 0"></div>
<div class="abs" style="left:1424.5px;top:313.5px;width:1px;height:17px;background:#2b2b2b;"></div>
<div class="abs" style="left:1452.5px;top:313.5px;width:1px;height:17px;background:#2b2b2b;"></div>
<div class="abs" style="left:1480px;top:313.5px;width:1px;height:17px;background:#2b2b2b;"></div>
<svg class="abs" style="left:1405px;top:314px" width="16" height="16" viewBox="0 0 16 16"><rect x="1.2" y="3.6" width="13.6" height="10" rx="1" fill="#e4e4e4" stroke="#111" stroke-width="1"/><rect x="3" y="1.8" width="4.4" height="2.2" fill="#ddd" stroke="#111" stroke-width="0.8"/><rect x="2.2" y="5.6" width="11.6" height="6.4" fill="#3a3a3a"/><circle cx="9.3" cy="8.8" r="3.5" fill="#555" stroke="#ccc" stroke-width="0.9"/><circle cx="9.3" cy="8.8" r="2" fill="#7a2820"/><circle cx="8.7" cy="8" r="0.9" fill="#2c4c9c"/><rect x="3" y="5" width="1.4" height="1.2" fill="#e02020"/></svg>
<svg class="abs" style="left:1430.5px;top:314px" width="16" height="16" viewBox="0 0 16 16"><path d="M1 8 C3.5 3.6 12.5 3.6 15 8 C12.5 12.4 3.5 12.4 1 8Z" fill="#f4f4f4" stroke="#222" stroke-width="0.9"/><circle cx="8" cy="7.4" r="2.6" fill="#777"/><circle cx="8" cy="7.4" r="1.3" fill="#111"/></svg>
<svg class="abs" style="left:1458.5px;top:314px" width="16" height="16" viewBox="0 0 16 16"><path d="M3 3.6 L8.8 2 L13 3.6 V11.6 L8 14 L3 11.6 Z" fill="#c8c8c8" stroke="#333" stroke-width="0.8"/><path d="M8 5.4V14M3 3.6L8 5.4L13 3.6" stroke="#444" stroke-width="0.7" fill="none"/><rect x="1.8" y="2.4" width="2.6" height="2.6" fill="#f09030" stroke="#5a3000" stroke-width="0.6"/><rect x="1.8" y="10.2" width="2.6" height="2.6" fill="#f09030" stroke="#5a3000" stroke-width="0.6"/><rect x="6.8" y="4.2" width="2.6" height="2.6" fill="#f09030" stroke="#5a3000" stroke-width="0.6"/><rect x="6.8" y="12" width="2.6" height="2.6" fill="#f09030" stroke="#5a3000" stroke-width="0.6"/><path d="M3.1 5v5.2M4.4 3.9l2.4 0.9" stroke="#5a3000" stroke-width="0.9"/></svg>
<svg class="abs" style="left:1483.5px;top:314px" width="16" height="16" viewBox="0 0 16 16"><path d="M2.5 3 H13.5 L8 14 Z M8 7 L2.5 3 M8 7 L13.5 3 M8 7V14" fill="none" stroke="#555" stroke-width="1"/><circle cx="2.5" cy="3" r="1.5" fill="#eee" stroke="#444" stroke-width="0.6"/><circle cx="13.5" cy="3" r="1.5" fill="#eee" stroke="#444" stroke-width="0.6"/><circle cx="8" cy="14" r="1.5" fill="#eee" stroke="#444" stroke-width="0.6"/><circle cx="8" cy="7" r="1.3" fill="#eee" stroke="#444" stroke-width="0.6"/></svg>
<div class="btn lt" style="left:1511.5px;top:312.5px;width:47px;height:19px;border-radius:5px"></div>
<div class="abs" style="left:1534.5px;top:313.5px;width:1px;height:17px;background:#2b2b2b;"></div>
<svg class="abs" style="left:1516.5px;top:317px" width="13" height="9" viewBox="0 0 13 9"><path d="M1.5 7.5H11.5L6.5 1.5Z" fill="#f0f0f0" stroke="#111" stroke-width="1" stroke-linejoin="round"/></svg>
<svg class="abs" style="left:1540px;top:317px" width="13" height="9" viewBox="0 0 13 9"><path d="M1.5 1.5H11.5L6.5 7.5Z" fill="#f0f0f0" stroke="#111" stroke-width="1" stroke-linejoin="round"/></svg>
<svg class="abs" style="left:1570.5px;top:315px" width="14" height="14" viewBox="0 0 14 14"><path d="M2.5 2.5l9 9M11.5 2.5l-9 9" stroke="#111" stroke-width="3.6"/><path d="M3 3l8 8M11 3l-8 8" stroke="#f4f4f4" stroke-width="1.8"/></svg>
<div class="btn lt" style="left:1277px;top:345.5px;width:151px;height:19px;border-radius:5px"></div>
<div class="t " style="left:1277px;top:350px;letter-spacing:-0.550px;width:151px;text-align:center">Apply</div>
<div class="btn lt" style="left:1436px;top:345.5px;width:151px;height:19px;border-radius:5px"></div>
<div class="t " style="left:1436px;top:350px;letter-spacing:-0.550px;width:151px;text-align:center">Copy</div>
<div class="btn " style="left:1280px;top:376.5px;width:14px;height:14px;border-radius:3.5px;background:linear-gradient(#4c4c4c,#5a5a5a);border-color:#333"></div>
<div class="t " style="left:1301px;top:378px;letter-spacing:-0.668px;">Edge Angle</div>
<div class="btn " style="left:1439.5px;top:376.5px;width:14px;height:14px;border-radius:3.5px;background:linear-gradient(#4c4c4c,#5a5a5a);border-color:#333"></div>
<svg class="abs" style="left:1440px;top:372px" width="16" height="18" viewBox="0 0 16 18"><path d="M3 10.5L6.5 15L13.5 3.5" fill="none" stroke="#1a1a1a" stroke-width="3.6"/><path d="M3 10.5L6.5 15L13.5 3.5" fill="none" stroke="#f2f2f2" stroke-width="1.8"/></svg>
<div class="t w" style="left:1461px;top:378px;letter-spacing:-0.755px;">Sharp Edges</div>
<div class="btn " style="left:1277px;top:396px;width:151px;height:19px;border-radius:9.5px;background:linear-gradient(#8c8c8c,#9a9a9a);border-color:#555"></div>
<div class="t " style="left:1292.5px;top:400px;letter-spacing:-0.542px;color:#5e5e5e">Split Angle:</div>
<div class="t " style="left:1380px;top:400px;letter-spacing:-0.550px;color:#5e5e5e;width:31.5px;text-align:right">30°</div>
<svg class="abs" style="left:1283px;top:402px" width="5" height="7" viewBox="0 0 5 7"><path d="M4 0.5L1 3.5L4 6.5Z" fill="#828282"/></svg>
<svg class="abs" style="left:1417px;top:402px" width="5" height="7" viewBox="0 0 5 7"><path d="M1 0.5L4 3.5L1 6.5Z" fill="#828282"/></svg>
<svg class="abs" style="left:1264px;top:1036px" width="14" height="14" viewBox="0 0 14 14"><path d="M0 1L13 14M0 5L9 14M0 9L5 14" stroke="#333" stroke-width="1"/><path d="M0 2.4L11.6 14M0 6.4L7.6 14M0 10.4L3.6 14" stroke="#9c9c9c" stroke-width="0.9"/></svg>
</body></html>
